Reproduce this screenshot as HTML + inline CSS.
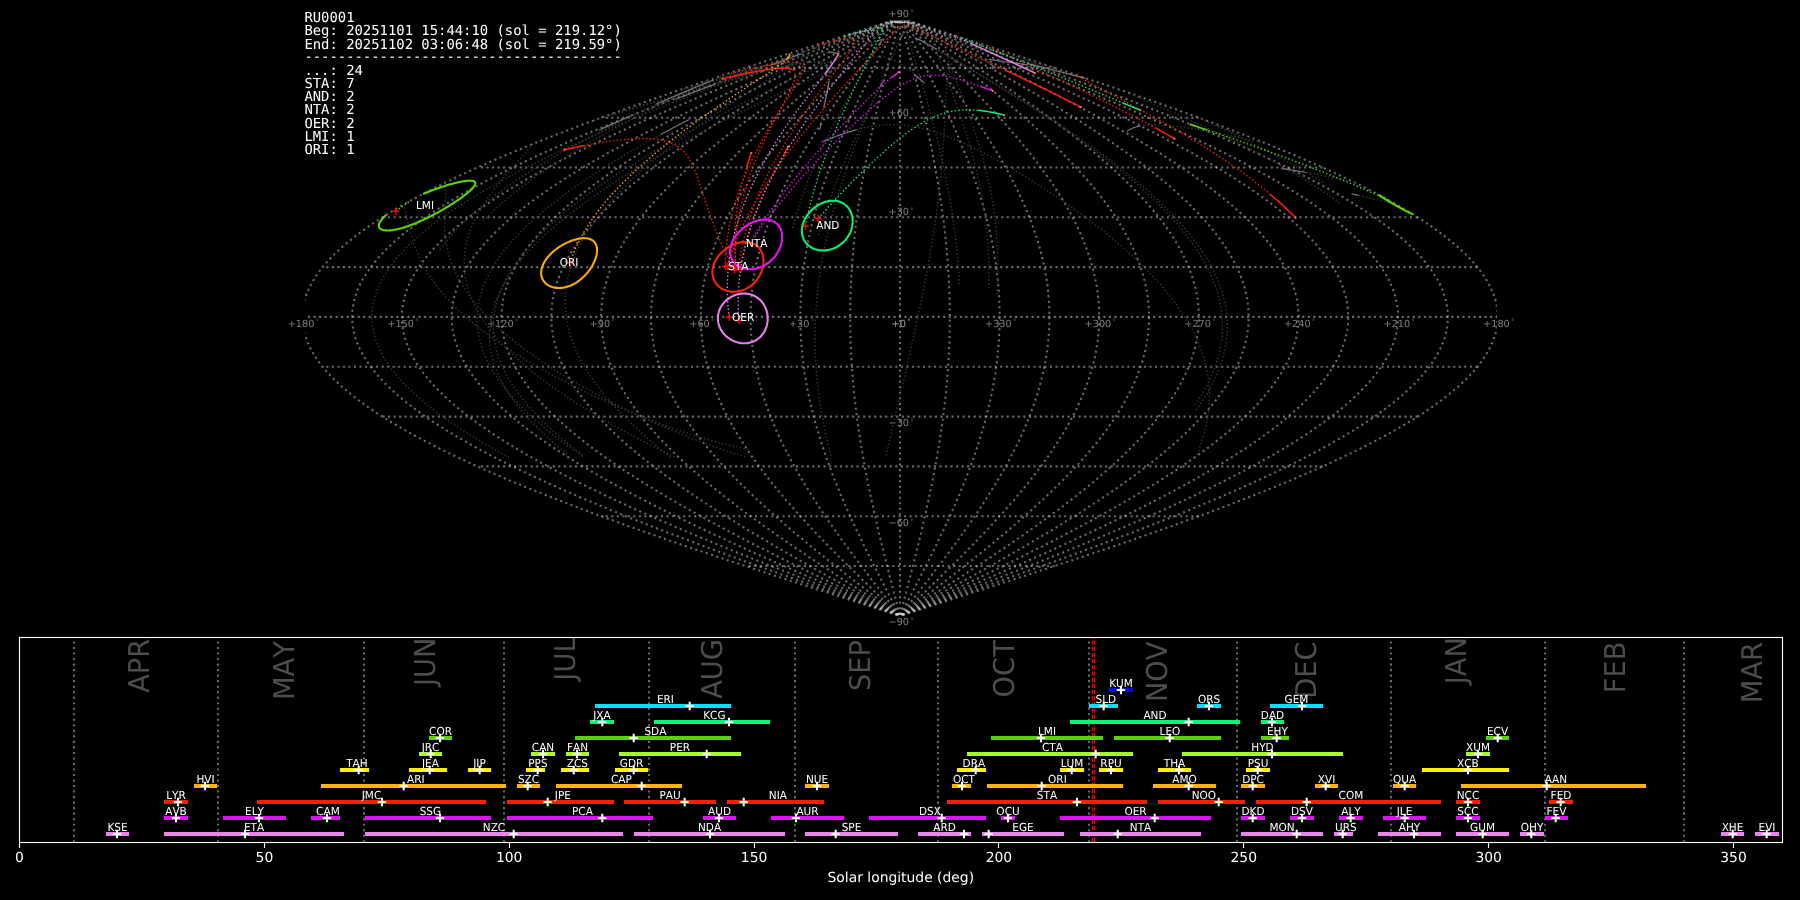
<!DOCTYPE html>
<html><head><meta charset="utf-8"><title>Shower association</title>
<style>html,body{margin:0;padding:0;background:#000;overflow:hidden}svg{display:block;will-change:transform;font-kerning:none}text{font-kerning:none;text-rendering:geometricPrecision}</style></head>
<body><svg width="1800" height="900" viewBox="0 0 1800 900">
<rect width="1800" height="900" fill="#000"/>
<defs><clipPath id="bc"><rect x="19.5" y="637.3" width="1763" height="205"/></clipPath><clipPath id="mc"><rect x="304.9" y="0" width="1192" height="630"/></clipPath></defs>
<g clip-path="url(#mc)" fill="none" stroke="#d4d4d4" stroke-opacity="0.5" stroke-width="2.083" stroke-dasharray="2.083 3.441">
<path d="M903.1,614.8 910.4,612.5 920.9,609.2 931.3,605.9 941.7,602.5 952.1,599.2 962.5,595.9 972.8,592.6 983.2,589.2 993.5,585.9 1003.8,582.6 1014.1,579.3 1024.3,576 1034.5,572.6 1044.6,569.3 1054.7,566 1064.8,562.7 1074.8,559.4 1084.7,556 1094.6,552.7 1104.4,549.4 1114.2,546.1 1123.9,542.8 1133.6,539.4 1143.1,536.1 1152.6,532.8 1162,529.5 1171.4,526.2 1180.6,522.8 1189.8,519.5 1198.9,516.2 1207.9,512.9 1216.7,509.6 1225.5,506.2 1234.2,502.9 1242.8,499.6 1251.3,496.3 1259.7,492.9 1268,489.6 1276.2,486.3 1284.2,483 1292.1,479.7 1300,476.3 1307.6,473 1315.2,469.7 1322.7,466.4 1330,463.1 1337.1,459.7 1344.2,456.4 1351.1,453.1 1357.9,449.8 1364.5,446.5 1371,443.1 1377.4,439.8 1383.6,436.5 1389.6,433.2 1395.5,429.9 1401.3,426.5 1406.9,423.2 1412.4,419.9 1417.6,416.6 1422.8,413.3 1427.8,409.9 1432.6,406.6 1437.2,403.3 1441.7,400 1446,396.6 1450.2,393.3 1454.2,390 1458,386.7 1461.7,383.4 1465.2,380 1468.5,376.7 1471.6,373.4 1474.6,370.1 1477.4,366.8 1480,363.4 1482.4,360.1 1484.7,356.8 1486.7,353.5 1488.6,350.2 1490.4,346.8 1491.9,343.5 1493.3,340.2 1494.5,336.9 1495.5,333.6 1496.3,330.2 1496.9,326.9 1497.4,323.6 1497.6,320.3 1497.7,316.9 1497.6,313.6 1497.4,310.3 1496.9,307 1496.3,303.7 1495.5,300.3 1494.5,297 1493.3,293.7 1491.9,290.4 1490.4,287.1 1488.6,283.7 1486.7,280.4 1484.7,277.1 1482.4,273.8 1480,270.5 1477.4,267.1 1474.6,263.8 1471.6,260.5 1468.5,257.2 1465.2,253.9 1461.7,250.5 1458,247.2 1454.2,243.9 1450.2,240.6 1446,237.3 1441.7,233.9 1437.2,230.6 1432.6,227.3 1427.8,224 1422.8,220.6 1417.6,217.3 1412.4,214 1406.9,210.7 1401.3,207.4 1395.5,204 1389.6,200.7 1383.6,197.4 1377.4,194.1 1371,190.8 1364.5,187.4 1357.9,184.1 1351.1,180.8 1344.2,177.5 1337.1,174.2 1330,170.8 1322.7,167.5 1315.2,164.2 1307.6,160.9 1300,157.6 1292.1,154.2 1284.2,150.9 1276.2,147.6 1268,144.3 1259.7,141 1251.3,137.6 1242.8,134.3 1234.2,131 1225.5,127.7 1216.7,124.3 1207.9,121 1198.9,117.7 1189.8,114.4 1180.6,111.1 1171.4,107.7 1162,104.4 1152.6,101.1 1143.1,97.8 1133.6,94.5 1123.9,91.1 1114.2,87.8 1104.4,84.5 1094.6,81.2 1084.7,77.9 1074.8,74.5 1064.8,71.2 1054.7,67.9 1044.6,64.6 1034.5,61.3 1024.3,57.9 1014.1,54.6 1003.8,51.3 993.5,48 983.2,44.7 972.8,41.3 962.5,38 952.1,34.7 941.7,31.4 931.3,28 920.9,24.7 910.4,21.4"/>
<path d="M902.9,614.8 909.6,612.5 919.1,609.2 928.7,605.9 938.2,602.5 947.8,599.2 957.3,595.9 966.8,592.6 976.3,589.2 985.7,585.9 995.1,582.6 1004.5,579.3 1013.9,576 1023.3,572.6 1032.6,569.3 1041.8,566 1051,562.7 1060.2,559.4 1069.3,556 1078.4,552.7 1087.4,549.4 1096.4,546.1 1105.3,542.8 1114.1,539.4 1122.9,536.1 1131.6,532.8 1140.2,529.5 1148.7,526.2 1157.2,522.8 1165.6,519.5 1174,516.2 1182.2,512.9 1190.4,509.6 1198.4,506.2 1206.4,502.9 1214.3,499.6 1222.1,496.3 1229.7,492.9 1237.3,489.6 1244.8,486.3 1252.2,483 1259.5,479.7 1266.6,476.3 1273.7,473 1280.6,469.7 1287.4,466.4 1294.1,463.1 1300.7,459.7 1307.2,456.4 1313.5,453.1 1319.7,449.8 1325.8,446.5 1331.8,443.1 1337.6,439.8 1343.3,436.5 1348.8,433.2 1354.2,429.9 1359.5,426.5 1364.7,423.2 1369.7,419.9 1374.5,416.6 1379.2,413.3 1383.8,409.9 1388.2,406.6 1392.5,403.3 1396.6,400 1400.5,396.6 1404.4,393.3 1408,390 1411.5,386.7 1414.9,383.4 1418.1,380 1421.1,376.7 1424,373.4 1426.7,370.1 1429.2,366.8 1431.6,363.4 1433.9,360.1 1435.9,356.8 1437.8,353.5 1439.6,350.2 1441.2,346.8 1442.6,343.5 1443.8,340.2 1444.9,336.9 1445.8,333.6 1446.6,330.2 1447.2,326.9 1447.6,323.6 1447.8,320.3 1447.9,316.9 1447.8,313.6 1447.6,310.3 1447.2,307 1446.6,303.7 1445.8,300.3 1444.9,297 1443.8,293.7 1442.6,290.4 1441.2,287.1 1439.6,283.7 1437.8,280.4 1435.9,277.1 1433.9,273.8 1431.6,270.5 1429.2,267.1 1426.7,263.8 1424,260.5 1421.1,257.2 1418.1,253.9 1414.9,250.5 1411.5,247.2 1408,243.9 1404.4,240.6 1400.5,237.3 1396.6,233.9 1392.5,230.6 1388.2,227.3 1383.8,224 1379.2,220.6 1374.5,217.3 1369.7,214 1364.7,210.7 1359.5,207.4 1354.2,204 1348.8,200.7 1343.3,197.4 1337.6,194.1 1331.8,190.8 1325.8,187.4 1319.7,184.1 1313.5,180.8 1307.2,177.5 1300.7,174.2 1294.1,170.8 1287.4,167.5 1280.6,164.2 1273.7,160.9 1266.6,157.6 1259.5,154.2 1252.2,150.9 1244.8,147.6 1237.3,144.3 1229.7,141 1222.1,137.6 1214.3,134.3 1206.4,131 1198.4,127.7 1190.4,124.3 1182.2,121 1174,117.7 1165.6,114.4 1157.2,111.1 1148.7,107.7 1140.2,104.4 1131.6,101.1 1122.9,97.8 1114.1,94.5 1105.3,91.1 1096.4,87.8 1087.4,84.5 1078.4,81.2 1069.3,77.9 1060.2,74.5 1051,71.2 1041.8,67.9 1032.6,64.6 1023.3,61.3 1013.9,57.9 1004.5,54.6 995.1,51.3 985.7,48 976.3,44.7 966.8,41.3 957.3,38 947.8,34.7 938.2,31.4 928.7,28 919.1,24.7 909.6,21.4"/>
<path d="M902.6,614.8 908.7,612.5 917.4,609.2 926.1,605.9 934.7,602.5 943.4,599.2 952.1,595.9 960.7,592.6 969.3,589.2 977.9,585.9 986.5,582.6 995,579.3 1003.6,576 1012,572.6 1020.5,569.3 1028.9,566 1037.3,562.7 1045.6,559.4 1053.9,556 1062.2,552.7 1070.4,549.4 1078.5,546.1 1086.6,542.8 1094.6,539.4 1102.6,536.1 1110.5,532.8 1118.4,529.5 1126.1,526.2 1133.8,522.8 1141.5,519.5 1149.1,516.2 1156.5,512.9 1164,509.6 1171.3,506.2 1178.5,502.9 1185.7,499.6 1192.8,496.3 1199.8,492.9 1206.7,489.6 1213.5,486.3 1220.2,483 1226.8,479.7 1233.3,476.3 1239.7,473 1246,469.7 1252.2,466.4 1258.3,463.1 1264.3,459.7 1270.2,456.4 1275.9,453.1 1281.6,449.8 1287.1,446.5 1292.5,443.1 1297.8,439.8 1303,436.5 1308,433.2 1312.9,429.9 1317.7,426.5 1322.4,423.2 1327,419.9 1331.4,416.6 1335.7,413.3 1339.8,409.9 1343.8,406.6 1347.7,403.3 1351.4,400 1355,396.6 1358.5,393.3 1361.8,390 1365,386.7 1368.1,383.4 1371,380 1373.7,376.7 1376.3,373.4 1378.8,370.1 1381.1,366.8 1383.3,363.4 1385.3,360.1 1387.2,356.8 1389,353.5 1390.5,350.2 1392,346.8 1393.3,343.5 1394.4,340.2 1395.4,336.9 1396.2,333.6 1396.9,330.2 1397.4,326.9 1397.8,323.6 1398,320.3 1398.1,316.9 1398,313.6 1397.8,310.3 1397.4,307 1396.9,303.7 1396.2,300.3 1395.4,297 1394.4,293.7 1393.3,290.4 1392,287.1 1390.5,283.7 1389,280.4 1387.2,277.1 1385.3,273.8 1383.3,270.5 1381.1,267.1 1378.8,263.8 1376.3,260.5 1373.7,257.2 1371,253.9 1368.1,250.5 1365,247.2 1361.8,243.9 1358.5,240.6 1355,237.3 1351.4,233.9 1347.7,230.6 1343.8,227.3 1339.8,224 1335.7,220.6 1331.4,217.3 1327,214 1322.4,210.7 1317.7,207.4 1312.9,204 1308,200.7 1303,197.4 1297.8,194.1 1292.5,190.8 1287.1,187.4 1281.6,184.1 1275.9,180.8 1270.2,177.5 1264.3,174.2 1258.3,170.8 1252.2,167.5 1246,164.2 1239.7,160.9 1233.3,157.6 1226.8,154.2 1220.2,150.9 1213.5,147.6 1206.7,144.3 1199.8,141 1192.8,137.6 1185.7,134.3 1178.5,131 1171.3,127.7 1164,124.3 1156.5,121 1149.1,117.7 1141.5,114.4 1133.8,111.1 1126.1,107.7 1118.4,104.4 1110.5,101.1 1102.6,97.8 1094.6,94.5 1086.6,91.1 1078.5,87.8 1070.4,84.5 1062.2,81.2 1053.9,77.9 1045.6,74.5 1037.3,71.2 1028.9,67.9 1020.5,64.6 1012,61.3 1003.6,57.9 995,54.6 986.5,51.3 977.9,48 969.3,44.7 960.7,41.3 952.1,38 943.4,34.7 934.7,31.4 926.1,28 917.4,24.7 908.7,21.4"/>
<path d="M902.3,614.8 907.8,612.5 915.6,609.2 923.5,605.9 931.3,602.5 939.1,599.2 946.9,595.9 954.6,592.6 962.4,589.2 970.1,585.9 977.8,582.6 985.5,579.3 993.2,576 1000.8,572.6 1008.5,569.3 1016,566 1023.6,562.7 1031.1,559.4 1038.5,556 1046,552.7 1053.3,549.4 1060.7,546.1 1067.9,542.8 1075.2,539.4 1082.3,536.1 1089.5,532.8 1096.5,529.5 1103.5,526.2 1110.5,522.8 1117.3,519.5 1124.1,516.2 1130.9,512.9 1137.6,509.6 1144.2,506.2 1150.7,502.9 1157.1,499.6 1163.5,496.3 1169.8,492.9 1176,489.6 1182.1,486.3 1188.2,483 1194.1,479.7 1200,476.3 1205.7,473 1211.4,469.7 1217,466.4 1222.5,463.1 1227.9,459.7 1233.1,456.4 1238.3,453.1 1243.4,449.8 1248.4,446.5 1253.3,443.1 1258,439.8 1262.7,436.5 1267.2,433.2 1271.7,429.9 1276,426.5 1280.2,423.2 1284.3,419.9 1288.2,416.6 1292.1,413.3 1295.8,409.9 1299.4,406.6 1302.9,403.3 1306.3,400 1309.5,396.6 1312.7,393.3 1315.7,390 1318.5,386.7 1321.3,383.4 1323.9,380 1326.4,376.7 1328.7,373.4 1330.9,370.1 1333,366.8 1335,363.4 1336.8,360.1 1338.5,356.8 1340.1,353.5 1341.5,350.2 1342.8,346.8 1343.9,343.5 1345,340.2 1345.8,336.9 1346.6,333.6 1347.2,330.2 1347.7,326.9 1348,323.6 1348.2,320.3 1348.3,316.9 1348.2,313.6 1348,310.3 1347.7,307 1347.2,303.7 1346.6,300.3 1345.8,297 1345,293.7 1343.9,290.4 1342.8,287.1 1341.5,283.7 1340.1,280.4 1338.5,277.1 1336.8,273.8 1335,270.5 1333,267.1 1330.9,263.8 1328.7,260.5 1326.4,257.2 1323.9,253.9 1321.3,250.5 1318.5,247.2 1315.7,243.9 1312.7,240.6 1309.5,237.3 1306.3,233.9 1302.9,230.6 1299.4,227.3 1295.8,224 1292.1,220.6 1288.2,217.3 1284.3,214 1280.2,210.7 1276,207.4 1271.7,204 1267.2,200.7 1262.7,197.4 1258,194.1 1253.3,190.8 1248.4,187.4 1243.4,184.1 1238.3,180.8 1233.1,177.5 1227.9,174.2 1222.5,170.8 1217,167.5 1211.4,164.2 1205.7,160.9 1200,157.6 1194.1,154.2 1188.2,150.9 1182.1,147.6 1176,144.3 1169.8,141 1163.5,137.6 1157.1,134.3 1150.7,131 1144.2,127.7 1137.6,124.3 1130.9,121 1124.1,117.7 1117.3,114.4 1110.5,111.1 1103.5,107.7 1096.5,104.4 1089.5,101.1 1082.3,97.8 1075.2,94.5 1067.9,91.1 1060.7,87.8 1053.3,84.5 1046,81.2 1038.5,77.9 1031.1,74.5 1023.6,71.2 1016,67.9 1008.5,64.6 1000.8,61.3 993.2,57.9 985.5,54.6 977.8,51.3 970.1,48 962.4,44.7 954.6,41.3 946.9,38 939.1,34.7 931.3,31.4 923.5,28 915.6,24.7 907.8,21.4"/>
<path d="M902.1,614.8 907,612.5 913.9,609.2 920.9,605.9 927.8,602.5 934.7,599.2 941.7,595.9 948.6,592.6 955.5,589.2 962.3,585.9 969.2,582.6 976,579.3 982.8,576 989.6,572.6 996.4,569.3 1003.1,566 1009.8,562.7 1016.5,559.4 1023.1,556 1029.7,552.7 1036.3,549.4 1042.8,546.1 1049.3,542.8 1055.7,539.4 1062.1,536.1 1068.4,532.8 1074.7,529.5 1080.9,526.2 1087.1,522.8 1093.2,519.5 1099.2,516.2 1105.2,512.9 1111.2,509.6 1117,506.2 1122.8,502.9 1128.6,499.6 1134.2,496.3 1139.8,492.9 1145.3,489.6 1150.8,486.3 1156.1,483 1161.4,479.7 1166.6,476.3 1171.8,473 1176.8,469.7 1181.8,466.4 1186.6,463.1 1191.4,459.7 1196.1,456.4 1200.7,453.1 1205.3,449.8 1209.7,446.5 1214,443.1 1218.2,439.8 1222.4,436.5 1226.4,433.2 1230.4,429.9 1234.2,426.5 1237.9,423.2 1241.6,419.9 1245.1,416.6 1248.5,413.3 1251.8,409.9 1255.1,406.6 1258.2,403.3 1261.1,400 1264,396.6 1266.8,393.3 1269.5,390 1272,386.7 1274.5,383.4 1276.8,380 1279,376.7 1281.1,373.4 1283,370.1 1284.9,366.8 1286.6,363.4 1288.3,360.1 1289.8,356.8 1291.2,353.5 1292.4,350.2 1293.6,346.8 1294.6,343.5 1295.5,340.2 1296.3,336.9 1297,333.6 1297.5,330.2 1297.9,326.9 1298.2,323.6 1298.4,320.3 1298.5,316.9 1298.4,313.6 1298.2,310.3 1297.9,307 1297.5,303.7 1297,300.3 1296.3,297 1295.5,293.7 1294.6,290.4 1293.6,287.1 1292.4,283.7 1291.2,280.4 1289.8,277.1 1288.3,273.8 1286.6,270.5 1284.9,267.1 1283,263.8 1281.1,260.5 1279,257.2 1276.8,253.9 1274.5,250.5 1272,247.2 1269.5,243.9 1266.8,240.6 1264,237.3 1261.1,233.9 1258.2,230.6 1255.1,227.3 1251.8,224 1248.5,220.6 1245.1,217.3 1241.6,214 1237.9,210.7 1234.2,207.4 1230.4,204 1226.4,200.7 1222.4,197.4 1218.2,194.1 1214,190.8 1209.7,187.4 1205.3,184.1 1200.7,180.8 1196.1,177.5 1191.4,174.2 1186.6,170.8 1181.8,167.5 1176.8,164.2 1171.8,160.9 1166.6,157.6 1161.4,154.2 1156.1,150.9 1150.8,147.6 1145.3,144.3 1139.8,141 1134.2,137.6 1128.6,134.3 1122.8,131 1117,127.7 1111.2,124.3 1105.2,121 1099.2,117.7 1093.2,114.4 1087.1,111.1 1080.9,107.7 1074.7,104.4 1068.4,101.1 1062.1,97.8 1055.7,94.5 1049.3,91.1 1042.8,87.8 1036.3,84.5 1029.7,81.2 1023.1,77.9 1016.5,74.5 1009.8,71.2 1003.1,67.9 996.4,64.6 989.6,61.3 982.8,57.9 976,54.6 969.2,51.3 962.3,48 955.5,44.7 948.6,41.3 941.7,38 934.7,34.7 927.8,31.4 920.9,28 913.9,24.7 907,21.4"/>
<path d="M901.8,614.8 906.1,612.5 912.2,609.2 918.2,605.9 924.3,602.5 930.4,599.2 936.4,595.9 942.5,592.6 948.5,589.2 954.5,585.9 960.5,582.6 966.5,579.3 972.5,576 978.4,572.6 984.4,569.3 990.2,566 996.1,562.7 1001.9,559.4 1007.7,556 1013.5,552.7 1019.3,549.4 1025,546.1 1030.6,542.8 1036.2,539.4 1041.8,536.1 1047.4,532.8 1052.8,529.5 1058.3,526.2 1063.7,522.8 1069,519.5 1074.3,516.2 1079.6,512.9 1084.8,509.6 1089.9,506.2 1095,502.9 1100,499.6 1104.9,496.3 1109.8,492.9 1114.7,489.6 1119.4,486.3 1124.1,483 1128.8,479.7 1133.3,476.3 1137.8,473 1142.2,469.7 1146.5,466.4 1150.8,463.1 1155,459.7 1159.1,456.4 1163.1,453.1 1167.1,449.8 1171,446.5 1174.8,443.1 1178.5,439.8 1182.1,436.5 1185.6,433.2 1189.1,429.9 1192.4,426.5 1195.7,423.2 1198.9,419.9 1202,416.6 1205,413.3 1207.9,409.9 1210.7,406.6 1213.4,403.3 1216,400 1218.5,396.6 1221,393.3 1223.3,390 1225.5,386.7 1227.6,383.4 1229.7,380 1231.6,376.7 1233.4,373.4 1235.2,370.1 1236.8,366.8 1238.3,363.4 1239.7,360.1 1241.1,356.8 1242.3,353.5 1243.4,350.2 1244.4,346.8 1245.3,343.5 1246.1,340.2 1246.8,336.9 1247.3,333.6 1247.8,330.2 1248.2,326.9 1248.5,323.6 1248.6,320.3 1248.7,316.9 1248.6,313.6 1248.5,310.3 1248.2,307 1247.8,303.7 1247.3,300.3 1246.8,297 1246.1,293.7 1245.3,290.4 1244.4,287.1 1243.4,283.7 1242.3,280.4 1241.1,277.1 1239.7,273.8 1238.3,270.5 1236.8,267.1 1235.2,263.8 1233.4,260.5 1231.6,257.2 1229.7,253.9 1227.6,250.5 1225.5,247.2 1223.3,243.9 1221,240.6 1218.5,237.3 1216,233.9 1213.4,230.6 1210.7,227.3 1207.9,224 1205,220.6 1202,217.3 1198.9,214 1195.7,210.7 1192.4,207.4 1189.1,204 1185.6,200.7 1182.1,197.4 1178.5,194.1 1174.8,190.8 1171,187.4 1167.1,184.1 1163.1,180.8 1159.1,177.5 1155,174.2 1150.8,170.8 1146.5,167.5 1142.2,164.2 1137.8,160.9 1133.3,157.6 1128.8,154.2 1124.1,150.9 1119.4,147.6 1114.7,144.3 1109.8,141 1104.9,137.6 1100,134.3 1095,131 1089.9,127.7 1084.8,124.3 1079.6,121 1074.3,117.7 1069,114.4 1063.7,111.1 1058.3,107.7 1052.8,104.4 1047.4,101.1 1041.8,97.8 1036.2,94.5 1030.6,91.1 1025,87.8 1019.3,84.5 1013.5,81.2 1007.7,77.9 1001.9,74.5 996.1,71.2 990.2,67.9 984.4,64.6 978.4,61.3 972.5,57.9 966.5,54.6 960.5,51.3 954.5,48 948.5,44.7 942.5,41.3 936.4,38 930.4,34.7 924.3,31.4 918.2,28 912.2,24.7 906.1,21.4"/>
<path d="M901.6,614.8 905.2,612.5 910.4,609.2 915.6,605.9 920.8,602.5 926,599.2 931.2,595.9 936.4,592.6 941.6,589.2 946.8,585.9 951.9,582.6 957,579.3 962.1,576 967.2,572.6 972.3,569.3 977.4,566 982.4,562.7 987.4,559.4 992.4,556 997.3,552.7 1002.2,549.4 1007.1,546.1 1012,542.8 1016.8,539.4 1021.6,536.1 1026.3,532.8 1031,529.5 1035.7,526.2 1040.3,522.8 1044.9,519.5 1049.4,516.2 1053.9,512.9 1058.4,509.6 1062.8,506.2 1067.1,502.9 1071.4,499.6 1075.7,496.3 1079.9,492.9 1084,489.6 1088.1,486.3 1092.1,483 1096.1,479.7 1100,476.3 1103.8,473 1107.6,469.7 1111.3,466.4 1115,463.1 1118.6,459.7 1122.1,456.4 1125.6,453.1 1128.9,449.8 1132.3,446.5 1135.5,443.1 1138.7,439.8 1141.8,436.5 1144.8,433.2 1147.8,429.9 1150.6,426.5 1153.5,423.2 1156.2,419.9 1158.8,416.6 1161.4,413.3 1163.9,409.9 1166.3,406.6 1168.6,403.3 1170.9,400 1173,396.6 1175.1,393.3 1177.1,390 1179,386.7 1180.8,383.4 1182.6,380 1184.2,376.7 1185.8,373.4 1187.3,370.1 1188.7,366.8 1190,363.4 1191.2,360.1 1192.3,356.8 1193.4,353.5 1194.3,350.2 1195.2,346.8 1196,343.5 1196.6,340.2 1197.2,336.9 1197.7,333.6 1198.1,330.2 1198.5,326.9 1198.7,323.6 1198.8,320.3 1198.9,316.9 1198.8,313.6 1198.7,310.3 1198.5,307 1198.1,303.7 1197.7,300.3 1197.2,297 1196.6,293.7 1196,290.4 1195.2,287.1 1194.3,283.7 1193.4,280.4 1192.3,277.1 1191.2,273.8 1190,270.5 1188.7,267.1 1187.3,263.8 1185.8,260.5 1184.2,257.2 1182.6,253.9 1180.8,250.5 1179,247.2 1177.1,243.9 1175.1,240.6 1173,237.3 1170.9,233.9 1168.6,230.6 1166.3,227.3 1163.9,224 1161.4,220.6 1158.8,217.3 1156.2,214 1153.5,210.7 1150.6,207.4 1147.8,204 1144.8,200.7 1141.8,197.4 1138.7,194.1 1135.5,190.8 1132.3,187.4 1128.9,184.1 1125.6,180.8 1122.1,177.5 1118.6,174.2 1115,170.8 1111.3,167.5 1107.6,164.2 1103.8,160.9 1100,157.6 1096.1,154.2 1092.1,150.9 1088.1,147.6 1084,144.3 1079.9,141 1075.7,137.6 1071.4,134.3 1067.1,131 1062.8,127.7 1058.4,124.3 1053.9,121 1049.4,117.7 1044.9,114.4 1040.3,111.1 1035.7,107.7 1031,104.4 1026.3,101.1 1021.6,97.8 1016.8,94.5 1012,91.1 1007.1,87.8 1002.2,84.5 997.3,81.2 992.4,77.9 987.4,74.5 982.4,71.2 977.4,67.9 972.3,64.6 967.2,61.3 962.1,57.9 957,54.6 951.9,51.3 946.8,48 941.6,44.7 936.4,41.3 931.2,38 926,34.7 920.8,31.4 915.6,28 910.4,24.7 905.2,21.4"/>
<path d="M901.3,614.8 904.3,612.5 908.7,609.2 913,605.9 917.4,602.5 921.7,599.2 926,595.9 930.4,592.6 934.7,589.2 939,585.9 943.2,582.6 947.5,579.3 951.8,576 956,572.6 960.3,569.3 964.5,566 968.6,562.7 972.8,559.4 977,556 981.1,552.7 985.2,549.4 989.3,546.1 993.3,542.8 997.3,539.4 1001.3,536.1 1005.3,532.8 1009.2,529.5 1013.1,526.2 1016.9,522.8 1020.7,519.5 1024.5,516.2 1028.3,512.9 1032,509.6 1035.6,506.2 1039.3,502.9 1042.9,499.6 1046.4,496.3 1049.9,492.9 1053.3,489.6 1056.7,486.3 1060.1,483 1063.4,479.7 1066.6,476.3 1069.9,473 1073,469.7 1076.1,466.4 1079.2,463.1 1082.1,459.7 1085.1,456.4 1088,453.1 1090.8,449.8 1093.6,446.5 1096.3,443.1 1098.9,439.8 1101.5,436.5 1104,433.2 1106.5,429.9 1108.9,426.5 1111.2,423.2 1113.5,419.9 1115.7,416.6 1117.8,413.3 1119.9,409.9 1121.9,406.6 1123.8,403.3 1125.7,400 1127.5,396.6 1129.3,393.3 1130.9,390 1132.5,386.7 1134,383.4 1135.5,380 1136.9,376.7 1138.2,373.4 1139.4,370.1 1140.6,366.8 1141.7,363.4 1142.7,360.1 1143.6,356.8 1144.5,353.5 1145.3,350.2 1146,346.8 1146.6,343.5 1147.2,340.2 1147.7,336.9 1148.1,333.6 1148.4,330.2 1148.7,326.9 1148.9,323.6 1149,320.3 1149.1,316.9 1149,313.6 1148.9,310.3 1148.7,307 1148.4,303.7 1148.1,300.3 1147.7,297 1147.2,293.7 1146.6,290.4 1146,287.1 1145.3,283.7 1144.5,280.4 1143.6,277.1 1142.7,273.8 1141.7,270.5 1140.6,267.1 1139.4,263.8 1138.2,260.5 1136.9,257.2 1135.5,253.9 1134,250.5 1132.5,247.2 1130.9,243.9 1129.3,240.6 1127.5,237.3 1125.7,233.9 1123.8,230.6 1121.9,227.3 1119.9,224 1117.8,220.6 1115.7,217.3 1113.5,214 1111.2,210.7 1108.9,207.4 1106.5,204 1104,200.7 1101.5,197.4 1098.9,194.1 1096.3,190.8 1093.6,187.4 1090.8,184.1 1088,180.8 1085.1,177.5 1082.1,174.2 1079.2,170.8 1076.1,167.5 1073,164.2 1069.9,160.9 1066.6,157.6 1063.4,154.2 1060.1,150.9 1056.7,147.6 1053.3,144.3 1049.9,141 1046.4,137.6 1042.9,134.3 1039.3,131 1035.6,127.7 1032,124.3 1028.3,121 1024.5,117.7 1020.7,114.4 1016.9,111.1 1013.1,107.7 1009.2,104.4 1005.3,101.1 1001.3,97.8 997.3,94.5 993.3,91.1 989.3,87.8 985.2,84.5 981.1,81.2 977,77.9 972.8,74.5 968.6,71.2 964.5,67.9 960.3,64.6 956,61.3 951.8,57.9 947.5,54.6 943.2,51.3 939,48 934.7,44.7 930.4,41.3 926,38 921.7,34.7 917.4,31.4 913,28 908.7,24.7 904.3,21.4"/>
<path d="M901,614.8 903.5,612.5 907,609.2 910.4,605.9 913.9,602.5 917.4,599.2 920.8,595.9 924.3,592.6 927.7,589.2 931.2,585.9 934.6,582.6 938,579.3 941.4,576 944.8,572.6 948.2,569.3 951.6,566 954.9,562.7 958.3,559.4 961.6,556 964.9,552.7 968.1,549.4 971.4,546.1 974.6,542.8 977.9,539.4 981,536.1 984.2,532.8 987.3,529.5 990.5,526.2 993.5,522.8 996.6,519.5 999.6,516.2 1002.6,512.9 1005.6,509.6 1008.5,506.2 1011.4,502.9 1014.3,499.6 1017.1,496.3 1019.9,492.9 1022.7,489.6 1025.4,486.3 1028.1,483 1030.7,479.7 1033.3,476.3 1035.9,473 1038.4,469.7 1040.9,466.4 1043.3,463.1 1045.7,459.7 1048.1,456.4 1050.4,453.1 1052.6,449.8 1054.8,446.5 1057,443.1 1059.1,439.8 1061.2,436.5 1063.2,433.2 1065.2,429.9 1067.1,426.5 1069,423.2 1070.8,419.9 1072.5,416.6 1074.3,413.3 1075.9,409.9 1077.5,406.6 1079.1,403.3 1080.6,400 1082,396.6 1083.4,393.3 1084.7,390 1086,386.7 1087.2,383.4 1088.4,380 1089.5,376.7 1090.5,373.4 1091.5,370.1 1092.5,366.8 1093.3,363.4 1094.1,360.1 1094.9,356.8 1095.6,353.5 1096.2,350.2 1096.8,346.8 1097.3,343.5 1097.8,340.2 1098.2,336.9 1098.5,333.6 1098.8,330.2 1099,326.9 1099.1,323.6 1099.2,320.3 1099.2,316.9 1099.2,313.6 1099.1,310.3 1099,307 1098.8,303.7 1098.5,300.3 1098.2,297 1097.8,293.7 1097.3,290.4 1096.8,287.1 1096.2,283.7 1095.6,280.4 1094.9,277.1 1094.1,273.8 1093.3,270.5 1092.5,267.1 1091.5,263.8 1090.5,260.5 1089.5,257.2 1088.4,253.9 1087.2,250.5 1086,247.2 1084.7,243.9 1083.4,240.6 1082,237.3 1080.6,233.9 1079.1,230.6 1077.5,227.3 1075.9,224 1074.3,220.6 1072.5,217.3 1070.8,214 1069,210.7 1067.1,207.4 1065.2,204 1063.2,200.7 1061.2,197.4 1059.1,194.1 1057,190.8 1054.8,187.4 1052.6,184.1 1050.4,180.8 1048.1,177.5 1045.7,174.2 1043.3,170.8 1040.9,167.5 1038.4,164.2 1035.9,160.9 1033.3,157.6 1030.7,154.2 1028.1,150.9 1025.4,147.6 1022.7,144.3 1019.9,141 1017.1,137.6 1014.3,134.3 1011.4,131 1008.5,127.7 1005.6,124.3 1002.6,121 999.6,117.7 996.6,114.4 993.5,111.1 990.5,107.7 987.3,104.4 984.2,101.1 981,97.8 977.9,94.5 974.6,91.1 971.4,87.8 968.1,84.5 964.9,81.2 961.6,77.9 958.3,74.5 954.9,71.2 951.6,67.9 948.2,64.6 944.8,61.3 941.4,57.9 938,54.6 934.6,51.3 931.2,48 927.7,44.7 924.3,41.3 920.8,38 917.4,34.7 913.9,31.4 910.4,28 907,24.7 903.5,21.4"/>
<path d="M900.8,614.8 902.6,612.5 905.2,609.2 907.8,605.9 910.4,602.5 913,599.2 915.6,595.9 918.2,592.6 920.8,589.2 923.4,585.9 925.9,582.6 928.5,579.3 931.1,576 933.6,572.6 936.2,569.3 938.7,566 941.2,562.7 943.7,559.4 946.2,556 948.7,552.7 951.1,549.4 953.6,546.1 956,542.8 958.4,539.4 960.8,536.1 963.2,532.8 965.5,529.5 967.8,526.2 970.2,522.8 972.4,519.5 974.7,516.2 977,512.9 979.2,509.6 981.4,506.2 983.6,502.9 985.7,499.6 987.8,496.3 989.9,492.9 992,489.6 994,486.3 996.1,483 998,479.7 1000,476.3 1001.9,473 1003.8,469.7 1005.7,466.4 1007.5,463.1 1009.3,459.7 1011,456.4 1012.8,453.1 1014.5,449.8 1016.1,446.5 1017.8,443.1 1019.3,439.8 1020.9,436.5 1022.4,433.2 1023.9,429.9 1025.3,426.5 1026.7,423.2 1028.1,419.9 1029.4,416.6 1030.7,413.3 1031.9,409.9 1033.1,406.6 1034.3,403.3 1035.4,400 1036.5,396.6 1037.6,393.3 1038.6,390 1039.5,386.7 1040.4,383.4 1041.3,380 1042.1,376.7 1042.9,373.4 1043.6,370.1 1044.3,366.8 1045,363.4 1045.6,360.1 1046.2,356.8 1046.7,353.5 1047.2,350.2 1047.6,346.8 1048,343.5 1048.3,340.2 1048.6,336.9 1048.9,333.6 1049.1,330.2 1049.2,326.9 1049.3,323.6 1049.4,320.3 1049.4,316.9 1049.4,313.6 1049.3,310.3 1049.2,307 1049.1,303.7 1048.9,300.3 1048.6,297 1048.3,293.7 1048,290.4 1047.6,287.1 1047.2,283.7 1046.7,280.4 1046.2,277.1 1045.6,273.8 1045,270.5 1044.3,267.1 1043.6,263.8 1042.9,260.5 1042.1,257.2 1041.3,253.9 1040.4,250.5 1039.5,247.2 1038.6,243.9 1037.6,240.6 1036.5,237.3 1035.4,233.9 1034.3,230.6 1033.1,227.3 1031.9,224 1030.7,220.6 1029.4,217.3 1028.1,214 1026.7,210.7 1025.3,207.4 1023.9,204 1022.4,200.7 1020.9,197.4 1019.3,194.1 1017.8,190.8 1016.1,187.4 1014.5,184.1 1012.8,180.8 1011,177.5 1009.3,174.2 1007.5,170.8 1005.7,167.5 1003.8,164.2 1001.9,160.9 1000,157.6 998,154.2 996.1,150.9 994,147.6 992,144.3 989.9,141 987.8,137.6 985.7,134.3 983.6,131 981.4,127.7 979.2,124.3 977,121 974.7,117.7 972.4,114.4 970.2,111.1 967.8,107.7 965.5,104.4 963.2,101.1 960.8,97.8 958.4,94.5 956,91.1 953.6,87.8 951.1,84.5 948.7,81.2 946.2,77.9 943.7,74.5 941.2,71.2 938.7,67.9 936.2,64.6 933.6,61.3 931.1,57.9 928.5,54.6 925.9,51.3 923.4,48 920.8,44.7 918.2,41.3 915.6,38 913,34.7 910.4,31.4 907.8,28 905.2,24.7 902.6,21.4"/>
<path d="M900.5,614.8 901.7,612.5 903.5,609.2 905.2,605.9 906.9,602.5 908.7,599.2 910.4,595.9 912.1,592.6 913.9,589.2 915.6,585.9 917.3,582.6 919,579.3 920.7,576 922.4,572.6 924.1,569.3 925.8,566 927.5,562.7 929.1,559.4 930.8,556 932.4,552.7 934.1,549.4 935.7,546.1 937.3,542.8 938.9,539.4 940.5,536.1 942.1,532.8 943.7,529.5 945.2,526.2 946.8,522.8 948.3,519.5 949.8,516.2 951.3,512.9 952.8,509.6 954.3,506.2 955.7,502.9 957.1,499.6 958.6,496.3 960,492.9 961.3,489.6 962.7,486.3 964,483 965.4,479.7 966.7,476.3 967.9,473 969.2,469.7 970.4,466.4 971.7,463.1 972.9,459.7 974,456.4 975.2,453.1 976.3,449.8 977.4,446.5 978.5,443.1 979.6,439.8 980.6,436.5 981.6,433.2 982.6,429.9 983.5,426.5 984.5,423.2 985.4,419.9 986.3,416.6 987.1,413.3 988,409.9 988.8,406.6 989.5,403.3 990.3,400 991,396.6 991.7,393.3 992.4,390 993,386.7 993.6,383.4 994.2,380 994.7,376.7 995.3,373.4 995.8,370.1 996.2,366.8 996.7,363.4 997.1,360.1 997.4,356.8 997.8,353.5 998.1,350.2 998.4,346.8 998.7,343.5 998.9,340.2 999.1,336.9 999.2,333.6 999.4,330.2 999.5,326.9 999.6,323.6 999.6,320.3 999.6,316.9 999.6,313.6 999.6,310.3 999.5,307 999.4,303.7 999.2,300.3 999.1,297 998.9,293.7 998.7,290.4 998.4,287.1 998.1,283.7 997.8,280.4 997.4,277.1 997.1,273.8 996.7,270.5 996.2,267.1 995.8,263.8 995.3,260.5 994.7,257.2 994.2,253.9 993.6,250.5 993,247.2 992.4,243.9 991.7,240.6 991,237.3 990.3,233.9 989.5,230.6 988.8,227.3 988,224 987.1,220.6 986.3,217.3 985.4,214 984.5,210.7 983.5,207.4 982.6,204 981.6,200.7 980.6,197.4 979.6,194.1 978.5,190.8 977.4,187.4 976.3,184.1 975.2,180.8 974,177.5 972.9,174.2 971.7,170.8 970.4,167.5 969.2,164.2 967.9,160.9 966.7,157.6 965.4,154.2 964,150.9 962.7,147.6 961.3,144.3 960,141 958.6,137.6 957.1,134.3 955.7,131 954.3,127.7 952.8,124.3 951.3,121 949.8,117.7 948.3,114.4 946.8,111.1 945.2,107.7 943.7,104.4 942.1,101.1 940.5,97.8 938.9,94.5 937.3,91.1 935.7,87.8 934.1,84.5 932.4,81.2 930.8,77.9 929.1,74.5 927.5,71.2 925.8,67.9 924.1,64.6 922.4,61.3 920.7,57.9 919,54.6 917.3,51.3 915.6,48 913.9,44.7 912.1,41.3 910.4,38 908.7,34.7 906.9,31.4 905.2,28 903.5,24.7 901.7,21.4"/>
<path d="M900.3,614.8 900.9,612.5 901.7,609.2 902.6,605.9 903.5,602.5 904.3,599.2 905.2,595.9 906.1,592.6 906.9,589.2 907.8,585.9 908.6,582.6 909.5,579.3 910.4,576 911.2,572.6 912.1,569.3 912.9,566 913.7,562.7 914.6,559.4 915.4,556 916.2,552.7 917,549.4 917.9,546.1 918.7,542.8 919.5,539.4 920.3,536.1 921.1,532.8 921.8,529.5 922.6,526.2 923.4,522.8 924.1,519.5 924.9,516.2 925.7,512.9 926.4,509.6 927.1,506.2 927.9,502.9 928.6,499.6 929.3,496.3 930,492.9 930.7,489.6 931.3,486.3 932,483 932.7,479.7 933.3,476.3 934,473 934.6,469.7 935.2,466.4 935.8,463.1 936.4,459.7 937,456.4 937.6,453.1 938.2,449.8 938.7,446.5 939.3,443.1 939.8,439.8 940.3,436.5 940.8,433.2 941.3,429.9 941.8,426.5 942.2,423.2 942.7,419.9 943.1,416.6 943.6,413.3 944,409.9 944.4,406.6 944.8,403.3 945.1,400 945.5,396.6 945.9,393.3 946.2,390 946.5,386.7 946.8,383.4 947.1,380 947.4,376.7 947.6,373.4 947.9,370.1 948.1,366.8 948.3,363.4 948.5,360.1 948.7,356.8 948.9,353.5 949.1,350.2 949.2,346.8 949.3,343.5 949.4,340.2 949.5,336.9 949.6,333.6 949.7,330.2 949.7,326.9 949.8,323.6 949.8,320.3 949.8,316.9 949.8,313.6 949.8,310.3 949.7,307 949.7,303.7 949.6,300.3 949.5,297 949.4,293.7 949.3,290.4 949.2,287.1 949.1,283.7 948.9,280.4 948.7,277.1 948.5,273.8 948.3,270.5 948.1,267.1 947.9,263.8 947.6,260.5 947.4,257.2 947.1,253.9 946.8,250.5 946.5,247.2 946.2,243.9 945.9,240.6 945.5,237.3 945.1,233.9 944.8,230.6 944.4,227.3 944,224 943.6,220.6 943.1,217.3 942.7,214 942.2,210.7 941.8,207.4 941.3,204 940.8,200.7 940.3,197.4 939.8,194.1 939.3,190.8 938.7,187.4 938.2,184.1 937.6,180.8 937,177.5 936.4,174.2 935.8,170.8 935.2,167.5 934.6,164.2 934,160.9 933.3,157.6 932.7,154.2 932,150.9 931.3,147.6 930.7,144.3 930,141 929.3,137.6 928.6,134.3 927.9,131 927.1,127.7 926.4,124.3 925.7,121 924.9,117.7 924.1,114.4 923.4,111.1 922.6,107.7 921.8,104.4 921.1,101.1 920.3,97.8 919.5,94.5 918.7,91.1 917.9,87.8 917,84.5 916.2,81.2 915.4,77.9 914.6,74.5 913.7,71.2 912.9,67.9 912.1,64.6 911.2,61.3 910.4,57.9 909.5,54.6 908.6,51.3 907.8,48 906.9,44.7 906.1,41.3 905.2,38 904.3,34.7 903.5,31.4 902.6,28 901.7,24.7 900.9,21.4"/>
<path d="M900,614.8 900,612.5 900,609.2 900,605.9 900,602.5 900,599.2 900,595.9 900,592.6 900,589.2 900,585.9 900,582.6 900,579.3 900,576 900,572.6 900,569.3 900,566 900,562.7 900,559.4 900,556 900,552.7 900,549.4 900,546.1 900,542.8 900,539.4 900,536.1 900,532.8 900,529.5 900,526.2 900,522.8 900,519.5 900,516.2 900,512.9 900,509.6 900,506.2 900,502.9 900,499.6 900,496.3 900,492.9 900,489.6 900,486.3 900,483 900,479.7 900,476.3 900,473 900,469.7 900,466.4 900,463.1 900,459.7 900,456.4 900,453.1 900,449.8 900,446.5 900,443.1 900,439.8 900,436.5 900,433.2 900,429.9 900,426.5 900,423.2 900,419.9 900,416.6 900,413.3 900,409.9 900,406.6 900,403.3 900,400 900,396.6 900,393.3 900,390 900,386.7 900,383.4 900,380 900,376.7 900,373.4 900,370.1 900,366.8 900,363.4 900,360.1 900,356.8 900,353.5 900,350.2 900,346.8 900,343.5 900,340.2 900,336.9 900,333.6 900,330.2 900,326.9 900,323.6 900,320.3 900,316.9 900,313.6 900,310.3 900,307 900,303.7 900,300.3 900,297 900,293.7 900,290.4 900,287.1 900,283.7 900,280.4 900,277.1 900,273.8 900,270.5 900,267.1 900,263.8 900,260.5 900,257.2 900,253.9 900,250.5 900,247.2 900,243.9 900,240.6 900,237.3 900,233.9 900,230.6 900,227.3 900,224 900,220.6 900,217.3 900,214 900,210.7 900,207.4 900,204 900,200.7 900,197.4 900,194.1 900,190.8 900,187.4 900,184.1 900,180.8 900,177.5 900,174.2 900,170.8 900,167.5 900,164.2 900,160.9 900,157.6 900,154.2 900,150.9 900,147.6 900,144.3 900,141 900,137.6 900,134.3 900,131 900,127.7 900,124.3 900,121 900,117.7 900,114.4 900,111.1 900,107.7 900,104.4 900,101.1 900,97.8 900,94.5 900,91.1 900,87.8 900,84.5 900,81.2 900,77.9 900,74.5 900,71.2 900,67.9 900,64.6 900,61.3 900,57.9 900,54.6 900,51.3 900,48 900,44.7 900,41.3 900,38 900,34.7 900,31.4 900,28 900,24.7 900,21.4"/>
<path d="M899.7,614.8 899.1,612.5 898.3,609.2 897.4,605.9 896.5,602.5 895.7,599.2 894.8,595.9 893.9,592.6 893.1,589.2 892.2,585.9 891.4,582.6 890.5,579.3 889.6,576 888.8,572.6 887.9,569.3 887.1,566 886.3,562.7 885.4,559.4 884.6,556 883.8,552.7 883,549.4 882.1,546.1 881.3,542.8 880.5,539.4 879.7,536.1 878.9,532.8 878.2,529.5 877.4,526.2 876.6,522.8 875.9,519.5 875.1,516.2 874.3,512.9 873.6,509.6 872.9,506.2 872.1,502.9 871.4,499.6 870.7,496.3 870,492.9 869.3,489.6 868.7,486.3 868,483 867.3,479.7 866.7,476.3 866,473 865.4,469.7 864.8,466.4 864.2,463.1 863.6,459.7 863,456.4 862.4,453.1 861.8,449.8 861.3,446.5 860.7,443.1 860.2,439.8 859.7,436.5 859.2,433.2 858.7,429.9 858.2,426.5 857.8,423.2 857.3,419.9 856.9,416.6 856.4,413.3 856,409.9 855.6,406.6 855.2,403.3 854.9,400 854.5,396.6 854.1,393.3 853.8,390 853.5,386.7 853.2,383.4 852.9,380 852.6,376.7 852.4,373.4 852.1,370.1 851.9,366.8 851.7,363.4 851.5,360.1 851.3,356.8 851.1,353.5 850.9,350.2 850.8,346.8 850.7,343.5 850.6,340.2 850.5,336.9 850.4,333.6 850.3,330.2 850.3,326.9 850.2,323.6 850.2,320.3 850.2,316.9 850.2,313.6 850.2,310.3 850.3,307 850.3,303.7 850.4,300.3 850.5,297 850.6,293.7 850.7,290.4 850.8,287.1 850.9,283.7 851.1,280.4 851.3,277.1 851.5,273.8 851.7,270.5 851.9,267.1 852.1,263.8 852.4,260.5 852.6,257.2 852.9,253.9 853.2,250.5 853.5,247.2 853.8,243.9 854.1,240.6 854.5,237.3 854.9,233.9 855.2,230.6 855.6,227.3 856,224 856.4,220.6 856.9,217.3 857.3,214 857.8,210.7 858.2,207.4 858.7,204 859.2,200.7 859.7,197.4 860.2,194.1 860.7,190.8 861.3,187.4 861.8,184.1 862.4,180.8 863,177.5 863.6,174.2 864.2,170.8 864.8,167.5 865.4,164.2 866,160.9 866.7,157.6 867.3,154.2 868,150.9 868.7,147.6 869.3,144.3 870,141 870.7,137.6 871.4,134.3 872.1,131 872.9,127.7 873.6,124.3 874.3,121 875.1,117.7 875.9,114.4 876.6,111.1 877.4,107.7 878.2,104.4 878.9,101.1 879.7,97.8 880.5,94.5 881.3,91.1 882.1,87.8 883,84.5 883.8,81.2 884.6,77.9 885.4,74.5 886.3,71.2 887.1,67.9 887.9,64.6 888.8,61.3 889.6,57.9 890.5,54.6 891.4,51.3 892.2,48 893.1,44.7 893.9,41.3 894.8,38 895.7,34.7 896.5,31.4 897.4,28 898.3,24.7 899.1,21.4"/>
<path d="M899.5,614.8 898.3,612.5 896.5,609.2 894.8,605.9 893.1,602.5 891.3,599.2 889.6,595.9 887.9,592.6 886.1,589.2 884.4,585.9 882.7,582.6 881,579.3 879.3,576 877.6,572.6 875.9,569.3 874.2,566 872.5,562.7 870.9,559.4 869.2,556 867.6,552.7 865.9,549.4 864.3,546.1 862.7,542.8 861.1,539.4 859.5,536.1 857.9,532.8 856.3,529.5 854.8,526.2 853.2,522.8 851.7,519.5 850.2,516.2 848.7,512.9 847.2,509.6 845.7,506.2 844.3,502.9 842.9,499.6 841.4,496.3 840,492.9 838.7,489.6 837.3,486.3 836,483 834.6,479.7 833.3,476.3 832.1,473 830.8,469.7 829.6,466.4 828.3,463.1 827.1,459.7 826,456.4 824.8,453.1 823.7,449.8 822.6,446.5 821.5,443.1 820.4,439.8 819.4,436.5 818.4,433.2 817.4,429.9 816.5,426.5 815.5,423.2 814.6,419.9 813.7,416.6 812.9,413.3 812,409.9 811.2,406.6 810.5,403.3 809.7,400 809,396.6 808.3,393.3 807.6,390 807,386.7 806.4,383.4 805.8,380 805.3,376.7 804.7,373.4 804.2,370.1 803.8,366.8 803.3,363.4 802.9,360.1 802.6,356.8 802.2,353.5 801.9,350.2 801.6,346.8 801.3,343.5 801.1,340.2 800.9,336.9 800.8,333.6 800.6,330.2 800.5,326.9 800.4,323.6 800.4,320.3 800.4,316.9 800.4,313.6 800.4,310.3 800.5,307 800.6,303.7 800.8,300.3 800.9,297 801.1,293.7 801.3,290.4 801.6,287.1 801.9,283.7 802.2,280.4 802.6,277.1 802.9,273.8 803.3,270.5 803.8,267.1 804.2,263.8 804.7,260.5 805.3,257.2 805.8,253.9 806.4,250.5 807,247.2 807.6,243.9 808.3,240.6 809,237.3 809.7,233.9 810.5,230.6 811.2,227.3 812,224 812.9,220.6 813.7,217.3 814.6,214 815.5,210.7 816.5,207.4 817.4,204 818.4,200.7 819.4,197.4 820.4,194.1 821.5,190.8 822.6,187.4 823.7,184.1 824.8,180.8 826,177.5 827.1,174.2 828.3,170.8 829.6,167.5 830.8,164.2 832.1,160.9 833.3,157.6 834.6,154.2 836,150.9 837.3,147.6 838.7,144.3 840,141 841.4,137.6 842.9,134.3 844.3,131 845.7,127.7 847.2,124.3 848.7,121 850.2,117.7 851.7,114.4 853.2,111.1 854.8,107.7 856.3,104.4 857.9,101.1 859.5,97.8 861.1,94.5 862.7,91.1 864.3,87.8 865.9,84.5 867.6,81.2 869.2,77.9 870.9,74.5 872.5,71.2 874.2,67.9 875.9,64.6 877.6,61.3 879.3,57.9 881,54.6 882.7,51.3 884.4,48 886.1,44.7 887.9,41.3 889.6,38 891.3,34.7 893.1,31.4 894.8,28 896.5,24.7 898.3,21.4"/>
<path d="M899.2,614.8 897.4,612.5 894.8,609.2 892.2,605.9 889.6,602.5 887,599.2 884.4,595.9 881.8,592.6 879.2,589.2 876.6,585.9 874.1,582.6 871.5,579.3 868.9,576 866.4,572.6 863.8,569.3 861.3,566 858.8,562.7 856.3,559.4 853.8,556 851.3,552.7 848.9,549.4 846.4,546.1 844,542.8 841.6,539.4 839.2,536.1 836.8,532.8 834.5,529.5 832.2,526.2 829.8,522.8 827.6,519.5 825.3,516.2 823,512.9 820.8,509.6 818.6,506.2 816.4,502.9 814.3,499.6 812.2,496.3 810.1,492.9 808,489.6 806,486.3 803.9,483 802,479.7 800,476.3 798.1,473 796.2,469.7 794.3,466.4 792.5,463.1 790.7,459.7 789,456.4 787.2,453.1 785.5,449.8 783.9,446.5 782.2,443.1 780.7,439.8 779.1,436.5 777.6,433.2 776.1,429.9 774.7,426.5 773.3,423.2 771.9,419.9 770.6,416.6 769.3,413.3 768.1,409.9 766.9,406.6 765.7,403.3 764.6,400 763.5,396.6 762.4,393.3 761.4,390 760.5,386.7 759.6,383.4 758.7,380 757.9,376.7 757.1,373.4 756.4,370.1 755.7,366.8 755,363.4 754.4,360.1 753.8,356.8 753.3,353.5 752.8,350.2 752.4,346.8 752,343.5 751.7,340.2 751.4,336.9 751.1,333.6 750.9,330.2 750.8,326.9 750.7,323.6 750.6,320.3 750.6,316.9 750.6,313.6 750.7,310.3 750.8,307 750.9,303.7 751.1,300.3 751.4,297 751.7,293.7 752,290.4 752.4,287.1 752.8,283.7 753.3,280.4 753.8,277.1 754.4,273.8 755,270.5 755.7,267.1 756.4,263.8 757.1,260.5 757.9,257.2 758.7,253.9 759.6,250.5 760.5,247.2 761.4,243.9 762.4,240.6 763.5,237.3 764.6,233.9 765.7,230.6 766.9,227.3 768.1,224 769.3,220.6 770.6,217.3 771.9,214 773.3,210.7 774.7,207.4 776.1,204 777.6,200.7 779.1,197.4 780.7,194.1 782.2,190.8 783.9,187.4 785.5,184.1 787.2,180.8 789,177.5 790.7,174.2 792.5,170.8 794.3,167.5 796.2,164.2 798.1,160.9 800,157.6 802,154.2 803.9,150.9 806,147.6 808,144.3 810.1,141 812.2,137.6 814.3,134.3 816.4,131 818.6,127.7 820.8,124.3 823,121 825.3,117.7 827.6,114.4 829.8,111.1 832.2,107.7 834.5,104.4 836.8,101.1 839.2,97.8 841.6,94.5 844,91.1 846.4,87.8 848.9,84.5 851.3,81.2 853.8,77.9 856.3,74.5 858.8,71.2 861.3,67.9 863.8,64.6 866.4,61.3 868.9,57.9 871.5,54.6 874.1,51.3 876.6,48 879.2,44.7 881.8,41.3 884.4,38 887,34.7 889.6,31.4 892.2,28 894.8,24.7 897.4,21.4"/>
<path d="M899,614.8 896.5,612.5 893,609.2 889.6,605.9 886.1,602.5 882.6,599.2 879.2,595.9 875.7,592.6 872.3,589.2 868.8,585.9 865.4,582.6 862,579.3 858.6,576 855.2,572.6 851.8,569.3 848.4,566 845.1,562.7 841.7,559.4 838.4,556 835.1,552.7 831.9,549.4 828.6,546.1 825.4,542.8 822.1,539.4 819,536.1 815.8,532.8 812.7,529.5 809.5,526.2 806.5,522.8 803.4,519.5 800.4,516.2 797.4,512.9 794.4,509.6 791.5,506.2 788.6,502.9 785.7,499.6 782.9,496.3 780.1,492.9 777.3,489.6 774.6,486.3 771.9,483 769.3,479.7 766.7,476.3 764.1,473 761.6,469.7 759.1,466.4 756.7,463.1 754.3,459.7 751.9,456.4 749.6,453.1 747.4,449.8 745.2,446.5 743,443.1 740.9,439.8 738.8,436.5 736.8,433.2 734.8,429.9 732.9,426.5 731,423.2 729.2,419.9 727.5,416.6 725.7,413.3 724.1,409.9 722.5,406.6 720.9,403.3 719.4,400 718,396.6 716.6,393.3 715.3,390 714,386.7 712.8,383.4 711.6,380 710.5,376.7 709.5,373.4 708.5,370.1 707.5,366.8 706.7,363.4 705.9,360.1 705.1,356.8 704.4,353.5 703.8,350.2 703.2,346.8 702.7,343.5 702.2,340.2 701.8,336.9 701.5,333.6 701.2,330.2 701,326.9 700.9,323.6 700.8,320.3 700.8,316.9 700.8,313.6 700.9,310.3 701,307 701.2,303.7 701.5,300.3 701.8,297 702.2,293.7 702.7,290.4 703.2,287.1 703.8,283.7 704.4,280.4 705.1,277.1 705.9,273.8 706.7,270.5 707.5,267.1 708.5,263.8 709.5,260.5 710.5,257.2 711.6,253.9 712.8,250.5 714,247.2 715.3,243.9 716.6,240.6 718,237.3 719.4,233.9 720.9,230.6 722.5,227.3 724.1,224 725.7,220.6 727.5,217.3 729.2,214 731,210.7 732.9,207.4 734.8,204 736.8,200.7 738.8,197.4 740.9,194.1 743,190.8 745.2,187.4 747.4,184.1 749.6,180.8 751.9,177.5 754.3,174.2 756.7,170.8 759.1,167.5 761.6,164.2 764.1,160.9 766.7,157.6 769.3,154.2 771.9,150.9 774.6,147.6 777.3,144.3 780.1,141 782.9,137.6 785.7,134.3 788.6,131 791.5,127.7 794.4,124.3 797.4,121 800.4,117.7 803.4,114.4 806.5,111.1 809.5,107.7 812.7,104.4 815.8,101.1 819,97.8 822.1,94.5 825.4,91.1 828.6,87.8 831.9,84.5 835.1,81.2 838.4,77.9 841.7,74.5 845.1,71.2 848.4,67.9 851.8,64.6 855.2,61.3 858.6,57.9 862,54.6 865.4,51.3 868.8,48 872.3,44.7 875.7,41.3 879.2,38 882.6,34.7 886.1,31.4 889.6,28 893,24.7 896.5,21.4"/>
<path d="M898.7,614.8 895.7,612.5 891.3,609.2 887,605.9 882.6,602.5 878.3,599.2 874,595.9 869.6,592.6 865.3,589.2 861,585.9 856.8,582.6 852.5,579.3 848.2,576 844,572.6 839.7,569.3 835.5,566 831.4,562.7 827.2,559.4 823,556 818.9,552.7 814.8,549.4 810.7,546.1 806.7,542.8 802.7,539.4 798.7,536.1 794.7,532.8 790.8,529.5 786.9,526.2 783.1,522.8 779.3,519.5 775.5,516.2 771.7,512.9 768,509.6 764.4,506.2 760.7,502.9 757.1,499.6 753.6,496.3 750.1,492.9 746.7,489.6 743.3,486.3 739.9,483 736.6,479.7 733.4,476.3 730.1,473 727,469.7 723.9,466.4 720.8,463.1 717.9,459.7 714.9,456.4 712,453.1 709.2,449.8 706.4,446.5 703.7,443.1 701.1,439.8 698.5,436.5 696,433.2 693.5,429.9 691.1,426.5 688.8,423.2 686.5,419.9 684.3,416.6 682.2,413.3 680.1,409.9 678.1,406.6 676.2,403.3 674.3,400 672.5,396.6 670.7,393.3 669.1,390 667.5,386.7 666,383.4 664.5,380 663.1,376.7 661.8,373.4 660.6,370.1 659.4,366.8 658.3,363.4 657.3,360.1 656.4,356.8 655.5,353.5 654.7,350.2 654,346.8 653.4,343.5 652.8,340.2 652.3,336.9 651.9,333.6 651.6,330.2 651.3,326.9 651.1,323.6 651,320.3 650.9,316.9 651,313.6 651.1,310.3 651.3,307 651.6,303.7 651.9,300.3 652.3,297 652.8,293.7 653.4,290.4 654,287.1 654.7,283.7 655.5,280.4 656.4,277.1 657.3,273.8 658.3,270.5 659.4,267.1 660.6,263.8 661.8,260.5 663.1,257.2 664.5,253.9 666,250.5 667.5,247.2 669.1,243.9 670.7,240.6 672.5,237.3 674.3,233.9 676.2,230.6 678.1,227.3 680.1,224 682.2,220.6 684.3,217.3 686.5,214 688.8,210.7 691.1,207.4 693.5,204 696,200.7 698.5,197.4 701.1,194.1 703.7,190.8 706.4,187.4 709.2,184.1 712,180.8 714.9,177.5 717.9,174.2 720.8,170.8 723.9,167.5 727,164.2 730.1,160.9 733.4,157.6 736.6,154.2 739.9,150.9 743.3,147.6 746.7,144.3 750.1,141 753.6,137.6 757.1,134.3 760.7,131 764.4,127.7 768,124.3 771.7,121 775.5,117.7 779.3,114.4 783.1,111.1 786.9,107.7 790.8,104.4 794.7,101.1 798.7,97.8 802.7,94.5 806.7,91.1 810.7,87.8 814.8,84.5 818.9,81.2 823,77.9 827.2,74.5 831.4,71.2 835.5,67.9 839.7,64.6 844,61.3 848.2,57.9 852.5,54.6 856.8,51.3 861,48 865.3,44.7 869.6,41.3 874,38 878.3,34.7 882.6,31.4 887,28 891.3,24.7 895.7,21.4"/>
<path d="M898.4,614.8 894.8,612.5 889.6,609.2 884.4,605.9 879.2,602.5 874,599.2 868.8,595.9 863.6,592.6 858.4,589.2 853.2,585.9 848.1,582.6 843,579.3 837.9,576 832.8,572.6 827.7,569.3 822.6,566 817.6,562.7 812.6,559.4 807.6,556 802.7,552.7 797.8,549.4 792.9,546.1 788,542.8 783.2,539.4 778.4,536.1 773.7,532.8 769,529.5 764.3,526.2 759.7,522.8 755.1,519.5 750.6,516.2 746.1,512.9 741.6,509.6 737.2,506.2 732.9,502.9 728.6,499.6 724.3,496.3 720.1,492.9 716,489.6 711.9,486.3 707.9,483 703.9,479.7 700,476.3 696.2,473 692.4,469.7 688.7,466.4 685,463.1 681.4,459.7 677.9,456.4 674.4,453.1 671.1,449.8 667.7,446.5 664.5,443.1 661.3,439.8 658.2,436.5 655.2,433.2 652.2,429.9 649.4,426.5 646.5,423.2 643.8,419.9 641.2,416.6 638.6,413.3 636.1,409.9 633.7,406.6 631.4,403.3 629.1,400 627,396.6 624.9,393.3 622.9,390 621,386.7 619.2,383.4 617.4,380 615.8,376.7 614.2,373.4 612.7,370.1 611.3,366.8 610,363.4 608.8,360.1 607.7,356.8 606.6,353.5 605.7,350.2 604.8,346.8 604,343.5 603.4,340.2 602.8,336.9 602.3,333.6 601.9,330.2 601.5,326.9 601.3,323.6 601.2,320.3 601.1,316.9 601.2,313.6 601.3,310.3 601.5,307 601.9,303.7 602.3,300.3 602.8,297 603.4,293.7 604,290.4 604.8,287.1 605.7,283.7 606.6,280.4 607.7,277.1 608.8,273.8 610,270.5 611.3,267.1 612.7,263.8 614.2,260.5 615.8,257.2 617.4,253.9 619.2,250.5 621,247.2 622.9,243.9 624.9,240.6 627,237.3 629.1,233.9 631.4,230.6 633.7,227.3 636.1,224 638.6,220.6 641.2,217.3 643.8,214 646.5,210.7 649.4,207.4 652.2,204 655.2,200.7 658.2,197.4 661.3,194.1 664.5,190.8 667.7,187.4 671.1,184.1 674.4,180.8 677.9,177.5 681.4,174.2 685,170.8 688.7,167.5 692.4,164.2 696.2,160.9 700,157.6 703.9,154.2 707.9,150.9 711.9,147.6 716,144.3 720.1,141 724.3,137.6 728.6,134.3 732.9,131 737.2,127.7 741.6,124.3 746.1,121 750.6,117.7 755.1,114.4 759.7,111.1 764.3,107.7 769,104.4 773.7,101.1 778.4,97.8 783.2,94.5 788,91.1 792.9,87.8 797.8,84.5 802.7,81.2 807.6,77.9 812.6,74.5 817.6,71.2 822.6,67.9 827.7,64.6 832.8,61.3 837.9,57.9 843,54.6 848.1,51.3 853.2,48 858.4,44.7 863.6,41.3 868.8,38 874,34.7 879.2,31.4 884.4,28 889.6,24.7 894.8,21.4"/>
<path d="M898.2,614.8 893.9,612.5 887.8,609.2 881.8,605.9 875.7,602.5 869.6,599.2 863.6,595.9 857.5,592.6 851.5,589.2 845.5,585.9 839.5,582.6 833.5,579.3 827.5,576 821.6,572.6 815.6,569.3 809.8,566 803.9,562.7 798.1,559.4 792.3,556 786.5,552.7 780.7,549.4 775,546.1 769.4,542.8 763.8,539.4 758.2,536.1 752.6,532.8 747.2,529.5 741.7,526.2 736.3,522.8 731,519.5 725.7,516.2 720.4,512.9 715.2,509.6 710.1,506.2 705,502.9 700,499.6 695.1,496.3 690.2,492.9 685.3,489.6 680.6,486.3 675.9,483 671.2,479.7 666.7,476.3 662.2,473 657.8,469.7 653.5,466.4 649.2,463.1 645,459.7 640.9,456.4 636.9,453.1 632.9,449.8 629,446.5 625.2,443.1 621.5,439.8 617.9,436.5 614.4,433.2 610.9,429.9 607.6,426.5 604.3,423.2 601.1,419.9 598,416.6 595,413.3 592.1,409.9 589.3,406.6 586.6,403.3 584,400 581.5,396.6 579,393.3 576.7,390 574.5,386.7 572.4,383.4 570.3,380 568.4,376.7 566.6,373.4 564.8,370.1 563.2,366.8 561.7,363.4 560.3,360.1 558.9,356.8 557.7,353.5 556.6,350.2 555.6,346.8 554.7,343.5 553.9,340.2 553.2,336.9 552.7,333.6 552.2,330.2 551.8,326.9 551.5,323.6 551.4,320.3 551.3,316.9 551.4,313.6 551.5,310.3 551.8,307 552.2,303.7 552.7,300.3 553.2,297 553.9,293.7 554.7,290.4 555.6,287.1 556.6,283.7 557.7,280.4 558.9,277.1 560.3,273.8 561.7,270.5 563.2,267.1 564.8,263.8 566.6,260.5 568.4,257.2 570.3,253.9 572.4,250.5 574.5,247.2 576.7,243.9 579,240.6 581.5,237.3 584,233.9 586.6,230.6 589.3,227.3 592.1,224 595,220.6 598,217.3 601.1,214 604.3,210.7 607.6,207.4 610.9,204 614.4,200.7 617.9,197.4 621.5,194.1 625.2,190.8 629,187.4 632.9,184.1 636.9,180.8 640.9,177.5 645,174.2 649.2,170.8 653.5,167.5 657.8,164.2 662.2,160.9 666.7,157.6 671.2,154.2 675.9,150.9 680.6,147.6 685.3,144.3 690.2,141 695.1,137.6 700,134.3 705,131 710.1,127.7 715.2,124.3 720.4,121 725.7,117.7 731,114.4 736.3,111.1 741.7,107.7 747.2,104.4 752.6,101.1 758.2,97.8 763.8,94.5 769.4,91.1 775,87.8 780.7,84.5 786.5,81.2 792.3,77.9 798.1,74.5 803.9,71.2 809.8,67.9 815.6,64.6 821.6,61.3 827.5,57.9 833.5,54.6 839.5,51.3 845.5,48 851.5,44.7 857.5,41.3 863.6,38 869.6,34.7 875.7,31.4 881.8,28 887.8,24.7 893.9,21.4"/>
<path d="M897.9,614.8 893,612.5 886.1,609.2 879.1,605.9 872.2,602.5 865.3,599.2 858.3,595.9 851.4,592.6 844.5,589.2 837.7,585.9 830.8,582.6 824,579.3 817.2,576 810.4,572.6 803.6,569.3 796.9,566 790.2,562.7 783.5,559.4 776.9,556 770.3,552.7 763.7,549.4 757.2,546.1 750.7,542.8 744.3,539.4 737.9,536.1 731.6,532.8 725.3,529.5 719.1,526.2 712.9,522.8 706.8,519.5 700.8,516.2 694.8,512.9 688.8,509.6 683,506.2 677.2,502.9 671.4,499.6 665.8,496.3 660.2,492.9 654.7,489.6 649.2,486.3 643.9,483 638.6,479.7 633.4,476.3 628.2,473 623.2,469.7 618.2,466.4 613.4,463.1 608.6,459.7 603.9,456.4 599.3,453.1 594.7,449.8 590.3,446.5 586,443.1 581.8,439.8 577.6,436.5 573.6,433.2 569.6,429.9 565.8,426.5 562.1,423.2 558.4,419.9 554.9,416.6 551.5,413.3 548.2,409.9 544.9,406.6 541.8,403.3 538.9,400 536,396.6 533.2,393.3 530.5,390 528,386.7 525.5,383.4 523.2,380 521,376.7 518.9,373.4 517,370.1 515.1,366.8 513.4,363.4 511.7,360.1 510.2,356.8 508.8,353.5 507.6,350.2 506.4,346.8 505.4,343.5 504.5,340.2 503.7,336.9 503,333.6 502.5,330.2 502.1,326.9 501.8,323.6 501.6,320.3 501.5,316.9 501.6,313.6 501.8,310.3 502.1,307 502.5,303.7 503,300.3 503.7,297 504.5,293.7 505.4,290.4 506.4,287.1 507.6,283.7 508.8,280.4 510.2,277.1 511.7,273.8 513.4,270.5 515.1,267.1 517,263.8 518.9,260.5 521,257.2 523.2,253.9 525.5,250.5 528,247.2 530.5,243.9 533.2,240.6 536,237.3 538.9,233.9 541.8,230.6 544.9,227.3 548.2,224 551.5,220.6 554.9,217.3 558.4,214 562.1,210.7 565.8,207.4 569.6,204 573.6,200.7 577.6,197.4 581.8,194.1 586,190.8 590.3,187.4 594.7,184.1 599.3,180.8 603.9,177.5 608.6,174.2 613.4,170.8 618.2,167.5 623.2,164.2 628.2,160.9 633.4,157.6 638.6,154.2 643.9,150.9 649.2,147.6 654.7,144.3 660.2,141 665.8,137.6 671.4,134.3 677.2,131 683,127.7 688.8,124.3 694.8,121 700.8,117.7 706.8,114.4 712.9,111.1 719.1,107.7 725.3,104.4 731.6,101.1 737.9,97.8 744.3,94.5 750.7,91.1 757.2,87.8 763.7,84.5 770.3,81.2 776.9,77.9 783.5,74.5 790.2,71.2 796.9,67.9 803.6,64.6 810.4,61.3 817.2,57.9 824,54.6 830.8,51.3 837.7,48 844.5,44.7 851.4,41.3 858.3,38 865.3,34.7 872.2,31.4 879.1,28 886.1,24.7 893,21.4"/>
<path d="M897.7,614.8 892.2,612.5 884.4,609.2 876.5,605.9 868.7,602.5 860.9,599.2 853.1,595.9 845.4,592.6 837.6,589.2 829.9,585.9 822.2,582.6 814.5,579.3 806.8,576 799.2,572.6 791.5,569.3 784,566 776.4,562.7 768.9,559.4 761.5,556 754,552.7 746.7,549.4 739.3,546.1 732.1,542.8 724.8,539.4 717.7,536.1 710.5,532.8 703.5,529.5 696.5,526.2 689.5,522.8 682.7,519.5 675.9,516.2 669.1,512.9 662.4,509.6 655.8,506.2 649.3,502.9 642.9,499.6 636.5,496.3 630.2,492.9 624,489.6 617.9,486.3 611.8,483 605.9,479.7 600,476.3 594.3,473 588.6,469.7 583,466.4 577.5,463.1 572.1,459.7 566.9,456.4 561.7,453.1 556.6,449.8 551.6,446.5 546.7,443.1 542,439.8 537.3,436.5 532.8,433.2 528.3,429.9 524,426.5 519.8,423.2 515.7,419.9 511.8,416.6 507.9,413.3 504.2,409.9 500.6,406.6 497.1,403.3 493.7,400 490.5,396.6 487.3,393.3 484.3,390 481.5,386.7 478.7,383.4 476.1,380 473.6,376.7 471.3,373.4 469.1,370.1 467,366.8 465,363.4 463.2,360.1 461.5,356.8 459.9,353.5 458.5,350.2 457.2,346.8 456.1,343.5 455,340.2 454.2,336.9 453.4,333.6 452.8,330.2 452.3,326.9 452,323.6 451.8,320.3 451.7,316.9 451.8,313.6 452,310.3 452.3,307 452.8,303.7 453.4,300.3 454.2,297 455,293.7 456.1,290.4 457.2,287.1 458.5,283.7 459.9,280.4 461.5,277.1 463.2,273.8 465,270.5 467,267.1 469.1,263.8 471.3,260.5 473.6,257.2 476.1,253.9 478.7,250.5 481.5,247.2 484.3,243.9 487.3,240.6 490.5,237.3 493.7,233.9 497.1,230.6 500.6,227.3 504.2,224 507.9,220.6 511.8,217.3 515.7,214 519.8,210.7 524,207.4 528.3,204 532.8,200.7 537.3,197.4 542,194.1 546.7,190.8 551.6,187.4 556.6,184.1 561.7,180.8 566.9,177.5 572.1,174.2 577.5,170.8 583,167.5 588.6,164.2 594.3,160.9 600,157.6 605.9,154.2 611.8,150.9 617.9,147.6 624,144.3 630.2,141 636.5,137.6 642.9,134.3 649.3,131 655.8,127.7 662.4,124.3 669.1,121 675.9,117.7 682.7,114.4 689.5,111.1 696.5,107.7 703.5,104.4 710.5,101.1 717.7,97.8 724.8,94.5 732.1,91.1 739.3,87.8 746.7,84.5 754,81.2 761.5,77.9 768.9,74.5 776.4,71.2 784,67.9 791.5,64.6 799.2,61.3 806.8,57.9 814.5,54.6 822.2,51.3 829.9,48 837.6,44.7 845.4,41.3 853.1,38 860.9,34.7 868.7,31.4 876.5,28 884.4,24.7 892.2,21.4"/>
<path d="M897.4,614.8 891.3,612.5 882.6,609.2 873.9,605.9 865.3,602.5 856.6,599.2 847.9,595.9 839.3,592.6 830.7,589.2 822.1,585.9 813.5,582.6 805,579.3 796.4,576 788,572.6 779.5,569.3 771.1,566 762.7,562.7 754.4,559.4 746.1,556 737.8,552.7 729.6,549.4 721.5,546.1 713.4,542.8 705.4,539.4 697.4,536.1 689.5,532.8 681.6,529.5 673.9,526.2 666.2,522.8 658.5,519.5 650.9,516.2 643.5,512.9 636,509.6 628.7,506.2 621.5,502.9 614.3,499.6 607.2,496.3 600.2,492.9 593.3,489.6 586.5,486.3 579.8,483 573.2,479.7 566.7,476.3 560.3,473 554,469.7 547.8,466.4 541.7,463.1 535.7,459.7 529.8,456.4 524.1,453.1 518.4,449.8 512.9,446.5 507.5,443.1 502.2,439.8 497,436.5 492,433.2 487.1,429.9 482.3,426.5 477.6,423.2 473,419.9 468.6,416.6 464.3,413.3 460.2,409.9 456.2,406.6 452.3,403.3 448.6,400 445,396.6 441.5,393.3 438.2,390 435,386.7 431.9,383.4 429,380 426.3,376.7 423.7,373.4 421.2,370.1 418.9,366.8 416.7,363.4 414.7,360.1 412.8,356.8 411,353.5 409.5,350.2 408,346.8 406.7,343.5 405.6,340.2 404.6,336.9 403.8,333.6 403.1,330.2 402.6,326.9 402.2,323.6 402,320.3 401.9,316.9 402,313.6 402.2,310.3 402.6,307 403.1,303.7 403.8,300.3 404.6,297 405.6,293.7 406.7,290.4 408,287.1 409.5,283.7 411,280.4 412.8,277.1 414.7,273.8 416.7,270.5 418.9,267.1 421.2,263.8 423.7,260.5 426.3,257.2 429,253.9 431.9,250.5 435,247.2 438.2,243.9 441.5,240.6 445,237.3 448.6,233.9 452.3,230.6 456.2,227.3 460.2,224 464.3,220.6 468.6,217.3 473,214 477.6,210.7 482.3,207.4 487.1,204 492,200.7 497,197.4 502.2,194.1 507.5,190.8 512.9,187.4 518.4,184.1 524.1,180.8 529.8,177.5 535.7,174.2 541.7,170.8 547.8,167.5 554,164.2 560.3,160.9 566.7,157.6 573.2,154.2 579.8,150.9 586.5,147.6 593.3,144.3 600.2,141 607.2,137.6 614.3,134.3 621.5,131 628.7,127.7 636,124.3 643.5,121 650.9,117.7 658.5,114.4 666.2,111.1 673.9,107.7 681.6,104.4 689.5,101.1 697.4,97.8 705.4,94.5 713.4,91.1 721.5,87.8 729.6,84.5 737.8,81.2 746.1,77.9 754.4,74.5 762.7,71.2 771.1,67.9 779.5,64.6 788,61.3 796.4,57.9 805,54.6 813.5,51.3 822.1,48 830.7,44.7 839.3,41.3 847.9,38 856.6,34.7 865.3,31.4 873.9,28 882.6,24.7 891.3,21.4"/>
<path d="M897.1,614.8 890.4,612.5 880.9,609.2 871.3,605.9 861.8,602.5 852.2,599.2 842.7,595.9 833.2,592.6 823.7,589.2 814.3,585.9 804.9,582.6 795.5,579.3 786.1,576 776.7,572.6 767.4,569.3 758.2,566 749,562.7 739.8,559.4 730.7,556 721.6,552.7 712.6,549.4 703.6,546.1 694.7,542.8 685.9,539.4 677.1,536.1 668.4,532.8 659.8,529.5 651.3,526.2 642.8,522.8 634.4,519.5 626,516.2 617.8,512.9 609.6,509.6 601.6,506.2 593.6,502.9 585.7,499.6 577.9,496.3 570.3,492.9 562.7,489.6 555.2,486.3 547.8,483 540.5,479.7 533.4,476.3 526.3,473 519.4,469.7 512.6,466.4 505.9,463.1 499.3,459.7 492.8,456.4 486.5,453.1 480.3,449.8 474.2,446.5 468.2,443.1 462.4,439.8 456.7,436.5 451.2,433.2 445.8,429.9 440.5,426.5 435.3,423.2 430.3,419.9 425.5,416.6 420.8,413.3 416.2,409.9 411.8,406.6 407.5,403.3 403.4,400 399.5,396.6 395.6,393.3 392,390 388.5,386.7 385.1,383.4 381.9,380 378.9,376.7 376,373.4 373.3,370.1 370.8,366.8 368.4,363.4 366.1,360.1 364.1,356.8 362.2,353.5 360.4,350.2 358.8,346.8 357.4,343.5 356.2,340.2 355.1,336.9 354.2,333.6 353.4,330.2 352.8,326.9 352.4,323.6 352.2,320.3 352.1,316.9 352.2,313.6 352.4,310.3 352.8,307 353.4,303.7 354.2,300.3 355.1,297 356.2,293.7 357.4,290.4 358.8,287.1 360.4,283.7 362.2,280.4 364.1,277.1 366.1,273.8 368.4,270.5 370.8,267.1 373.3,263.8 376,260.5 378.9,257.2 381.9,253.9 385.1,250.5 388.5,247.2 392,243.9 395.6,240.6 399.5,237.3 403.4,233.9 407.5,230.6 411.8,227.3 416.2,224 420.8,220.6 425.5,217.3 430.3,214 435.3,210.7 440.5,207.4 445.8,204 451.2,200.7 456.7,197.4 462.4,194.1 468.2,190.8 474.2,187.4 480.3,184.1 486.5,180.8 492.8,177.5 499.3,174.2 505.9,170.8 512.6,167.5 519.4,164.2 526.3,160.9 533.4,157.6 540.5,154.2 547.8,150.9 555.2,147.6 562.7,144.3 570.3,141 577.9,137.6 585.7,134.3 593.6,131 601.6,127.7 609.6,124.3 617.8,121 626,117.7 634.4,114.4 642.8,111.1 651.3,107.7 659.8,104.4 668.4,101.1 677.1,97.8 685.9,94.5 694.7,91.1 703.6,87.8 712.6,84.5 721.6,81.2 730.7,77.9 739.8,74.5 749,71.2 758.2,67.9 767.4,64.6 776.7,61.3 786.1,57.9 795.5,54.6 804.9,51.3 814.3,48 823.7,44.7 833.2,41.3 842.7,38 852.2,34.7 861.8,31.4 871.3,28 880.9,24.7 890.4,21.4"/>
<path d="M896.9,614.8 889.6,612.5 879.1,609.2 868.7,605.9 858.3,602.5 847.9,599.2 837.5,595.9 827.2,592.6 816.8,589.2 806.5,585.9 796.2,582.6 785.9,579.3 775.7,576 765.5,572.6 755.4,569.3 745.3,566 735.2,562.7 725.2,559.4 715.3,556 705.4,552.7 695.6,549.4 685.8,546.1 676.1,542.8 666.4,539.4 656.9,536.1 647.4,532.8 638,529.5 628.6,526.2 619.4,522.8 610.2,519.5 601.1,516.2 592.1,512.9 583.3,509.6 574.5,506.2 565.8,502.9 557.2,499.6 548.7,496.3 540.3,492.9 532,489.6 523.8,486.3 515.8,483 507.9,479.7 500,476.3 492.4,473 484.8,469.7 477.3,466.4 470,463.1 462.9,459.7 455.8,456.4 448.9,453.1 442.1,449.8 435.5,446.5 429,443.1 422.6,439.8 416.4,436.5 410.4,433.2 404.5,429.9 398.7,426.5 393.1,423.2 387.6,419.9 382.4,416.6 377.2,413.3 372.2,409.9 367.4,406.6 362.8,403.3 358.3,400 354,396.6 349.8,393.3 345.8,390 342,386.7 338.3,383.4 334.8,380 331.5,376.7 328.4,373.4 325.4,370.1 322.6,366.8 320,363.4 317.6,360.1 315.3,356.8 313.3,353.5 311.4,350.2 309.6,346.8 308.1,343.5 306.7,340.2 305.5,336.9 304.5,333.6 303.7,330.2 303.1,326.9 302.6,323.6 302.4,320.3 302.3,316.9 302.4,313.6 302.6,310.3 303.1,307 303.7,303.7 304.5,300.3 305.5,297 306.7,293.7 308.1,290.4 309.6,287.1 311.4,283.7 313.3,280.4 315.3,277.1 317.6,273.8 320,270.5 322.6,267.1 325.4,263.8 328.4,260.5 331.5,257.2 334.8,253.9 338.3,250.5 342,247.2 345.8,243.9 349.8,240.6 354,237.3 358.3,233.9 362.8,230.6 367.4,227.3 372.2,224 377.2,220.6 382.4,217.3 387.6,214 393.1,210.7 398.7,207.4 404.5,204 410.4,200.7 416.4,197.4 422.6,194.1 429,190.8 435.5,187.4 442.1,184.1 448.9,180.8 455.8,177.5 462.9,174.2 470,170.8 477.3,167.5 484.8,164.2 492.4,160.9 500,157.6 507.9,154.2 515.8,150.9 523.8,147.6 532,144.3 540.3,141 548.7,137.6 557.2,134.3 565.8,131 574.5,127.7 583.3,124.3 592.1,121 601.1,117.7 610.2,114.4 619.4,111.1 628.6,107.7 638,104.4 647.4,101.1 656.9,97.8 666.4,94.5 676.1,91.1 685.8,87.8 695.6,84.5 705.4,81.2 715.3,77.9 725.2,74.5 735.2,71.2 745.3,67.9 755.4,64.6 765.5,61.3 775.7,57.9 785.9,54.6 796.2,51.3 806.5,48 816.8,44.7 827.2,41.3 837.5,38 847.9,34.7 858.3,31.4 868.7,28 879.1,24.7 889.6,21.4"/>
<path d="M1054.7,566 L745.3,566"/>
<path d="M1198.9,516.2 L601.1,516.2"/>
<path d="M1322.7,466.4 L477.3,466.4"/>
<path d="M1417.6,416.6 L382.4,416.6"/>
<path d="M1477.4,366.8 L322.6,366.8"/>
<path d="M1497.7,316.9 L302.3,316.9"/>
<path d="M1477.4,267.1 L322.6,267.1"/>
<path d="M1417.6,217.3 L382.4,217.3"/>
<path d="M1322.7,167.5 L477.3,167.5"/>
<path d="M1198.9,117.7 L601.1,117.7"/>
<path d="M1054.7,67.9 L745.3,67.9"/>
</g>
<path d="M889.8,21.7H910.2" stroke="#d4d4d4" stroke-opacity=".7" stroke-width="2.4" fill="none"/>
<text x="901" y="326.8" text-anchor="middle" font-size="9.72" fill="#808080" font-family='"DejaVu Sans","Liberation Sans",sans-serif'>+0<tspan dx="1.5" dy="-3.5" font-size="6">°</tspan></text>
<text x="801.4" y="326.8" text-anchor="middle" font-size="9.72" fill="#808080" font-family='"DejaVu Sans","Liberation Sans",sans-serif'>+30<tspan dx="1.5" dy="-3.5" font-size="6">°</tspan></text>
<text x="701.8" y="326.8" text-anchor="middle" font-size="9.72" fill="#808080" font-family='"DejaVu Sans","Liberation Sans",sans-serif'>+60<tspan dx="1.5" dy="-3.5" font-size="6">°</tspan></text>
<text x="602.1" y="326.8" text-anchor="middle" font-size="9.72" fill="#808080" font-family='"DejaVu Sans","Liberation Sans",sans-serif'>+90<tspan dx="1.5" dy="-3.5" font-size="6">°</tspan></text>
<text x="502.5" y="326.8" text-anchor="middle" font-size="9.72" fill="#808080" font-family='"DejaVu Sans","Liberation Sans",sans-serif'>+120<tspan dx="1.5" dy="-3.5" font-size="6">°</tspan></text>
<text x="402.9" y="326.8" text-anchor="middle" font-size="9.72" fill="#808080" font-family='"DejaVu Sans","Liberation Sans",sans-serif'>+150<tspan dx="1.5" dy="-3.5" font-size="6">°</tspan></text>
<text x="303.3" y="326.8" text-anchor="middle" font-size="9.72" fill="#808080" font-family='"DejaVu Sans","Liberation Sans",sans-serif'>+180<tspan dx="1.5" dy="-3.5" font-size="6">°</tspan></text>
<text x="1399.1" y="326.8" text-anchor="middle" font-size="9.72" fill="#808080" font-family='"DejaVu Sans","Liberation Sans",sans-serif'>+210<tspan dx="1.5" dy="-3.5" font-size="6">°</tspan></text>
<text x="1299.5" y="326.8" text-anchor="middle" font-size="9.72" fill="#808080" font-family='"DejaVu Sans","Liberation Sans",sans-serif'>+240<tspan dx="1.5" dy="-3.5" font-size="6">°</tspan></text>
<text x="1199.9" y="326.8" text-anchor="middle" font-size="9.72" fill="#808080" font-family='"DejaVu Sans","Liberation Sans",sans-serif'>+270<tspan dx="1.5" dy="-3.5" font-size="6">°</tspan></text>
<text x="1100.2" y="326.8" text-anchor="middle" font-size="9.72" fill="#808080" font-family='"DejaVu Sans","Liberation Sans",sans-serif'>+300<tspan dx="1.5" dy="-3.5" font-size="6">°</tspan></text>
<text x="1000.6" y="326.8" text-anchor="middle" font-size="9.72" fill="#808080" font-family='"DejaVu Sans","Liberation Sans",sans-serif'>+330<tspan dx="1.5" dy="-3.5" font-size="6">°</tspan></text>
<text x="1498.7" y="326.8" text-anchor="middle" font-size="9.72" fill="#808080" font-family='"DejaVu Sans","Liberation Sans",sans-serif'>+180<tspan dx="1.5" dy="-3.5" font-size="6">°</tspan></text>
<text x="901" y="17.2" text-anchor="middle" font-size="9.72" fill="#808080" font-family='"DejaVu Sans","Liberation Sans",sans-serif'>+90<tspan dx="1.5" dy="-3.5" font-size="6">°</tspan></text>
<text x="901" y="115.5" text-anchor="middle" font-size="9.72" fill="#808080" font-family='"DejaVu Sans","Liberation Sans",sans-serif'>+60<tspan dx="1.5" dy="-3.5" font-size="6">°</tspan></text>
<text x="901" y="215.1" text-anchor="middle" font-size="9.72" fill="#808080" font-family='"DejaVu Sans","Liberation Sans",sans-serif'>+30<tspan dx="1.5" dy="-3.5" font-size="6">°</tspan></text>
<text x="901" y="426.4" text-anchor="middle" font-size="9.72" fill="#808080" font-family='"DejaVu Sans","Liberation Sans",sans-serif'>−30<tspan dx="1.5" dy="-3.5" font-size="6">°</tspan></text>
<text x="901" y="526" text-anchor="middle" font-size="9.72" fill="#808080" font-family='"DejaVu Sans","Liberation Sans",sans-serif'>−60<tspan dx="1.5" dy="-3.5" font-size="6">°</tspan></text>
<text x="901" y="625" text-anchor="middle" font-size="9.72" fill="#808080" font-family='"DejaVu Sans","Liberation Sans",sans-serif'>−90<tspan dx="1.5" dy="-3.5" font-size="6">°</tspan></text>
<text x="901" y="326.8" text-anchor="middle" font-size="9.72" fill="#808080" font-family='"DejaVu Sans","Liberation Sans",sans-serif'>+0<tspan dx="1.5" dy="-3.5" font-size="6">°</tspan></text>
<path d="M996.7,294.1 996.9,290.8 997.1,287.5 997.3,284.2 997.5,280.9 997.6,277.6 997.7,274.4 997.8,271.1 997.8,267.8 997.8,264.5 997.8,261.2 997.7,257.9 997.7,254.6 997.6,251.4 997.4,248.1 997.3,244.8 997.1,241.5 996.8,238.2 996.6,234.9 996.3,231.7 996,228.4 995.7,225.1 995.3,221.8 994.9,218.5 994.5,215.3 994,212 993.6,208.7 993.1,205.4 992.5,202.1 992,198.9 991.4,195.6 990.8,192.3 990.1,189.1 989.5,185.8 988.8,182.5 988.1,179.3 987.3,176 986.6,172.7 985.8,169.5 985,166.2 984.1,163 983.3,159.7 982.4,156.5 981.5,153.2 980.5,150 979.6,146.7 978.6,143.5 977.6,140.2 976.6,137 975.6,133.8 974.5,130.6 973.5,127.4 972.4,124.1 971.3,120.9 970.1,117.7 969,114.6 967.9,111.4 966.7,108.2 965.5,105 964.3,101.9 963.2,98.7 962,95.6 960.7,92.5 959.5,89.4 958.3,86.4 957.1,83.3 956,80.3 954.8,77.3 953.6,74.4 952.5,71.5 951.4,68.6 950.3,65.8 949.3,63.1 948.4,60.4 947.6,57.9 947,55.4 946.5,53.2 946.2,51 946.2,49.1 946.6,47.5 947.4,46.1 948.8,45.1 950.9,44.5 953.7,44.3 957.5,44.5 962,45 967.5,46 973.8,47.3 980.8,49 988.5,50.8 996.8,52.9 1005.5,55.2 1014.6,57.6 1024.1,60.2 1033.8,62.8 1043.7,65.5 1053.8,68.3 1064.1,71.2M727.8,74.1 720.6,77 713.3,80M959.3,284.1 959.2,280.8 959,277.4 958.8,274.1 958.6,270.8 958.4,267.5 958.1,264.2 957.9,260.8 957.6,257.5 957.3,254.2 957,250.9 956.6,247.5 956.3,244.2 955.9,240.9 955.5,237.6 955.1,234.3 954.7,230.9 954.3,227.6 953.8,224.3 953.4,221 952.9,217.7 952.4,214.3 951.9,211 951.3,207.7 950.8,204.4 950.2,201.1 949.7,197.7 949.1,194.4 948.5,191.1 947.8,187.8 947.2,184.5 946.5,181.1 945.9,177.8 945.2,174.5 944.5,171.2 943.8,167.9 943.1,164.5 942.3,161.2 941.6,157.9 940.8,154.6 940.1,151.3 939.3,147.9 938.5,144.6 937.7,141.3 936.9,138 936,134.7 935.2,131.3 934.3,128 933.5,124.7 932.6,121.4 931.7,118.1 930.8,114.7 929.9,111.4 929,108.1 928.1,104.8 927.2,101.5 926.2,98.1 925.3,94.8 924.4,91.5 923.4,88.2 922.4,84.9 921.5,81.5 920.5,78.2 919.5,74.9 918.5,71.6 917.5,68.3 916.5,64.9 915.5,61.6 914.5,58.3 913.5,55 912.5,51.7 911.4,48.4 910.4,45.1 909.4,41.7 908.3,38.4 907.3,35.1 906.3,31.8 905.3,28.6 904.3,25.3 903.3,22.2 903.4,20.1 910.3,21.7M879.3,24.7 870.2,27.9 861,31.2 851.8,34.5 842.5,37.8 833.2,41.1 823.9,44.4 814.7,47.7 805.4,51 796.2,54.3 787,57.7 777.9,61 768.8,64.3 759.7,67.6 750.7,70.9 741.7,74.2 732.7,77.6 723.8,80.9 715,84.2M988.7,288.1 988.8,284.8 988.9,281.5 988.9,278.2 988.9,274.9 988.9,271.6 988.9,268.3 988.9,265 988.8,261.7 988.7,258.4 988.6,255.1 988.4,251.8 988.2,248.5 988,245.2 987.8,241.9 987.5,238.6 987.2,235.3 986.9,232 986.6,228.7 986.2,225.4 985.8,222.1 985.4,218.8 984.9,215.5 984.5,212.2 984,208.9 983.4,205.6 982.9,202.3 982.3,199 981.7,195.7 981.1,192.4 980.5,189.2 979.8,185.9 979.1,182.6 978.4,179.3 977.7,176 976.9,172.7 976.1,169.4 975.3,166.1 974.5,162.9 973.7,159.6 972.8,156.3 971.9,153 971,149.8 970.1,146.5 969.1,143.2 968.1,139.9 967.1,136.7 966.1,133.4 965.1,130.2 964.1,126.9 963,123.6 961.9,120.4 960.9,117.1 959.7,113.9 958.6,110.7 957.5,107.4 956.3,104.2 955.2,101 954,97.8 952.8,94.6 951.7,91.4 950.5,88.2 949.3,85.1 948.1,81.9 946.9,78.8 945.7,75.7 944.5,72.6 943.3,69.5 942.1,66.5 941,63.5 939.9,60.6 938.8,57.7 937.8,54.9 936.9,52.2 936.1,49.6 935.4,47.1 935,44.8 934.9,42.8 935.2,41.1 936.1,39.7 937.7,38.8 940.3,38.4 943.8,38.5 948.6,39.2 954.4,40.3 961.2,41.9 968.8,43.8 977.2,45.9 986.1,48.3 995.5,50.8 1005.3,53.5 1015.3,56.2 1025.5,59.1 1035.9,62M754.9,65 747.3,68 739.5,71 731.8,74.1 724,77.2 716.2,80.3 708.3,83.5 700.5,86.6 692.7,89.8 684.9,93 677.2,96.2 669.5,99.4 661.8,102.6 654.2,105.8 646.6,109 639.1,112.3 631.7,115.5M582.9,456.5 578.1,453.2 573.4,449.8 568.7,446.5 564.2,443.2 559.8,439.9 555.5,436.6 551.2,433.3 547.1,429.9 543.1,426.6 539.2,423.3 535.4,420 531.7,416.7 528.2,413.3 524.7,410 521.4,406.7 518.2,403.4 515,400.1 512.1,396.7 509.2,393.4 506.4,390.1 503.8,386.8 501.3,383.5 498.9,380.1 496.6,376.8 494.5,373.5 492.4,370.2 490.5,366.9 488.8,363.5 487.1,360.2 485.6,356.9 484.2,353.6 482.9,350.3 481.8,346.9 480.8,343.6 479.9,340.3 479.1,337 478.5,333.7 478,330.3 477.6,327 477.3,323.7 477.2,320.4 477.2,317.1 477.4,313.7 477.6,310.4 478,307.1 478.5,303.8 479.2,300.5 480,297.1 480.9,293.8 481.9,290.5 483.1,287.2 484.4,283.9 485.8,280.5 487.3,277.2 489,273.9 490.8,270.6 492.7,267.3 494.7,263.9 496.9,260.6 499.2,257.3 501.6,254 504.1,250.7 506.8,247.3 509.6,244 512.4,240.7 515.5,237.4 518.6,234.1 521.8,230.8 525.2,227.4 528.6,224.1 532.2,220.8 535.9,217.5 539.7,214.2 543.6,210.8 547.7,207.5 551.8,204.2 556,200.9 560.4,197.6 564.8,194.2 569.4,190.9 574,187.6 578.8,184.3 583.6,181 588.5,177.6 593.6,174.3 598.7,171 603.9,167.7 609.2,164.4 614.6,161 620.1,157.7 625.7,154.4 631.3,151.1 637.1,147.8 642.9,144.5 648.8,141.1 654.8,137.8 660.8,134.5M509.1,457.2 503,453.9 497,450.6 491.1,447.3 485.3,444 479.7,440.6 474.1,437.3 468.8,434 463.5,430.7 458.4,427.4 453.4,424 448.5,420.7 443.8,417.4 439.3,414.1 434.8,410.8 430.5,407.4 426.4,404.1 422.4,400.8 418.5,397.5 414.8,394.1 411.3,390.8 407.8,387.5 404.6,384.2 401.5,380.9 398.5,377.5 395.7,374.2 393,370.9 390.5,367.6 388.2,364.3 386,360.9 384,357.6 382.1,354.3 380.4,351 378.8,347.7 377.4,344.3 376.1,341 375.1,337.7 374.1,334.4 373.4,331.1 372.8,327.7 372.3,324.4 372.1,321.1 371.9,317.8 372,314.5 372.2,311.1 372.5,307.8 373.1,304.5 373.7,301.2 374.6,297.8 375.6,294.5 376.7,291.2 378.1,287.9 379.6,284.6 381.2,281.2 383,277.9 384.9,274.6 387.1,271.3 389.3,268 391.7,264.6 394.3,261.3 397.1,258 399.9,254.7 403,251.4 406.2,248 409.5,244.7 413,241.4 416.6,238.1 420.4,234.8 424.4,231.4 428.4,228.1 432.7,224.8 437,221.5 441.5,218.2 446.2,214.8 450.9,211.5 455.9,208.2 460.9,204.9 466.1,201.5 471.4,198.2 476.9,194.9 482.4,191.6 488.2,188.3 494,184.9 499.9,181.6 506,178.3 512.2,175 518.5,171.7 525,168.3 531.5,165 538.2,161.7 544.9,158.4 551.8,155.1 558.8,151.7 565.9,148.4 573.1,145.1 580.3,141.8 587.7,138.5 595.2,135.1 602.8,131.8 610.4,128.5 618.2,125.2 626,121.9 634,118.5 642,115.2 650,111.9 658.2,108.6 666.4,105.2 674.7,101.9 683.1,98.6 691.5,95.3 700,92 708.6,88.6 717.2,85.3 725.9,82 734.6,78.7 743.4,75.4 752.2,72 761.1,68.7 770,65.4M1322.9,182.4 1317.8,179.3 1312.6,176.1 1307.3,172.9 1301.9,169.8 1296.4,166.6 1290.8,163.5 1285.1,160.3 1279.3,157.2 1273.4,154.1 1267.4,151 1261.4,147.9 1255.3,144.8 1249.1,141.7 1242.8,138.6 1236.5,135.5 1230.1,132.5 1223.7,129.4 1217.2,126.4 1210.7,123.4 1204.2,120.4 1197.6,117.4M611.1,114.5 620.7,111.5 630.3,108.6 639.9,105.7 649.4,102.9 658.9,100.1 668.4,97.3 677.8,94.5 687.2,91.8 696.4,89.2 705.6,86.6 714.6,84.1 723.4,81.6 732.1,79.2 740.5,76.9 748.8,74.7 756.7,72.6 764.4,70.7 771.7,68.8 778.6,67.2 785.2,65.7 791.3,64.3 797,63.2 802.2,62.3 806.9,61.7 811,61.2 814.7,61.1 817.9,61.1 820.6,61.5 822.9,62 824.7,62.8 826.2,63.9 827.4,65.1 828.3,66.5 828.9,68.1 829.3,69.9 829.5,71.8 829.6,73.8 829.5,76 829.4,78.3 829.1,80.6M1240.5,135.8 1234.1,132.8 1227.7,129.8 1221.3,126.8 1214.8,123.8M593.9,120.8 603.3,117.8 612.8,114.9 622.3,112 631.8,109.1 641.3,106.2 650.7,103.4 660.1,100.6 669.5,97.9 678.7,95.1 687.9,92.5 697.1,89.9 706,87.3 714.9,84.8 723.6,82.4 732.1,80 740.4,77.8 748.4,75.6 756.2,73.6 763.7,71.7 770.9,69.9 777.7,68.3 784.1,66.8 790.1,65.5 795.7,64.5 800.8,63.6 805.4,63 809.5,62.6 813.1,62.4 816.3,62.5 819,62.8 821.3,63.4 823.2,64.2 824.7,65.2 826,66.4 826.9,67.8 827.6,69.4 828.1,71.1 828.4,73 828.6,75 828.6,77.1 828.5,79.3 828.4,81.6 828.1,84 827.8,86.5 827.4,89 827,91.6 826.5,94.3 826,97 825.5,99.7 825,102.5 824.4,105.3 823.9,108.2 823.3,111 822.8,114 822.2,116.9 821.7,119.8 821.1,122.8M1197.2,454.7 1198,452.4 1198.9,450 1199.7,447.6 1200.6,445.2 1201.4,442.7 1202.1,440.2 1202.9,437.8 1203.6,435.3 1204.3,432.7 1204.9,430.2 1205.6,427.6 1206.1,425.1 1206.7,422.5 1207.2,419.9 1207.6,417.3 1208,414.7 1208.4,412 1208.7,409.4 1208.9,406.7 1209.1,404 1209.3,401.4 1209.4,398.7 1209.4,396 1209.4,393.3 1209.3,390.5 1209.2,387.8 1209,385.1 1208.7,382.4 1208.4,379.6 1208,376.9 1207.6,374.1 1207.1,371.3 1206.6,368.6 1205.9,365.8 1205.2,363 1204.5,360.2 1203.7,357.5 1202.8,354.7 1201.9,351.9 1200.9,349.1 1199.8,346.3 1198.7,343.5 1197.5,340.7 1196.2,337.9 1194.9,335.1 1193.5,332.3 1192,329.4 1190.5,326.6 1189,323.8 1187.3,321 1185.6,318.2 1183.8,315.4 1182,312.6 1180.1,309.8 1178.2,306.9 1176.1,304.1 1174.1,301.3 1171.9,298.5 1169.7,295.7 1167.5,292.9 1165.2,290.1 1162.8,287.3 1160.4,284.5 1157.9,281.7 1155.4,278.9 1152.8,276.1 1150.2,273.3 1147.5,270.6 1144.7,267.8 1141.9,265 1139.1,262.2 1136.2,259.5 1133.3,256.7 1130.3,254 1127.2,251.2 1124.2,248.5 1121.1,245.8 1117.9,243 1114.7,240.3 1111.5,237.6 1108.2,234.9 1104.9,232.2 1101.5,229.6 1098.1,226.9 1094.7,224.2 1091.2,221.6 1087.8,218.9 1084.3,216.3 1080.7,213.7 1077.2,211.1 1073.6,208.5 1070,206 1066.3,203.4 1062.7,200.9 1059,198.3 1055.3,195.8 1051.6,193.4 1047.9,190.9 1044.1,188.5 1040.4,186 1036.7,183.6 1032.9,181.3 1029.1,178.9 1025.4,176.6 1021.6,174.3 1017.8,172 1014.1,169.8 1010.3,167.6 1006.5,165.4 1002.8,163.3 999,161.2 995.3,159.1 991.6,157.1 987.8,155.1 984.1,153.1 980.4,151.2 976.8,149.4 973.1,147.6 969.5,145.8 965.9,144.1 962.2,142.5 958.7,140.9 955.1,139.4 951.6,137.9 948.1,136.5 944.6,135.2 941.1,133.9 937.6,132.7 934.2,131.6 930.8,130.6 927.4,129.6 924,128.7 920.6,127.9 917.3,127.2 913.9,126.6 910.6,126 907.3,125.6 904,125.2 900.6,124.9 897.3,124.8 894,124.7 890.7,124.7 887.4,124.8 884,125 880.7,125.3 877.3,125.6 873.9,126.1 870.5,126.6 867.1,127.3 863.7,128 860.2,128.8 856.7,129.7M1339.7,203.2 1335.3,200 1330.7,196.7 1326,193.5 1321.2,190.3 1316.3,187 1311.2,183.8 1306.1,180.6 1300.8,177.4 1295.4,174.1 1290,170.9 1284.4,167.7 1278.7,164.5 1272.9,161.3 1267,158.1 1261.1,154.9 1255,151.7 1248.8,148.5 1242.6,145.3 1236.3,142.1 1229.9,139 1223.4,135.8 1216.8,132.7 1210.2,129.5 1203.6,126.4 1196.8,123.3 1190,120.1 1183.2,117 1176.3,113.9 1169.4,110.9 1162.5,107.8 1155.6,104.8 1148.6,101.7 1141.6,98.7 1134.7,95.8 1127.7,92.8M680.2,89.9 690.3,87 700.2,84.2 710.1,81.4 719.9,78.6 729.6,75.9 739.1,73.3 748.4,70.8 757.5,68.3 766.3,65.9 774.8,63.7 783,61.6 790.8,59.7 798.1,57.9 805,56.3 811.2,55 816.9,53.9 821.9,53.1 826.3,52.6 830,52.4M1195.1,405.1 1197.3,401.8 1199.4,398.4 1201.4,395.1 1203.4,391.8 1205.2,388.5 1207,385.2 1208.7,381.9 1210.2,378.6 1211.7,375.3 1213.1,372 1214.4,368.7 1215.6,365.4 1216.7,362.1 1217.7,358.7 1218.6,355.4 1219.4,352.1 1220.1,348.8 1220.7,345.5 1221.3,342.2 1221.7,338.9 1222,335.6 1222.2,332.3 1222.4,329 1222.4,325.7 1222.3,322.3 1222.2,319 1221.9,315.7 1221.6,312.4 1221.1,309.1 1220.6,305.8 1219.9,302.5 1219.2,299.2 1218.3,295.9 1217.4,292.6 1216.4,289.2 1215.2,285.9 1214,282.6 1212.7,279.3 1211.3,276 1209.8,272.7 1208.2,269.4 1206.5,266.1 1204.7,262.8 1202.8,259.5 1200.8,256.2 1198.8,252.8 1196.6,249.5 1194.4,246.2 1192.1,242.9 1189.6,239.6 1187.1,236.3 1184.5,233 1181.9,229.7 1179.1,226.4 1176.3,223.1 1173.3,219.8 1170.3,216.5 1167.2,213.2 1164,209.9 1160.8,206.6 1157.5,203.2 1154.1,199.9 1150.6,196.6 1147,193.3 1143.4,190 1139.7,186.7 1135.9,183.4 1132,180.1 1128.1,176.8 1124.1,173.5 1120.1,170.2 1116,166.9 1111.8,163.6 1107.5,160.3 1103.2,157 1098.9,153.7 1094.4,150.4 1089.9,147.2 1085.4,143.9 1080.8,140.6 1076.2,137.3 1071.5,134 1066.7,130.7 1061.9,127.4 1057.1,124.1 1052.2,120.9 1047.3,117.6 1042.4,114.3 1037.4,111 1032.3,107.8 1027.2,104.5 1022.1,101.2 1017,98 1011.9,94.7 1006.7,91.5 1001.5,88.3 996.2,85 991,81.8 985.8,78.6 980.5,75.4 975.2,72.2 970,69 964.7,65.9 959.5,62.8 954.3,59.7 949.1,56.6 943.9,53.6 938.9,50.6 933.9,47.8 929,45M1196.3,409.8 1198.7,406.5 1201,403.2 1203.2,399.9 1205.3,396.6 1207.3,393.3 1209.2,389.9 1211,386.6 1212.8,383.3 1214.4,380 1215.9,376.7 1217.4,373.4 1218.7,370.1 1220,366.8 1221.1,363.5 1222.2,360.2 1223.1,356.9 1224,353.6 1224.8,350.3 1225.4,346.9 1226,343.6 1226.5,340.3 1226.8,337 1227.1,333.7 1227.3,330.4 1227.3,327.1 1227.3,323.8 1227.2,320.5 1227,317.2 1226.6,313.9 1226.2,310.5 1225.7,307.2 1225.1,303.9 1224.4,300.6 1223.5,297.3 1222.6,294 1221.6,290.7 1220.5,287.4 1219.3,284.1 1218,280.8 1216.6,277.5 1215.1,274.2 1213.5,270.8 1211.8,267.5 1210.1,264.2 1208.2,260.9 1206.2,257.6 1204.2,254.3 1202,251 1199.8,247.7 1197.4,244.4 1195,241.1 1192.5,237.8 1189.9,234.5 1187.2,231.2 1184.5,227.9 1181.6,224.5 1178.7,221.2 1175.6,217.9 1172.5,214.6 1169.3,211.3 1166.1,208 1162.7,204.7 1159.3,201.4 1155.8,198.1 1152.2,194.8 1148.5,191.5 1144.8,188.2 1141,184.9 1137.1,181.6 1133.2,178.3 1129.1,175 1125.1,171.7 1120.9,168.4 1116.7,165.1 1112.4,161.8 1108.1,158.5 1103.7,155.2 1099.2,151.9 1094.7,148.6 1090.1,145.4 1085.4,142.1 1080.8,138.8 1076,135.5 1071.2,132.2 1066.4,128.9 1061.5,125.6 1056.6,122.4 1051.6,119.1 1046.6,115.8 1041.5,112.6 1036.4,109.3 1031.3,106 1026.1,102.8 1020.9,99.5 1015.7,96.3 1010.5,93 1005.2,89.8 999.9,86.6 994.6,83.3 989.3,80.1 984,76.9 978.6,73.7 973.3,70.6 968,67.4 962.7,64.3 957.4,61.2 952.1,58.2 946.9,55.1 941.8,52.2 936.7,49.3M567.3,454.2 563.4,451 559.4,447.8 555.6,444.6 551.9,441.4 548.3,438.2 544.8,435 541.3,431.8 538,428.5 534.8,425.3 531.6,422.1 528.6,418.9 525.7,415.6 522.9,412.4 520.2,409.2 517.6,405.9 515.1,402.7 512.7,399.5 510.5,396.2 508.3,393 506.3,389.7 504.3,386.5 502.5,383.2 500.8,380 499.2,376.8 497.8,373.5 496.4,370.3 495.2,367 494.1,363.8 493.1,360.5 492.2,357.3 491.4,354 490.8,350.8 490.3,347.5 489.9,344.3 489.6,341 489.4,337.7 489.4,334.5 489.5,331.2 489.7,328 490,324.7 490.4,321.5 491,318.2 491.6,315 492.4,311.7 493.4,308.5 494.4,305.2 495.5,302 496.8,298.7 498.2,295.5 499.7,292.2 501.3,288.9 503.1,285.7 504.9,282.4 506.9,279.2 509,275.9 511.2,272.7 513.5,269.4 515.9,266.2 518.4,262.9 521.1,259.7 523.9,256.5 526.7,253.2 529.7,250 532.8,246.7 536,243.5 539.2,240.2 542.6,237 546.1,233.7 549.7,230.5 553.4,227.3 557.2,224 561.1,220.8 565.1,217.6 569.2,214.3 573.4,211.1 577.7,207.9 582,204.7 586.5,201.4 591,198.2 595.6,195 600.3,191.8 605.1,188.6 610,185.4 614.9,182.2 620,179 625.1,175.8 630.2,172.6 635.5,169.4 640.8,166.2 646.2,163 651.6,159.8 657.1,156.7 662.7,153.5 668.3,150.3 674,147.2 679.7,144 685.4,140.9 691.3,137.8 697.1,134.7 703,131.6 708.9,128.5 714.9,125.4 720.9,122.3 726.9,119.2 733,116.2 739,113.2 745.1,110.2 751.2,107.2 757.2,104.2 763.3,101.3 769.4,98.4 775.4,95.5 781.4,92.6 787.4,89.8 793.4,87 799.3,84.3 805.1,81.7 810.9,79.1 816.6,76.5 822.2,74.1 827.6,71.7 833,69.5 838.2,67.3 843.3,65.3 848.1,63.5 852.8,61.8 857.3,60.3 861.6,59 865.7,58 869.6,57.2 873.2,56.6 876.7,56.4 880,56.4 883.2,56.7 886.2,57.3 889.2,58.2 892.1,59.3 894.9,60.6 897.7,62.1 900.5,63.9 903.3,65.7 906.1,67.8 909,69.9 911.8,72.2 914.7,74.6M818.4,235.1 819.3,231.8 820.3,228.5 821.3,225.2 822.3,221.9 823.4,218.6 824.5,215.3 825.6,211.9 826.7,208.6 827.8,205.3 829,202 830.2,198.7 831.4,195.4 832.6,192.1 833.8,188.8 835.1,185.5 836.4,182.2 837.7,178.9 839,175.6 840.3,172.3 841.7,169 843.1,165.7 844.5,162.4 845.9,159.1 847.3,155.8 848.7,152.5 850.2,149.2 851.7,145.9 853.1,142.6 854.6,139.3 856.1,136 857.7,132.8 859.2,129.5 860.7,126.2 862.3,122.9 863.9,119.6 865.4,116.3 867,113.1 868.6,109.8 870.2,106.5 871.8,103.3 873.5,100 875.1,96.7 876.7,93.5 878.4,90.2 880,87M886.1,455.7 886.9,452.5 887.6,449.3 888.3,446.1 889,442.9 889.8,439.7 890.5,436.5 891.3,433.3 892,430.1 892.7,426.9 893.5,423.7 894.2,420.4 895,417.2 895.7,414 896.5,410.8 897.3,407.5 898,404.3 898.8,401.1 899.5,397.9 900.3,394.6 901,391.4 901.8,388.1 902.6,384.9 903.3,381.7 904.1,378.4 904.8,375.2 905.6,372 906.3,368.7 907.1,365.5 907.8,362.2 908.6,359 909.3,355.7 910,352.5 910.8,349.2 911.5,346 912.2,342.8 913,339.5 913.7,336.3 914.4,333 915.1,329.8 915.8,326.5 916.5,323.3 917.2,320 917.9,316.8 918.6,313.5 919.3,310.3 920,307 920.6,303.8 921.3,300.5 922,297.3 922.6,294 923.3,290.8 923.9,287.6 924.6,284.3 925.2,281.1 925.8,277.8 926.4,274.6 927,271.3 927.6,268.1 928.2,264.8 928.8,261.6 929.4,258.4 929.9,255.1 930.5,251.9 931,248.6 931.6,245.4 932.1,242.2 932.6,238.9 933.1,235.7 933.6,232.5 934.1,229.2 934.6,226 935.1,222.8 935.5,219.6 936,216.3 936.4,213.1 936.8,209.9 937.3,206.7 937.7,203.5 938.1,200.3 938.5,197.1 938.8,193.8 939.2,190.6 939.6,187.4 939.9,184.2 940.3,181 940.6,177.9 940.9,174.7 941.2,171.5 941.5,168.3 941.8,165.1 942.1,162 942.3,158.8 942.6,155.7 942.8,152.5 943,149.4 943.3,146.2 943.5,143.1 943.7,140 943.9,136.9 944.1,133.8 944.2,130.7 944.4,127.6 944.6,124.6 944.7,121.5 944.9,118.5 945.1,115.5 945.2,112.5 945.3,109.5 945.5,106.6 945.6,103.6 945.8,100.7 945.9,97.9 946.1,95 946.3,92.2 946.5,89.5 946.7,86.8 946.9,84.1 947.2,81.5 947.5,79 947.8,76.6 948.2,74.2 948.7,71.9 949.3,69.8 950,67.8 950.8,65.9 951.8,64.2 953,62.6 954.4,61.3 956.1,60.1 958.1,59.2 960.4,58.6 963.1,58.2 966.3,58.1 969.8,58.2 973.8,58.6 978.3,59.3 983.3,60.2 988.7,61.4M483.4,221.1 486.5,217.9 489.7,214.7 492.9,211.5 496.4,208.3 499.9,205.1 503.5,201.9 507.2,198.7 511.1,195.5 515,192.3 519.1,189.2 523.2,186 527.4,182.8 531.8,179.7 536.2,176.5 540.7,173.3 545.4,170.2 550.1,167 554.8,163.9 559.7,160.8 564.7,157.6 569.7,154.5 574.8,151.4 579.9,148.3 585.2,145.2 590.5,142.1 595.8,139 601.2,136 606.7,132.9 612.2,129.9 617.7,126.9 623.3,123.9 628.9,120.9 634.5,117.9 640.2,115 645.8,112 651.4,109.1 657.1,106.2 662.7,103.4 668.3,100.6 673.8,97.8 679.3,95.1 684.7,92.4 690,89.8 695.1,87.2 700.2,84.6 705.1,82.2 709.7,79.8M1081.6,77.5 1072.7,75.3 1064.1,73.3 1055.8,71.3 1047.9,69.5 1040.3,67.8 1033.3,66.3 1026.7,65M440.1,249.7 442.4,246.5 444.8,243.2 447.3,240 450,236.7 452.8,233.5 455.7,230.2 458.8,227 462,223.7 465.3,220.5 468.7,217.3 472.3,214 475.9,210.8 479.7,207.6 483.6,204.3 487.7,201.1 491.8,197.9 496.1,194.7 500.4,191.5 504.9,188.2 509.5,185 514.2,181.8 519,178.6 523.9,175.4 528.9,172.2 534,169 539.2,165.8 544.5,162.6 549.8,159.4 555.3,156.3 560.8,153.1 566.5,149.9 572.2,146.8 578,143.6 583.8,140.5 589.7,137.3 595.7,134.2 601.8,131.1 607.9,128 614,124.9 620.2,121.8 626.4,118.7 632.7,115.7 639,112.6 645.3,109.6 651.7,106.6 658,103.6 664.3,100.7 670.7,97.7 677,94.8 683.2,92 689.4,89.1 695.5,86.3 701.6,83.6 707.5,80.9M670.7,457.2 666.6,453.9 662.5,450.7 658.5,447.4 654.5,444.1 650.6,440.9 646.8,437.6 643.1,434.3 639.4,431 635.8,427.8 632.3,424.5 628.9,421.2 625.6,417.9 622.3,414.7 619.1,411.4 616,408.1 613,404.8 610.1,401.5 607.2,398.3 604.5,395 601.8,391.7 599.2,388.4 596.7,385.1 594.3,381.8 592,378.5 589.8,375.3 587.7,372 585.6,368.7 583.7,365.4 581.8,362.1 580.1,358.8 578.4,355.5 576.9,352.3 575.4,349 574,345.7 572.8,342.4 571.6,339.1 570.5,335.8 569.5,332.5 568.7,329.2 567.9,325.9 567.2,322.7 566.6,319.4 566.1,316.1 565.8,312.8 565.5,309.5 565.3,306.2 565.2,302.9 565.2,299.6 565.4,296.3 565.6,293.1 565.9,289.8 566.3,286.5 566.8,283.2 567.4,279.9 568.2,276.6 569,273.3 569.9,270 570.9,266.8 572,263.5 573.2,260.2 574.5,256.9 575.9,253.6 577.4,250.3 579,247 580.7,243.8 582.5,240.5 584.4,237.2 586.4,233.9 588.4,230.6 590.6,227.3 592.8,224.1 595.2,220.8 597.6,217.5 600.1,214.2 602.7,210.9 605.4,207.7 608.2,204.4 611.1,201.1 614,197.9 617.1,194.6 620.2,191.3 623.4,188 626.6,184.8 630,181.5 633.4,178.2 636.9,175 640.5,171.7 644.2,168.5 647.9,165.2 651.7,161.9 655.6,158.7 659.5,155.4 663.5,152.2 667.6,149 671.7,145.7 675.9,142.5 680.2,139.2 684.5,136 688.8,132.8 693.2,129.6 697.7,126.4 702.2,123.2 706.8,120 711.4,116.8 716,113.6 720.7,110.4 725.4,107.2 730.1,104.1 734.9,100.9 739.7,97.8 744.5,94.7 749.3,91.6 754.1,88.5 758.9,85.4 763.7,82.4 768.4,79.4 773.2,76.4 777.9,73.5 782.5,70.6 787,67.8 791.4,65 795.7,62.3 799.8,59.7 803.6,57.2 807.2,54.8 810.4,52.5 813.1,50.5 815.2,48.7 816.6,47.1 817.2,45.9 816.7,45M980.2,44.5 976.6,44.4 974.2,44.7 972.9,45.4 972.6,46.5 973.1,47.9 974.3,49.6 976.1,51.6 978.3,53.7 980.9,56 983.7,58.5 986.8,61 990,63.7M792.6,228 793.5,224.7 794.4,221.4 795.3,218.1 796.3,214.8 797.3,211.4 798.3,208.1 799.4,204.8 800.5,201.5 801.6,198.2 802.8,194.8 804,191.5 805.2,188.2 806.5,184.9 807.7,181.6 809,178.2 810.4,174.9 811.7,171.6 813.1,168.3 814.5,165 816,161.6 817.4,158.3 818.9,155 820.4,151.7 822,148.4 823.5,145.1 825.1,141.7 826.7,138.4 828.4,135.1 830,131.8 831.7,128.5 833.4,125.1 835.1,121.8 836.8,118.5 838.6,115.2 840.3,111.9 842.1,108.6 843.9,105.2 845.8,101.9 847.6,98.6 849.5,95.3 851.3,92 853.2,88.7 855.1,85.4 857,82 858.9,78.7 860.9,75.4 862.8,72.1 864.8,68.8 866.8,65.5 868.7,62.2 870.7,58.9 872.7,55.6 874.7,52.3 876.7,49 878.7,45.7M830.9,455.8 830.1,452.5 829.2,449.2 828.4,445.9 827.7,442.6 826.9,439.2 826.2,435.9 825.4,432.6 824.7,429.3 824.1,426 823.4,422.7 822.8,419.3 822.2,416 821.6,412.7 821.1,409.4 820.5,406.1 820,402.8 819.5,399.5 819.1,396.1 818.6,392.8 818.2,389.5 817.9,386.2 817.5,382.9 817.2,379.6 816.8,376.2 816.6,372.9 816.3,369.6 816.1,366.3 815.9,363 815.7,359.7 815.5,356.3 815.4,353 815.3,349.7 815.2,346.4 815.2,343.1 815.1,339.8 815.1,336.4 815.2,333.1 815.2,329.8 815.3,326.5 815.4,323.2 815.5,319.9 815.7,316.5 815.8,313.2 816,309.9 816.3,306.6 816.5,303.3 816.8,300 817.1,296.6 817.4,293.3 817.8,290 818.2,286.7 818.6,283.4 819,280.1 819.5,276.7 820,273.4 820.5,270.1 821,266.8 821.5,263.5 822.1,260.2 822.7,256.8 823.3,253.5 824,250.2 824.6,246.9 825.3,243.6 826.1,240.3 826.8,236.9 827.6,233.6 828.3,230.3 829.1,227 830,223.7 830.8,220.4 831.7,217.1 832.6,213.7 833.5,210.4 834.4,207.1 835.3,203.8 836.3,200.5 837.3,197.2 838.3,193.8 839.3,190.5 840.4,187.2 841.4,183.9 842.5,180.6 843.6,177.3 844.7,174 845.9,170.7 847,167.3 848.2,164 849.3,160.7 850.5,157.4 851.7,154.1 853,150.8 854.2,147.5 855.5,144.2 856.7,140.8 858,137.5 859.3,134.2 860.6,130.9 861.9,127.6 863.2,124.3 864.6,121 865.9,117.7 867.3,114.4 868.6,111.1 870,107.8 871.4,104.5 872.8,101.2 874.2,97.9 875.6,94.6 877,91.3 878.4,88 879.8,84.7 881.3,81.4 882.7,78.2 884.1,74.9 885.6,71.6 887,68.3 888.5,65.1 889.9,61.8 891.4,58.6 892.8,55.4 894.2,52.2 895.7,49 897.1,45.8 898.6,42.7 900,39.7M674.5,456.8 669.6,454.5 664.8,452.1 660,449.7 655.1,447.3 650.3,444.9 645.5,442.5 640.7,440 636,437.5 631.3,435 626.6,432.5 621.9,429.9 617.3,427.4 612.7,424.8 608.2,422.2 603.6,419.6 599.2,417 594.8,414.4 590.4,411.8 586.1,409.1 581.8,406.5 577.6,403.8 573.4,401.1 569.3,398.4 565.2,395.7 561.2,393 557.3,390.3 553.5,387.6 549.7,384.8 545.9,382.1 542.3,379.4 538.7,376.6 535.2,373.9 531.7,371.1 528.4,368.3 525.1,365.6 521.9,362.8 518.7,360 515.7,357.2 512.7,354.4 509.8,351.6 507,348.8 504.3,346 501.6,343.2 499.1,340.4 496.6,337.6 494.2,334.8 491.9,332 489.7,329.2 487.6,326.4 485.6,323.6 483.6,320.8 481.8,318 480,315.2 478.4,312.4 476.8,309.5 475.3,306.7 473.9,303.9 472.6,301.1 471.4,298.3 470.3,295.5 469.3,292.7 468.4,289.9 467.6,287.1 466.8,284.3 466.2,281.5 465.6,278.7 465.2,275.9 464.8,273.1 464.5,270.4 464.3,267.6 464.2,264.8 464.2,262.1 464.3,259.3 464.5,256.5 464.7,253.8 465.1,251.1 465.5,248.3 466,245.6 466.6,242.9 467.3,240.2 468,237.5 468.8,234.8 469.7,232.1 470.7,229.4 471.8,226.7 472.9,224.1 474.1,221.4 475.4,218.8 476.7,216.2 478.1,213.6 479.5,211 481,208.4 482.6,205.8 484.2,203.3 485.9,200.7 487.6,198.2 489.4,195.7 491.2,193.2 493,190.8 494.9,188.3 496.8,185.9 498.7,183.5 500.6,181.2 502.6,178.8 504.5,176.5 506.5,174.2 508.5,171.9 510.5,169.7 512.4,167.5 514.4,165.3 516.3,163.2 518.2,161.1 520.1,159 521.9,157 523.7,155 525.4,153.1 527,151.2 528.6,149.3 530.1,147.5 531.5,145.8 532.8,144.1M1261,142.5 1254.2,140.9 1247.5,139.4 1240.9,137.9 1234.5,136.5 1228.2,135.2 1222.1,133.9 1216.1,132.8 1210.3,131.6 1204.7,130.6 1199.2,129.7 1194,128.8 1188.9,128 1184,127.3 1179.3,126.7 1174.8,126.1 1170.5,125.7 1166.4,125.3 1162.5,125.1 1158.9,124.9 1155.4,124.8 1152.1,124.8 1149,124.9 1146.1,125.1 1143.3,125.4 1140.8,125.8M745.4,456.8 741.4,455.6 737.4,454.4 733.4,453.2 729.4,451.9 725.3,450.5 721.2,449.2 717.1,447.8 713,446.3 708.8,444.8 704.6,443.3 700.4,441.7 696.2,440.1 692,438.5 687.8,436.8 683.6,435.1 679.3,433.4 675.1,431.6 670.8,429.9 666.6,428.1 662.3,426.2 658.1,424.4 653.8,422.5 649.6,420.6 645.3,418.6 641.1,416.7 636.9,414.7 632.7,412.7 628.5,410.7 624.3,408.6 620.2,406.6 616,404.5 611.9,402.4 607.8,400.3 603.8,398.1 599.7,396 595.7,393.8 591.7,391.7 587.8,389.5 583.8,387.3 580,385.1 576.1,382.8 572.3,380.6 568.5,378.4 564.8,376.1 561.1,373.8 557.5,371.6 553.8,369.3 550.3,367 546.8,364.7 543.3,362.4 539.9,360.1 536.5,357.7 533.2,355.4 530,353.1 526.8,350.7 523.6,348.4 520.5,346 517.5,343.7 514.5,341.3 511.6,338.9 508.7,336.6 505.9,334.2 503.2,331.8 500.5,329.5 497.9,327.1 495.3,324.7 492.8,322.3 490.4,319.9 488.1,317.6 485.8,315.2 483.5,312.8 481.4,310.4 479.3,308 477.2,305.7 475.2,303.3 473.3,300.9 471.5,298.5 469.7,296.2 468,293.8 466.4,291.4 464.8,289.1 463.3,286.7 461.8,284.4 460.5,282 459.1,279.7 457.9,277.4 456.7,275 455.6,272.7 454.5,270.4 453.5,268.1 452.5,265.8 451.7,263.5 450.8,261.2 450.1,259 449.4,256.7 448.7,254.4 448.1,252.2 447.5,250 447,247.8 446.6,245.5 446.2,243.4 445.8,241.2 445.5,239 445.3,236.9 445.1,234.7 444.9,232.6 444.7,230.5 444.6,228.4 444.5,226.3 444.5,224.3 444.5,222.3 444.5,220.2 444.5,218.3 444.6,216.3 444.6,214.3 444.7,212.4 444.8,210.5 444.9,208.6 445,206.8 445.1,205 445.2,203.2 445.3,201.4 445.4,199.7 445.5,197.9 445.6,196.3 445.6,194.6 445.6,193 445.6,191.4 445.6,189.9 445.5,188.4 445.3,186.9 445.2,185.5 444.9,184.1M1354.7,182.7 1348.9,181.4 1343.3,180.1 1337.7,178.9 1332.2,177.7 1326.7,176.6 1321.4,175.5 1316.1,174.4 1310.9,173.4 1305.8,172.5M748.4,449.4 744.7,448.7 740.9,447.9 737.1,447.1 733.3,446.2 729.5,445.3 725.6,444.4 721.7,443.4 717.8,442.3 713.8,441.2 709.9,440.1 705.9,439 701.9,437.8 697.8,436.6 693.8,435.3 689.7,434 685.6,432.7 681.5,431.3 677.4,429.9 673.3,428.4 669.1,427 665,425.5 660.8,424 656.7,422.4 652.5,420.8 648.3,419.2 644.1,417.6 640,415.9 635.8,414.2 631.6,412.5 627.4,410.8 623.3,409 619.1,407.3 615,405.5 610.8,403.6 606.7,401.8 602.6,399.9 598.5,398.1 594.4,396.2 590.3,394.3 586.3,392.3 582.3,390.4 578.3,388.4 574.3,386.5 570.4,384.5 566.4,382.5 562.5,380.4 558.7,378.4 554.8,376.4 551.1,374.3 547.3,372.3 543.6,370.2 539.9,368.1 536.2,366 532.6,363.9 529,361.8 525.5,359.7 522,357.6 518.6,355.4 515.2,353.3 511.8,351.1 508.5,349 505.3,346.8 502.1,344.7 498.9,342.5 495.8,340.3 492.8,338.1 489.8,335.9 486.8,333.8 483.9,331.6 481.1,329.4 478.3,327.2 475.6,325 472.9,322.8 470.3,320.6 467.7,318.4 465.2,316.2 462.8,314 460.4,311.8 458.1,309.6 455.8,307.4 453.6,305.2 451.5,303 449.4,300.8 447.4,298.7 445.4,296.5 443.5,294.3 441.6,292.1 439.8,289.9 438.1,287.8 436.4,285.6 434.8,283.5 433.2,281.3 431.7,279.2 430.3,277 428.9,274.9 427.5,272.8 426.3,270.7 425,268.6 423.8,266.5 422.7,264.4 421.6,262.3 420.6,260.2 419.6,258.2 418.7,256.1 417.8,254.1 416.9,252.1 416.1,250.1 415.4,248.1 414.6,246.1 413.9,244.1 413.3,242.2 412.7,240.3 412.1,238.3 411.5,236.4 411,234.6 410.5,232.7 410,230.8 409.6,229 409.1,227.2 408.7,225.4 408.3,223.7 407.9,221.9 407.5,220.2 407.1,218.5 406.7,216.9 406.3,215.2 405.9,213.6 405.5,212 405.1,210.4 404.7,208.9 404.3,207.4 403.8,205.9M1395.9,204.5 1390.4,203.1 1385,201.7 1379.6,200.3 1374.2,199 1368.8,197.7 1363.6,196.5 1358.3,195.3M582.4,454.9 578.1,451.6 573.8,448.3 569.7,445 565.6,441.8 561.7,438.5 557.8,435.2 554.1,431.9 550.5,428.6 546.9,425.3 543.5,422 540.2,418.7 536.9,415.4 533.8,412.1 530.8,408.8 527.9,405.5 525.2,402.2 522.5,398.9 519.9,395.6 517.5,392.3 515.2,389 513,385.7 510.9,382.4 508.9,379.2 507,375.9 505.3,372.6 503.7,369.3 502.1,366 500.8,362.7 499.5,359.4 498.3,356.1 497.3,352.8 496.4,349.5 495.6,346.2 495,342.9 494.4,339.5 494,336.2 493.7,332.9 493.6,329.6 493.5,326.3 493.6,323 493.8,319.7 494.1,316.4 494.5,313.1 495.1,309.8 495.8,306.5 496.6,303.2 497.5,299.9 498.6,296.6 499.7,293.3 501,290 502.4,286.7 504,283.4 505.6,280.1 507.4,276.8 509.3,273.5 511.3,270.2 513.4,266.9 515.6,263.6 518,260.3 520.4,257 523,253.7 525.7,250.4 528.5,247.1 531.4,243.8 534.4,240.5 537.6,237.2 540.8,233.9 544.2,230.7 547.6,227.4 551.2,224.1 554.9,220.8 558.6,217.5 562.5,214.2 566.5,210.9 570.6,207.6 574.7,204.3 579,201 583.4,197.7 587.8,194.4 592.4,191.1 597,187.8 601.7,184.6 606.6,181.3 611.5,178 616.4,174.7 621.5,171.4 626.7,168.1 631.9,164.9 637.2,161.6 642.6,158.3 648.1,155 653.6,151.7 659.2,148.5 664.8,145.2 670.6,141.9 676.4,138.7 682.2,135.4 688.2,132.1 694.1,128.9 700.2,125.6 706.2,122.4 712.4,119.1 718.6,115.9 724.8,112.7 731,109.4 737.4,106.2 743.7,103 750.1,99.8 756.5,96.6 762.9,93.4 769.3,90.2 775.8,87 782.2,83.9 788.7,80.7 795.2,77.6 801.6,74.5 808.1,71.5 814.5,68.4 820.8,65.4 827.2,62.5 833.4,59.5 839.6,56.7 845.6,54 851.5,51.3 857.2,48.8 862.8,46.4 868,44.3 872.9,42.4 877.5,40.8" fill="none" stroke="#383838" stroke-width="1.389" stroke-dasharray="1.389 2.292"/>
<path d="M713.3,80 709.5,81.5 705.8,83.1 702,84.7 698.2,86.2 694.4,87.8 690.7,89.4 686.9,91 683.1,92.6 679.3,94.1 675.5,95.7 671.7,97.3 668,99 664.2,100.6 660.4,102.2 656.7,103.8M715,84.2 710.6,85.9 706.2,87.5 701.8,89.2 697.4,90.9 693.1,92.5 688.7,94.2 684.4,95.9 680.1,97.5 675.8,99.2M631.7,115.5 627.7,117.3 623.6,119 619.6,120.8 615.7,122.6 611.7,124.4 607.8,126.1 603.9,127.9 600,129.7M660.8,134.5 663.9,132.8 666.9,131.2 670,129.5 673.2,127.8 676.3,126.2 679.4,124.5 682.6,122.8 685.8,121.2 689,119.5M770,65.4 774.5,63.7 779,62.1 783.5,60.4 788.1,58.7 792.6,57 797.1,55.4 801.7,53.7M829.1,80.6 828.9,81.8 828.7,83.1 828.5,84.4 828.3,85.7 828.1,87 827.8,88.4 827.6,89.7 827.3,91.1 827,92.5 826.7,93.9 826.4,95.3 826.1,96.7 825.8,98.1 825.5,99.6 825.2,101 824.9,102.5 824.6,103.9 824.2,105.4 823.9,106.9M821.1,122.8 820.8,124.3 820.5,125.8 820.3,127.4 820,128.9M856.7,129.7 854.9,130.2 853,130.7 851.2,131.3 849.3,131.8 847.4,132.4 845.6,133 843.7,133.6 841.8,134.3 839.9,134.9 838,135.6 836.1,136.3 834.2,137 832.2,137.8 830.3,138.5 828.4,139.3 826.4,140.1 824.5,140.9 822.5,141.7M830,52.4 831.7,52.4 833.3,52.5 834.6,52.8 835.8,53.1 836.9,53.4 837.8,53.9M929,45 926.6,43.7 924.2,42.4 921.9,41.1 919.7,39.9 917.4,38.8 915.3,37.7M936.7,49.3 934.1,47.8 931.5,46.4 929,45M914.7,74.6 916.2,75.9 917.8,77.2 919.3,78.6 920.9,80 922.4,81.3 924,82.7M880,87 880.9,85.2 881.8,83.5 882.7,81.7M988.7,59.4 991.2,59.7 994,60.1 996.9,60.5 1000,61.1 1003.3,61.7M1026.7,65 1023.5,64.4 1020.4,63.8 1017.5,63.4 1014.8,62.9 1012.2,62.5 1009.7,62.2 1007.4,62 1005.3,61.8 1003.3,61.7M1085.3,78.3 1080.1,76.9 1075,75.6 1070,74.3 1065,73 1060.1,71.7 1055.2,70.5 1050.4,69.2 1045.8,68.1 1041.2,66.9 1036.7,65.8 1032.3,64.7 1028,63.7M990,63.7 991.7,65.1 993.5,66.5 995.3,68M878.7,45.7 879.8,43.9 880.9,42.1 882,40.3M900,39.7 900.9,37.8 901.8,36 902.7,34.3M1140.8,125.8 1139.6,126 1138.4,126.3 1137.3,126.5 1136.2,126.8 1135.1,127.2 1134.1,127.5 1133.2,127.9 1132.2,128.2 1131.4,128.7 1130.5,129.1 1129.7,129.5 1128.9,130 1128.2,130.5 1127.5,131M1305.8,172.5 1303.3,172 1300.8,171.6 1298.3,171.2 1295.9,170.8 1293.4,170.4 1291,170 1288.7,169.6 1286.3,169.2 1284,168.9 1281.7,168.6M1358.3,195.3 1355.4,194.6 1352.5,194M877.5,40.8 880.1,40 882.5,39.4" fill="none" stroke="#787878" stroke-width="1.2"/>
<circle cx="656.7" cy="103.8" r="1" fill="#6a2a90"/>
<circle cx="675.8" cy="99.2" r="1" fill="#6a2a90"/>
<circle cx="600" cy="129.7" r="1" fill="#6a2a90"/>
<circle cx="689" cy="119.5" r="1" fill="#6a2a90"/>
<circle cx="801.7" cy="53.7" r="1" fill="#6a2a90"/>
<circle cx="823.9" cy="106.9" r="1" fill="#6a2a90"/>
<circle cx="820" cy="128.9" r="1" fill="#6a2a90"/>
<circle cx="822.5" cy="141.7" r="1" fill="#6a2a90"/>
<circle cx="837.8" cy="53.9" r="1" fill="#6a2a90"/>
<circle cx="915.3" cy="37.7" r="1" fill="#6a2a90"/>
<circle cx="929" cy="45" r="1" fill="#6a2a90"/>
<circle cx="924" cy="82.8" r="1" fill="#6a2a90"/>
<circle cx="882.7" cy="81.7" r="1" fill="#6a2a90"/>
<circle cx="1003.3" cy="61.7" r="1" fill="#6a2a90"/>
<circle cx="1003.3" cy="61.7" r="1" fill="#6a2a90"/>
<circle cx="1028" cy="63.7" r="1" fill="#6a2a90"/>
<circle cx="995.3" cy="68" r="1" fill="#6a2a90"/>
<circle cx="882" cy="40.3" r="1" fill="#6a2a90"/>
<circle cx="902.7" cy="34.3" r="1" fill="#6a2a90"/>
<circle cx="1127.5" cy="131" r="1" fill="#6a2a90"/>
<circle cx="1281.7" cy="168.6" r="1" fill="#6a2a90"/>
<circle cx="1352.5" cy="194" r="1" fill="#6a2a90"/>
<circle cx="882.5" cy="39.5" r="1" fill="#6a2a90"/>
<path d="M735.3,265.1 735.3,263.4 735.2,261.8 735.2,260.2 735.2,258.6 735.2,257 735.2,255.4 735.2,253.8 735.2,252.2 735.3,250.6 735.3,249 735.4,247.4 735.5,245.7 735.6,244.1 735.7,242.5 735.8,240.9 735.9,239.3 736,237.7 736.2,236.1 736.3,234.5 736.5,232.9 736.7,231.3 736.9,229.7 737.1,228.1 737.3,226.5 737.5,224.9 737.8,223.3 738,221.7 738.3,220.1 738.5,218.5 738.8,216.9 739.1,215.3 739.4,213.7 739.7,212.1 740,210.5 740.4,209 740.7,207.4 741.1,205.8 741.4,204.2 741.8,202.6 742.2,201 742.6,199.4 743,197.8 743.4,196.3 743.9,194.7 744.3,193.1 744.8,191.5 745.2,189.9 745.7,188.3 746.2,186.8 746.6,185.2 747.1,183.6 747.7,182 748.2,180.5 748.7,178.9 749.2,177.3 749.8,175.8 750.3,174.2 750.9,172.6 751.5,171.1 752,169.5 752.6,168 753.2,166.4 753.8,164.8 754.4,163.3 755.1,161.7 755.7,160.2 756.3,158.7 757,157.1 757.6,155.6 758.3,154 759,152.5 759.6,151 760.3,149.4 761,147.9 761.7,146.4 762.4,144.9 763.1,143.3 763.8,141.8 764.5,140.3 765.2,138.8 765.9,137.3 766.7,135.8 767.4,134.3 768.1,132.8 768.9,131.3 769.6,129.9 770.4,128.4 771.1,126.9 771.9,125.4 772.6,124 773.4,122.5 774.1,121.1 774.9,119.6 775.7,118.2 776.4,116.8 777.2,115.3 777.9,113.9 778.7,112.5 779.4,111.1 780.2,109.7 780.9,108.3 781.6,107 782.4,105.6 783.1,104.2 783.8,102.9 784.5,101.5 785.2,100.2 785.9,98.9 786.6,97.6 787.3,96.3 787.9,95.1 788.5,93.8 789.2,92.6 789.8,91.3 790.3,90.1 790.9,88.9 791.4,87.8 791.9,86.6 792.4,85.5 792.9,84.4 793.3,83.3 793.7,82.2 794,81.2 794.3,80.2 794.6,79.2 794.8,78.3 795,77.4 795.1,76.5 795.2,75.6 795.2,74.8 795.1,74 795,73.3 794.8,72.6 794.5,71.9 794.1,71.3 793.7,70.7 793.1,70.2 792.5,69.7M734.7,270.1 734,268.8 733.2,267.4 732.5,266.1 731.8,264.8 731.1,263.5 730.4,262.2 729.8,260.9 729.1,259.6 728.4,258.3 727.8,256.9 727.1,255.6 726.5,254.3 725.9,253 725.2,251.7 724.6,250.4 724,249.1 723.4,247.8 722.8,246.6 722.2,245.3 721.6,244 721.1,242.7 720.5,241.4 719.9,240.1 719.4,238.9 718.8,237.6 718.3,236.3 717.8,235.1 717.2,233.8 716.7,232.5 716.2,231.3 715.7,230 715.2,228.8 714.7,227.5 714.2,226.3 713.7,225 713.3,223.8 712.8,222.5 712.3,221.3 711.9,220.1 711.4,218.9 711,217.6 710.5,216.4 710.1,215.2 709.7,214 709.3,212.8 708.8,211.6 708.4,210.4 708,209.2 707.6,208 707.2,206.8 706.8,205.6 706.4,204.5 706,203.3 705.7,202.1 705.3,201 704.9,199.8 704.5,198.7 704.2,197.5 703.8,196.4 703.4,195.3 703.1,194.1 702.7,193 702.4,191.9 702,190.8 701.6,189.7 701.3,188.6 700.9,187.5 700.6,186.5 700.2,185.4 699.9,184.3 699.5,183.3 699.2,182.2 698.8,181.2 698.5,180.1 698.1,179.1 697.8,178.1 697.4,177.1 697,176.1 696.7,175.1 696.3,174.1 695.9,173.1 695.6,172.1 695.2,171.2 694.8,170.2 694.4,169.3 694,168.4 693.6,167.5 693.2,166.5 692.8,165.6 692.4,164.8 691.9,163.9 691.5,163 691,162.2 690.6,161.3 690.1,160.5 689.7,159.7 689.2,158.9 688.7,158.1 688.2,157.3 687.6,156.5 687.1,155.8 686.6,155 686,154.3 685.4,153.6 684.8,152.9 684.2,152.2 683.6,151.5 683,150.8 682.3,150.2 681.6,149.6 680.9,149 680.2,148.4 679.5,147.8 678.7,147.2 677.9,146.7 677.2,146.1 676.3,145.6 675.5,145.1 674.6,144.6 673.7,144.2 672.8,143.7 671.9,143.3 670.9,142.9 669.9,142.5 668.9,142.1 667.8,141.7 666.7,141.4 665.6,141.1 664.5,140.7 663.3,140.5 662.1,140.2 660.9,139.9 659.6,139.7 658.3,139.5 657,139.3 655.6,139.1 654.2,139 652.8,138.9 651.3,138.8 649.8,138.7 648.3,138.6 646.7,138.5 645.1,138.5 643.5,138.5 641.8,138.5 640.1,138.5 638.3,138.6 636.5,138.6 634.7,138.7 632.8,138.8 630.9,139 629,139.1 627,139.3 625,139.5 622.9,139.7 620.8,139.9 618.7,140.1 616.5,140.4 614.3,140.7 612.1,141 609.8,141.3 607.5,141.6 605.1,142 602.7,142.4 600.3,142.8 597.8,143.2 595.3,143.6 592.8,144.1 590.2,144.5 587.6,145 585,145.5M735.9,267.5 735.8,266 735.6,264.4 735.5,262.8 735.3,261.2 735.2,259.7 735.1,258.1 735,256.5 734.9,255 734.8,253.4 734.7,251.8 734.7,250.2 734.6,248.7 734.6,247.1 734.5,245.5 734.5,244 734.5,242.4 734.5,240.8 734.5,239.3 734.6,237.7 734.6,236.1 734.6,234.6 734.7,233 734.8,231.4 734.8,229.9 734.9,228.3 735,226.8 735.1,225.2 735.3,223.6 735.4,222.1 735.5,220.5 735.7,219 735.9,217.4 736,215.9 736.2,214.3 736.4,212.8 736.6,211.2 736.8,209.7 737.1,208.1 737.3,206.6 737.6,205 737.8,203.5 738.1,201.9 738.4,200.4 738.6,198.9 738.9,197.3 739.2,195.8 739.6,194.3 739.9,192.7 740.2,191.2 740.5,189.7 740.9,188.1 741.3,186.6 741.6,185.1 742,183.6 742.4,182.1 742.8,180.5 743.2,179 743.6,177.5 744,176 744.4,174.5 744.9,173 745.3,171.5 745.8,170 746.2,168.5 746.7,167M741.1,269.3 741.3,267.6 741.6,266 741.8,264.3 742.1,262.7 742.4,261 742.7,259.4 743,257.7 743.3,256 743.6,254.4 744,252.7 744.3,251.1 744.7,249.4 745.1,247.7 745.5,246.1 745.9,244.4 746.3,242.8 746.7,241.1 747.1,239.5 747.6,237.8 748,236.1 748.5,234.5 749,232.8 749.5,231.2 750,229.5 750.5,227.9 751,226.2 751.6,224.5 752.1,222.9 752.7,221.2 753.3,219.6 753.8,217.9 754.4,216.2 755,214.6 755.7,212.9 756.3,211.3 756.9,209.6 757.6,208 758.2,206.3 758.9,204.7 759.6,203 760.3,201.3 761,199.7 761.7,198 762.4,196.4 763.1,194.7 763.9,193.1 764.6,191.4 765.4,189.7 766.2,188.1 767,186.4 767.8,184.8 768.6,183.1 769.4,181.5 770.2,179.8 771,178.2 771.9,176.5 772.7,174.8 773.6,173.2 774.5,171.5 775.4,169.9 776.2,168.2 777.1,166.6 778.1,164.9 779,163.3 779.9,161.6 780.8,160 781.8,158.3 782.7,156.7 783.7,155M727.4,266.3 727.8,264.7 728.3,263 728.9,261.4 729.4,259.7 729.9,258 730.5,256.4 731,254.7 731.6,253 732.2,251.4 732.8,249.7 733.4,248 734.1,246.4 734.7,244.7 735.3,243.1 736,241.4 736.7,239.7 737.4,238.1 738.1,236.4 738.8,234.7 739.5,233.1 740.3,231.4 741,229.8 741.8,228.1 742.6,226.4 743.4,224.8 744.2,223.1 745,221.4 745.8,219.8 746.6,218.1 747.5,216.5 748.3,214.8 749.2,213.1 750.1,211.5 751,209.8 751.9,208.1 752.8,206.5 753.7,204.8 754.7,203.2 755.6,201.5 756.6,199.8 757.6,198.2 758.6,196.5 759.5,194.8 760.6,193.2 761.6,191.5 762.6,189.9 763.6,188.2 764.7,186.5 765.7,184.9 766.8,183.2 767.9,181.5 769,179.9 770.1,178.2 771.2,176.6 772.3,174.9 773.4,173.2 774.6,171.6 775.7,169.9 776.9,168.2 778,166.6 779.2,164.9 780.4,163.3 781.6,161.6 782.8,159.9 784,158.3 785.2,156.6 786.4,155 787.7,153.3 788.9,151.6 790.2,150 791.4,148.3 792.7,146.7 794,145 795.3,143.3 796.6,141.7 797.9,140 799.2,138.3 800.5,136.7 801.8,135 803.1,133.4 804.5,131.7 805.8,130 807.2,128.4 808.5,126.7 809.9,125.1 811.3,123.4 812.7,121.7 814.1,120.1 815.4,118.4 816.8,116.8 818.3,115.1 819.7,113.5 821.1,111.8 822.5,110.1 823.9,108.5 825.4,106.8 826.8,105.2 828.3,103.5 829.7,101.8 831.2,100.2 832.6,98.5 834.1,96.9 835.6,95.2 837,93.6 838.5,91.9 840,90.3 841.5,88.6 843,86.9 844.5,85.3 846,83.6 847.5,82 849,80.3 850.5,78.7 852,77 853.6,75.4 855.1,73.7 856.6,72.1 858.1,70.4 859.7,68.8 861.2,67.1 862.7,65.5 864.2,63.9 865.8,62.2 867.3,60.6 868.9,58.9 870.4,57.3 871.9,55.7 873.5,54.1 875,52.4 876.5,50.8 878.1,49.2 879.6,47.6 881.1,46 882.7,44.4 884.2,42.8 885.7,41.2 887.2,39.6 888.7,38.1 890.2,36.6 891.7,35.1 893.1,33.6 894.6,32.2 896,30.8 897.4,29.5 898.8,28.3 900.1,27.3 901.5,26.4 902.9,25.9 904.5,25.6 906.2,25.8 908.2,26.3 910.6,27 913.1,28 915.9,29.2 918.9,30.4 922,31.8 925.2,33.2 928.4,34.7 931.8,36.2 935.1,37.7 938.5,39.2 942,40.8 945.4,42.4 948.9,44 952.4,45.5 955.9,47.2 959.4,48.8 962.9,50.4 966.4,52 969.9,53.6 973.4,55.2 976.9,56.9 980.5,58.5 984,60.1 987.5,61.8 991,63.4 994.5,65.1 998,66.7 1001.5,68.4 1005,70M738.9,266.8 739.1,265.1 739.3,263.5 739.6,261.8 739.8,260.2 740,258.5 740.3,256.9 740.6,255.2 740.8,253.6 741.1,251.9 741.4,250.2 741.8,248.6 742.1,246.9 742.4,245.3 742.8,243.6 743.2,242 743.5,240.3 743.9,238.7 744.3,237 744.7,235.3 745.2,233.7 745.6,232 746,230.4 746.5,228.7 747,227.1 747.5,225.4 748,223.8 748.5,222.1 749,220.5 749.5,218.8 750,217.2 750.6,215.5 751.2,213.9 751.7,212.2 752.3,210.5 752.9,208.9 753.5,207.2 754.1,205.6 754.8,203.9 755.4,202.3 756.1,200.6 756.7,199 757.4,197.3 758.1,195.7 758.8,194 759.5,192.4 760.2,190.7 760.9,189.1 761.6,187.4 762.4,185.8 763.1,184.1 763.9,182.5 764.7,180.8 765.5,179.2 766.3,177.5 767.1,175.9 767.9,174.2 768.7,172.6 769.5,170.9 770.4,169.3 771.2,167.6 772.1,166 773,164.4 773.8,162.7 774.7,161.1 775.6,159.4 776.5,157.8 777.5,156.1 778.4,154.5 779.3,152.8 780.3,151.2 781.2,149.6 782.2,147.9 783.2,146.3 784.1,144.6 785.1,143 786.1,141.4 787.1,139.7 788.1,138.1 789.1,136.4 790.2,134.8 791.2,133.2 792.2,131.5 793.3,129.9 794.3,128.3 795.4,126.6 796.5,125 797.5,123.4 798.6,121.7 799.7,120.1 800.8,118.5 801.9,116.9 803,115.2 804.1,113.6 805.2,112 806.4,110.4 807.5,108.7 808.6,107.1 809.8,105.5 810.9,103.9 812.1,102.3 813.2,100.7 814.4,99.1 815.5,97.4 816.7,95.8 817.9,94.2 819,92.6 820.2,91 821.4,89.5 822.6,87.9 823.7,86.3 824.9,84.7 826.1,83.1 827.3,81.5 828.5,80 829.7,78.4 830.8,76.8 832,75.3 833.2,73.7 834.4,72.2 835.5,70.7 836.7,69.1 837.9,67.6 839,66.1 840.1,64.6 841.3,63.1 842.4,61.7 843.5,60.2 844.6,58.8 845.6,57.3 846.7,55.9 847.7,54.6 848.7,53.2 849.6,51.9 850.5,50.6 851.4,49.3 852.1,48.1 852.9,46.9 853.5,45.8 854.1,44.7 854.5,43.7 854.8,42.7 855,41.9 855,41.1 854.9,40.4 854.5,39.8 853.9,39.4 853,39 851.8,38.8 850.3,38.7 848.5,38.8 846.4,39 843.9,39.3 841.1,39.7 838,40.3 834.6,41 831,41.7 827,42.6 822.8,43.5 818.5,44.5M986,45.6 988.3,46.7 990.7,47.9 993.2,49.1 995.8,50.4 998.6,51.7 1001.4,53 1004.3,54.3 1007.2,55.7 1010.3,57.1 1013.3,58.5 1016.4,60 1019.6,61.4 1022.8,62.9 1026,64.4 1029.2,65.9 1032.5,67.4 1035.7,68.9 1039,70.4 1042.3,72 1045.6,73.5 1049,75 1052.3,76.6 1055.6,78.2 1058.9,79.7 1062.3,81.3 1065.6,82.9 1068.9,84.4 1072.3,86 1075.6,87.6 1078.9,89.2 1082.2,90.8 1085.5,92.4 1088.9,94 1092.2,95.6 1095.4,97.2 1098.7,98.8 1102,100.4 1105.3,102 1108.5,103.6 1111.8,105.2 1115,106.9 1118.2,108.5 1121.4,110.1 1124.6,111.7 1127.8,113.3 1131,115 1134.1,116.6 1137.3,118.2 1140.4,119.8 1143.5,121.5 1146.6,123.1 1149.7,124.7 1152.8,126.4 1155.8,128M725.3,266.5 725.3,264.9 725.4,263.3 725.4,261.7 725.4,260.1 725.5,258.5 725.6,256.9 725.7,255.2 725.8,253.6 725.9,252 726,250.4 726.1,248.8 726.3,247.2 726.4,245.6 726.6,244 726.8,242.4 727,240.7 727.2,239.1 727.4,237.5 727.7,235.9 727.9,234.3 728.2,232.7 728.4,231.1 728.7,229.5 729,227.9 729.3,226.3 729.6,224.7 730,223.1 730.3,221.5 730.7,219.8 731,218.2 731.4,216.6 731.8,215 732.2,213.4 732.6,211.8 733,210.2 733.5,208.6 733.9,207 734.4,205.4 734.8,203.8 735.3,202.2 735.8,200.6 736.3,199 736.8,197.5 737.4,195.9 737.9,194.3 738.4,192.7 739,191.1 739.6,189.5 740.1,187.9 740.7,186.3 741.3,184.7 741.9,183.1 742.6,181.6 743.2,180 743.8,178.4 744.5,176.8 745.1,175.2 745.8,173.6 746.5,172.1 747.2,170.5 747.9,168.9 748.6,167.3 749.3,165.8 750,164.2 750.7,162.6 751.5,161.1 752.2,159.5 753,157.9 753.8,156.4 754.5,154.8 755.3,153.3 756.1,151.7 756.9,150.2 757.7,148.6 758.5,147.1 759.3,145.5 760.2,144 761,142.4 761.8,140.9 762.7,139.4 763.5,137.8 764.4,136.3 765.3,134.8 766.1,133.3 767,131.7 767.9,130.2 768.8,128.7 769.7,127.2 770.6,125.7 771.5,124.2 772.4,122.7 773.3,121.2 774.2,119.7 775.1,118.2 776,116.8 776.9,115.3 777.8,113.8 778.7,112.4 779.6,110.9 780.5,109.5 781.4,108 782.3,106.6 783.2,105.2 784.1,103.8 785,102.4 785.9,101 786.8,99.6 787.7,98.2 788.5,96.8 789.4,95.5 790.2,94.1 791.1,92.8 791.9,91.5 792.7,90.2 793.5,88.9 794.3,87.6 795.1,86.3 795.8,85.1 796.5,83.9 797.2,82.7 797.9,81.5 798.5,80.3 799.1,79.1 799.7,78 800.3,76.9 800.8,75.9 801.2,74.8 801.6,73.8 802,72.8 802.3,71.9 802.6,70.9 802.7,70.1 802.9,69.2 802.9,68.4 802.9,67.6 802.8,66.9 802.6,66.3 802.3,65.6 801.9,65 801.4,64.5 800.8,64.1 800.1,63.6 799.2,63.3 798.3,63 797.2,62.7 795.9,62.5 794.6,62.4 793,62.4 791.4,62.4 789.6,62.4 787.6,62.5 785.5,62.7 783.2,63 780.8,63.3 778.3,63.6 775.6,64 772.7,64.5 769.7,65 766.6,65.6 763.3,66.2 759.9,66.9 756.4,67.6 752.8,68.4 749,69.2 745.1,70 741.2,70.9 737.1,71.8 732.9,72.8 728.6,73.8M1075.1,74.8 1077,75.8 1078.8,76.9 1080.8,78 1082.8,79.1 1084.9,80.2 1087.1,81.4 1089.3,82.6 1091.6,83.8 1093.9,85 1096.2,86.3 1098.6,87.5 1101,88.8 1103.4,90.1 1105.9,91.4 1108.4,92.7 1110.9,94.1 1113.4,95.4 1116,96.8 1118.6,98.1 1121.2,99.5 1123.8,100.9 1126.4,102.3 1129,103.7 1131.7,105.1 1134.3,106.6 1137,108 1139.6,109.4 1142.3,110.9 1144.9,112.3 1147.6,113.8 1150.3,115.2 1152.9,116.7 1155.6,118.2 1158.2,119.7 1160.9,121.1 1163.5,122.6 1166.2,124.1 1168.8,125.6 1171.4,127.1 1174,128.6 1176.6,130.2 1179.2,131.7 1181.8,133.2 1184.4,134.7 1187,136.2 1189.5,137.8 1192.1,139.3 1194.6,140.8 1197.1,142.4 1199.6,143.9 1202.1,145.5 1204.6,147 1207,148.5 1209.5,150.1 1211.9,151.7 1214.3,153.2 1216.7,154.8 1219.1,156.3 1221.4,157.9 1223.8,159.4 1226.1,161 1228.4,162.6 1230.7,164.1 1232.9,165.7 1235.2,167.3 1237.4,168.9 1239.6,170.4 1241.8,172 1243.9,173.6 1246.1,175.2 1248.2,176.7 1250.3,178.3 1252.4,179.9 1254.4,181.5 1256.5,183.1 1258.5,184.7 1260.4,186.2 1262.4,187.8 1264.3,189.4 1266.2,191 1268.1,192.6 1270,194.2" fill="none" stroke="#ff2200" stroke-width="1.389" stroke-dasharray="1.389 2.292"/>
<path d="M792.5,69.7 791.6,69.3 790.7,69 789.6,68.7 788.4,68.5 787.1,68.3 785.6,68.2 784.1,68.1 782.4,68.1 780.6,68.2 778.6,68.3 776.6,68.4 774.4,68.7 772,68.9 769.6,69.3 767,69.6 764.2,70.1 761.4,70.6 758.4,71.1 755.3,71.7 752.1,72.3 748.8,72.9 745.3,73.7 741.8,74.4 738.1,75.2 734.3,76 730.5,76.9 726.5,77.8 722.5,78.7M585,145.5 582.2,146 579.3,146.6 576.4,147.2 573.5,147.8 570.5,148.4 567.5,149 564.5,149.7M746.7,167 747.2,165.4 747.7,163.9 748.2,162.3 748.7,160.7 749.2,159.2 749.7,157.6 750.2,156.1 750.8,154.5 751.3,153M783.7,155 784.5,153.3 785.4,151.7 786.3,150 787.1,148.4 788,146.7M1005,70 1008.5,71.7 1012.1,73.4 1015.6,75 1019.1,76.7 1022.6,78.4 1026.1,80.1 1029.6,81.7 1033.1,83.4 1036.6,85.1 1040.1,86.8 1043.5,88.5 1047,90.2 1050.4,91.8 1053.8,93.5 1057.2,95.2 1060.6,96.9 1064,98.6 1067.4,100.3 1070.8,101.9 1074.1,103.6 1077.5,105.3 1080.8,107M1155.8,128 1159,129.8 1162.1,131.6 1165.2,133.4 1168.3,135.2 1171.4,137 1174.5,138.8M1270,194.2 1272,195.9 1274,197.5 1275.9,199.2 1277.9,200.9 1279.8,202.6 1281.6,204.3 1283.5,205.9 1285.3,207.6 1287,209.3 1288.8,211 1290.5,212.7 1292.2,214.3 1293.9,216 1295.5,217.7" fill="none" stroke="#ff2200" stroke-width="1.5"/>
<path d="M818.1,218.5 819.4,217.1 820.6,215.7 821.9,214.3 823.1,212.9 824.3,211.5 825.6,210.2 826.8,208.8 828.1,207.4 829.4,206 830.6,204.6 831.9,203.2 833.2,201.9 834.4,200.5 835.7,199.1 837,197.8 838.3,196.4 839.5,195.1 840.8,193.7 842.1,192.4 843.4,191 844.7,189.7 846,188.3 847.3,187 848.5,185.7 849.8,184.3 851.1,183 852.4,181.7 853.7,180.4 855,179.1 856.3,177.8 857.6,176.5 858.9,175.2 860.2,173.9 861.6,172.6 862.9,171.4 864.2,170.1 865.5,168.8 866.8,167.6 868.1,166.3 869.4,165.1 870.7,163.8 872,162.6 873.3,161.4 874.6,160.2 875.9,159 877.2,157.8 878.6,156.6 879.9,155.4 881.2,154.2 882.5,153 883.8,151.9 885.1,150.7 886.4,149.6 887.7,148.4 889,147.3 890.3,146.2 891.6,145.1 892.9,144 894.2,142.9 895.5,141.8 896.8,140.8 898.1,139.7 899.4,138.7 900.7,137.7 902.1,136.6 903.4,135.6 904.7,134.7 906,133.7 907.3,132.7 908.6,131.8 909.9,130.8 911.2,129.9 912.5,129 913.8,128.1 915.1,127.3 916.4,126.4 917.8,125.6 919.1,124.7 920.4,123.9 921.7,123.2 923,122.4 924.4,121.6 925.7,120.9 927,120.2 928.4,119.5 929.7,118.8 931.1,118.2 932.4,117.6 933.8,117 935.2,116.4 936.5,115.8 937.9,115.3 939.3,114.8 940.7,114.3 942.1,113.8 943.5,113.4 945,112.9 946.4,112.6 947.9,112.2 949.3,111.8 950.8,111.5 952.3,111.2 953.8,111 955.3,110.7 956.8,110.5 958.4,110.3 959.9,110.2 961.5,110.1 963.1,110 964.7,109.9 966.4,109.8 968,109.8 969.7,109.8 971.4,109.9 973.1,109.9 974.8,110 976.5,110.2 978.3,110.3M805.3,226.2 805.6,224.5 805.9,222.9 806.3,221.2 806.7,219.5 807,217.9 807.4,216.2 807.8,214.5 808.2,212.9 808.6,211.2 809,209.5 809.4,207.9 809.8,206.2 810.2,204.5 810.6,202.9 811.1,201.2 811.5,199.5 811.9,197.9 812.4,196.2 812.9,194.5 813.3,192.9 813.8,191.2 814.3,189.5 814.8,187.9 815.3,186.2 815.8,184.5 816.3,182.9 816.8,181.2 817.3,179.6 817.8,177.9 818.4,176.2 818.9,174.6 819.5,172.9 820,171.2 820.6,169.6 821.1,167.9 821.7,166.2 822.3,164.6 822.9,162.9 823.5,161.2 824,159.6 824.6,157.9 825.2,156.2 825.9,154.6 826.5,152.9 827.1,151.2 827.7,149.6 828.4,147.9 829,146.3 829.6,144.6 830.3,142.9 830.9,141.3 831.6,139.6 832.3,137.9 832.9,136.3 833.6,134.6 834.3,132.9 835,131.3 835.7,129.6 836.4,128 837.1,126.3 837.8,124.6 838.5,123 839.2,121.3 839.9,119.6 840.6,118 841.3,116.3 842.1,114.7 842.8,113 843.6,111.3 844.3,109.7 845,108 845.8,106.4 846.6,104.7 847.3,103.1 848.1,101.4 848.8,99.7 849.6,98.1 850.4,96.4 851.2,94.8 851.9,93.1 852.7,91.5 853.5,89.8 854.3,88.2 855.1,86.5 855.9,84.9 856.7,83.2 857.5,81.6 858.3,79.9 859.1,78.3 859.9,76.6 860.7,75 861.5,73.3 862.3,71.7 863.2,70 864,68.4 864.8,66.8 865.6,65.1 866.4,63.5 867.3,61.9 868.1,60.2 868.9,58.6 869.7,57 870.5,55.4 871.3,53.8 872.2,52.2 873,50.6 873.8,49 874.6,47.4 875.4,45.9 876.2,44.3 876.9,42.8 877.7,41.2 878.4,39.7 879.1,38.3 879.8,36.8 880.4,35.4 881,34.1 881.5,32.8 881.9,31.6 882.2,30.5 882.2,29.5 882,28.7 881.4,28.2 880.4,27.9 878.7,27.9 876.5,28.1 873.6,28.6 870.2,29.4 866.4,30.3 862.1,31.4 857.5,32.6 852.6,33.9 847.5,35.2 842.3,36.6M962,38 965.8,39.5 969.6,41 973.5,42.5 977.4,44.1 981.4,45.6 985.4,47.2 989.4,48.8 993.5,50.3 997.5,51.9 1001.6,53.5 1005.7,55.1 1009.8,56.8 1013.9,58.4 1018,60 1022.1,61.6 1026.2,63.2 1030.3,64.9 1034.4,66.5 1038.5,68.1 1042.6,69.8 1046.7,71.4 1050.8,73.1 1054.9,74.7 1058.9,76.4 1063,78 1067,79.7 1071.1,81.3 1075.1,82.9 1079.1,84.6 1083.1,86.2 1087.1,87.9 1091.1,89.6 1095.1,91.2 1099,92.9 1103,94.5 1106.9,96.2 1110.8,97.8 1114.7,99.5 1118.6,101.1 1122.5,102.8" fill="none" stroke="#0cf070" stroke-width="1.389" stroke-dasharray="1.389 2.292"/>
<path d="M978.3,110.3 980.2,110.5 982,110.7 983.9,111 985.8,111.3 987.8,111.6 989.8,111.9 991.7,112.3 993.8,112.7 995.8,113.1 997.9,113.5 1000,114 1002.1,114.5 1004.2,115M1122.5,102.8 1126.9,104.6 1131.3,106.4 1135.7,108.2 1140,110" fill="none" stroke="#0cf070" stroke-width="1.5"/>
<path d="M753.5,237 754.5,235.4 755.5,233.8 756.5,232.1 757.5,230.5 758.5,228.9 759.5,227.3 760.6,225.7 761.6,224.1 762.7,222.4 763.7,220.8 764.8,219.2 765.9,217.6 767,216 768.1,214.4 769.2,212.7 770.3,211.1 771.5,209.5 772.6,207.9 773.8,206.3 774.9,204.7 776.1,203.1 777.3,201.5 778.5,199.9 779.7,198.3 780.9,196.7 782.1,195.1 783.3,193.4 784.5,191.8 785.7,190.2 787,188.6 788.2,187 789.5,185.4 790.8,183.8 792,182.2 793.3,180.6 794.6,179.1 795.9,177.5 797.2,175.9 798.5,174.3 799.8,172.7 801.1,171.1 802.4,169.5 803.8,167.9 805.1,166.3 806.4,164.8 807.8,163.2 809.1,161.6 810.5,160 811.9,158.4 813.2,156.9 814.6,155.3 816,153.7 817.4,152.2 818.8,150.6 820.1,149 821.5,147.5 822.9,145.9 824.3,144.4 825.8,142.8 827.2,141.2 828.6,139.7 830,138.2 831.4,136.6 832.8,135.1 834.3,133.5 835.7,132 837.1,130.5 838.6,128.9 840,127.4 841.4,125.9 842.9,124.4 844.3,122.9 845.8,121.4 847.2,119.9 848.7,118.4 850.1,116.9 851.5,115.4 853,113.9 854.4,112.4 855.9,111 857.3,109.5 858.8,108.1 860.2,106.6 861.7,105.2 863.1,103.7 864.6,102.3 866,100.9 867.4,99.5 868.9,98.1 870.3,96.7 871.7,95.3 873.2,94 874.6,92.6 876,91.3 877.5,90 878.9,88.6 880.3,87.3 881.7,86.1 883.1,84.8 884.5,83.5 885.9,82.3 887.3,81.1 888.7,79.9 890.1,78.7 891.5,77.6M755,236.5 756.1,234.9 757.2,233.4 758.3,231.8 759.4,230.2 760.5,228.6 761.6,227.1 762.8,225.5 763.9,223.9 765.1,222.4 766.2,220.8 767.4,219.3 768.6,217.7 769.8,216.1 771,214.6 772.2,213 773.4,211.5 774.6,209.9 775.8,208.3 777.1,206.8 778.3,205.2 779.6,203.7 780.8,202.1 782.1,200.6 783.4,199 784.7,197.5 786,195.9 787.3,194.4 788.6,192.8 789.9,191.3 791.2,189.8 792.5,188.2 793.8,186.7 795.2,185.2 796.5,183.6 797.9,182.1 799.2,180.6 800.6,179 801.9,177.5 803.3,176 804.7,174.5 806.1,172.9 807.4,171.4 808.8,169.9 810.2,168.4 811.6,166.9 813,165.4 814.4,163.9 815.8,162.4 817.3,160.9 818.7,159.4 820.1,157.9 821.5,156.4 823,154.9 824.4,153.4 825.8,151.9 827.3,150.5 828.7,149 830.2,147.5 831.6,146.1 833,144.6 834.5,143.1 835.9,141.7 837.4,140.2 838.9,138.8 840.3,137.4 841.8,135.9 843.2,134.5 844.7,133.1 846.1,131.7 847.6,130.2 849.1,128.8 850.5,127.4 852,126 853.5,124.7 854.9,123.3 856.4,121.9 857.8,120.6 859.3,119.2 860.8,117.9 862.2,116.5 863.7,115.2 865.1,113.9 866.6,112.6 868,111.3 869.5,110 870.9,108.7 872.4,107.4 873.8,106.2 875.2,104.9 876.7,103.7 878.1,102.5 879.6,101.3 881,100.1 882.4,98.9 883.8,97.8 885.3,96.7 886.7,95.5 888.1,94.4 889.5,93.4 890.9,92.3 892.3,91.3 893.7,90.2 895.1,89.3 896.5,88.3 897.9,87.3 899.3,86.4 900.8,85.5 902.2,84.7 903.6,83.8 905,83 906.4,82.3 907.8,81.5 909.2,80.8 910.6,80.2 912,79.5 913.5,78.9 914.9,78.4 916.4,77.9 917.8,77.4 919.3,77 920.8,76.6 922.3,76.2 923.8,75.9 925.3,75.7 926.9,75.4 928.5,75.3 930.1,75.2 931.7,75.1 933.3,75.1 935,75.1 936.7,75.1 938.4,75.3 940.2,75.4 942,75.6 943.8,75.9 945.7,76.2 947.5,76.5 949.5,76.9 951.4,77.3 953.4,77.8 955.5,78.3 957.5,78.9 959.6,79.4 961.7,80.1 963.9,80.7 966.1,81.4 968.3,82.2 970.6,82.9 972.9,83.7 975.2,84.6 977.6,85.4 980,86.3" fill="none" stroke="#e412f4" stroke-width="1.389" stroke-dasharray="1.389 2.292"/>
<path d="M891.5,77.6 893,76.4 894.5,75.3 896,74.1 897.5,73 899,72M980,86.3 982.5,87.1 985,88 987.6,88.9 990.2,89.8 992.8,90.8" fill="none" stroke="#e412f4" stroke-width="1.5"/>
<path d="M729.3,317.3 729.1,315.7 728.9,314 728.7,312.4 728.5,310.7 728.3,309.1 728.2,307.4 728,305.8 727.9,304.1 727.8,302.5 727.7,300.8 727.6,299.2 727.5,297.5 727.5,295.9 727.4,294.2 727.4,292.6 727.3,290.9 727.3,289.3 727.3,287.6 727.3,286 727.4,284.3 727.4,282.7 727.5,281 727.5,279.4 727.6,277.7 727.7,276.1 727.8,274.4 727.9,272.8 728.1,271.1 728.2,269.5 728.4,267.8 728.5,266.2 728.7,264.5 728.9,262.9 729.1,261.2 729.3,259.6 729.6,257.9 729.8,256.3 730.1,254.6 730.3,253 730.6,251.3 730.9,249.7 731.2,248.1 731.5,246.4 731.9,244.8 732.2,243.1 732.6,241.5 733,239.8 733.3,238.2 733.7,236.5 734.1,234.9 734.6,233.2 735,231.6 735.5,229.9 735.9,228.3 736.4,226.6 736.9,225 737.4,223.4 737.9,221.7 738.4,220.1 738.9,218.4 739.5,216.8 740,215.1 740.6,213.5 741.2,211.8 741.7,210.2 742.4,208.6 743,206.9 743.6,205.3 744.2,203.6 744.9,202 745.5,200.3 746.2,198.7 746.9,197.1 747.6,195.4 748.3,193.8 749,192.1 749.7,190.5 750.5,188.9 751.2,187.2 752,185.6 752.7,183.9 753.5,182.3 754.3,180.7 755.1,179 755.9,177.4 756.8,175.8 757.6,174.1 758.4,172.5 759.3,170.8 760.1,169.2 761,167.6 761.9,165.9 762.8,164.3 763.7,162.7 764.6,161 765.5,159.4 766.5,157.8 767.4,156.2 768.4,154.5 769.3,152.9 770.3,151.3 771.3,149.6 772.2,148 773.2,146.4 774.2,144.8 775.3,143.1 776.3,141.5 777.3,139.9 778.3,138.3 779.4,136.6 780.4,135 781.5,133.4 782.6,131.8 783.6,130.2 784.7,128.6 785.8,126.9 786.9,125.3 788,123.7 789.1,122.1 790.2,120.5 791.3,118.9 792.5,117.3 793.6,115.7 794.7,114.1 795.9,112.5 797,110.9 798.2,109.3 799.4,107.7 800.5,106.1 801.7,104.5 802.9,103 804,101.4 805.2,99.8 806.4,98.2 807.6,96.6 808.8,95.1 809.9,93.5 811.1,92 812.3,90.4 813.5,88.9 814.7,87.3 815.9,85.8 817.1,84.2 818.3,82.7 819.5,81.2 820.6,79.7 821.8,78.2 823,76.7 824.1,75.2 825.3,73.7M738.9,320.5 738.8,318.8 738.7,317.2 738.6,315.5 738.5,313.9 738.4,312.2 738.3,310.5 738.3,308.9 738.2,307.2 738.2,305.6 738.2,303.9 738.2,302.2 738.2,300.6 738.2,298.9 738.2,297.2 738.3,295.6 738.3,293.9 738.4,292.3 738.5,290.6 738.6,288.9 738.7,287.3 738.8,285.6 738.9,284 739.1,282.3 739.2,280.6 739.4,279 739.6,277.3 739.7,275.7 739.9,274 740.2,272.3 740.4,270.7 740.6,269 740.9,267.3 741.1,265.7 741.4,264 741.7,262.4 742,260.7 742.3,259 742.6,257.4 743,255.7 743.3,254.1 743.7,252.4 744.1,250.7 744.4,249.1 744.8,247.4 745.3,245.8 745.7,244.1 746.1,242.4 746.5,240.8 747,239.1 747.5,237.5 747.9,235.8 748.4,234.1 748.9,232.5 749.4,230.8 750,229.2 750.5,227.5 751.1,225.8 751.6,224.2 752.2,222.5 752.8,220.9 753.4,219.2 754,217.5 754.6,215.9 755.2,214.2 755.8,212.6 756.5,210.9 757.1,209.2 757.8,207.6 758.5,205.9 759.2,204.3 759.9,202.6 760.6,200.9 761.3,199.3 762,197.6 762.8,196 763.5,194.3 764.3,192.6 765.1,191 765.9,189.3 766.7,187.7 767.5,186 768.3,184.3 769.1,182.7 769.9,181 770.8,179.4 771.6,177.7 772.5,176.1 773.4,174.4 774.2,172.7 775.1,171.1 776,169.4 777,167.8 777.9,166.1 778.8,164.5 779.7,162.8 780.7,161.1 781.6,159.5 782.6,157.8 783.6,156.2 784.6,154.5 785.6,152.9 786.6,151.2 787.6,149.5 788.6,147.9 789.6,146.2 790.6,144.6 791.7,142.9 792.7,141.3 793.8,139.6 794.9,138 795.9,136.3 797,134.7 798.1,133 799.2,131.3 800.3,129.7 801.4,128 802.5,126.4 803.7,124.7 804.8,123.1 805.9,121.4 807.1,119.8 808.2,118.1 809.4,116.5 810.5,114.8 811.7,113.2 812.9,111.5 814.1,109.9 815.3,108.2 816.5,106.6 817.7,104.9 818.9,103.3 820.1,101.6 821.3,100 822.5,98.4 823.8,96.7 825,95.1 826.2,93.4 827.5,91.8 828.7,90.2 830,88.5 831.2,86.9 832.5,85.2 833.7,83.6 835,82 836.3,80.3 837.5,78.7 838.8,77.1 840.1,75.5 841.4,73.8 842.7,72.2 843.9,70.6 845.2,69 846.5,67.4 847.8,65.8 849.1,64.2 850.3,62.6 851.6,61 852.9,59.4 854.2,57.8 855.4,56.2 856.7,54.7 858,53.1 859.2,51.5 860.4,50 861.7,48.5 862.9,47 864.1,45.5 865.2,44 866.4,42.6 867.4,41.1 868.5,39.8 869.5,38.4 870.4,37.1 871.2,35.9 871.9,34.8 872.4,33.7 872.8,32.8 872.9,31.9 872.6,31.3 872,30.8 871,30.6 869.4,30.5 867.3,30.7 864.6,31.1 861.4,31.7 857.7,32.5 853.7,33.4 849.2,34.4M953.7,35.5 956.2,36.7 958.9,38 961.7,39.3 964.7,40.7 967.8,42.1 971,43.5" fill="none" stroke="#ea80ec" stroke-width="1.389" stroke-dasharray="1.389 2.292"/>
<path d="M825.3,73.7 826.3,72.3 827.4,70.8 828.4,69.4 829.4,68 830.4,66.6 831.3,65.3 832.2,63.9 833.2,62.6 834,61.3 834.9,60.1 835.6,58.8 836.4,57.6 837.1,56.4 837.7,55.3 838.3,54.2M971,43.5 974.1,44.9 977.3,46.4 980.5,47.9 983.8,49.4 987.1,50.9 990.4,52.4 993.8,54 997.2,55.5 1000.6,57.1 1004,58.6 1007.4,60.2 1010.8,61.8 1014.3,63.4 1017.7,65 1021.2,66.6 1024.6,68.2 1028.1,69.8 1031.5,71.4 1035,73" fill="none" stroke="#ea80ec" stroke-width="1.5"/>
<path d="M395.8,211.2 398,209.6 400.1,208 402.3,206.4 404.6,204.8 406.8,203.2 409.1,201.6M1388.2,200 1384.8,198.4 1381.3,196.8 1377.8,195.2 1374.2,193.6 1370.6,192.1 1367,190.5 1363.4,188.9 1359.7,187.3 1356,185.7 1352.3,184.1 1348.5,182.5 1344.7,180.9 1340.9,179.4 1337.1,177.8 1333.2,176.2 1329.3,174.6 1325.4,173 1321.5,171.5 1317.5,169.9 1313.5,168.3 1309.5,166.8 1305.4,165.2 1301.4,163.6 1297.3,162.1 1293.2,160.5 1289.1,159 1284.9,157.4 1280.7,155.9 1276.6,154.3 1272.4,152.8 1268.1,151.2 1263.9,149.7 1259.6,148.1 1255.4,146.6 1251.1,145.1 1246.8,143.6 1242.4,142 1238.1,140.5 1233.8,139 1229.4,137.5 1225.1,136 1220.7,134.5 1216.3,133 1211.9,131.5 1207.5,130" fill="none" stroke="#58da00" stroke-width="1.389" stroke-dasharray="1.389 2.292"/>
<path d="M1207.5,130 1201.8,128.2 1196.2,126.3 1190.5,124.5" fill="none" stroke="#58da00" stroke-width="1.5"/>
<path d="M570.1,262.8 570.7,261.2 571.2,259.6 571.8,257.9 572.4,256.3 573,254.7 573.6,253 574.3,251.4 575,249.8 575.7,248.1 576.4,246.5 577.2,244.9 578,243.2 578.8,241.6 579.6,240 580.5,238.3 581.4,236.7 582.3,235.1 583.2,233.4 584.1,231.8 585.1,230.2 586.1,228.6 587.1,226.9 588.1,225.3 589.2,223.7 590.3,222 591.4,220.4 592.5,218.8 593.7,217.2 594.8,215.5 596,213.9 597.3,212.3 598.5,210.7 599.8,209 601,207.4 602.3,205.8 603.7,204.2 605,202.5 606.4,200.9 607.8,199.3 609.2,197.7 610.6,196 612,194.4 613.5,192.8 615,191.2 616.5,189.6 618,187.9 619.6,186.3 621.1,184.7 622.7,183.1 624.3,181.5 626,179.9 627.6,178.2 629.3,176.6 631,175 632.7,173.4 634.4,171.8 636.1,170.2 637.9,168.6 639.6,167 641.4,165.4 643.2,163.7 645,162.1 646.9,160.5 648.7,158.9 650.6,157.3 652.5,155.7 654.4,154.1 656.3,152.5 658.2,150.9 660.2,149.3 662.1,147.8 664.1,146.2 666.1,144.6 668.1,143 670.1,141.4 672.1,139.8 674.2,138.2 676.2,136.6 678.3,135.1 680.4,133.5 682.5,131.9 684.6,130.3 686.7,128.8 688.8,127.2 690.9,125.6 693.1,124.1 695.2,122.5 697.4,121 699.6,119.4 701.7,117.9 703.9,116.3 706.1,114.8 708.3,113.2 710.5,111.7 712.7,110.2 714.9,108.6 717.1,107.1 719.3,105.6 721.6,104.1 723.8,102.6 726,101.1 728.2,99.6 730.4,98.1 732.6,96.6 734.8,95.1 737,93.6 739.2,92.2 741.4,90.7 743.6,89.3 745.8,87.9 747.9,86.4 750,85 752.2,83.6 754.3,82.2 756.4,80.9 758.4,79.5 760.5,78.1 762.5,76.8 764.4,75.5 766.4,74.2 768.3,72.9 770.2,71.7 772,70.4 773.7,69.2 775.4,68 777.1,66.9 778.7,65.7 780.2,64.6 781.6,63.6 782.9,62.5 784.2,61.6 785.3,60.6 786.3,59.7" fill="none" stroke="#ffaa0c" stroke-width="1.389" stroke-dasharray="1.389 2.292"/>
<path d="M786.3,59.7 787.2,58.8 788,58 788.7,57.2 789.2,56.5 789.5,55.8 789.6,55.2 789.5,54.7" fill="none" stroke="#ffaa0c" stroke-width="1.5"/>
<circle cx="722.5" cy="78.7" r="1.1" fill="#ff7a40"/>
<circle cx="564.5" cy="149.7" r="1.1" fill="#ff7a40"/>
<circle cx="751.3" cy="153" r="1.1" fill="#ff7a40"/>
<circle cx="788" cy="146.7" r="1.1" fill="#ff7a40"/>
<circle cx="1080.8" cy="107" r="1.1" fill="#ff7a40"/>
<circle cx="1174.5" cy="138.8" r="1.1" fill="#ff7a40"/>
<circle cx="1295.5" cy="217.7" r="1.1" fill="#ff7a40"/>
<circle cx="1004.2" cy="115" r="1.1" fill="#ff7a40"/>
<circle cx="1140" cy="110" r="1.1" fill="#ff7a40"/>
<circle cx="899" cy="72" r="1.1" fill="#ff7a40"/>
<circle cx="992.8" cy="90.8" r="1.1" fill="#ff7a40"/>
<circle cx="838.3" cy="54.2" r="1.1" fill="#ff7a40"/>
<circle cx="1035" cy="73" r="1.1" fill="#ff7a40"/>
<circle cx="1190.5" cy="124.5" r="1.1" fill="#ff7a40"/>
<circle cx="789.5" cy="54.7" r="1.1" fill="#ff7a40"/>
<path d="M731.8,265.1h7M735.3,261.6v7M731.2,270.1h7M734.7,266.6v7M732.4,267.5h7M735.9,264v7M737.6,269.3h7M741.1,265.8v7M723.9,266.3h7M727.4,262.8v7M735.4,266.8h7M738.9,263.3v7M721.8,266.5h7M725.3,263v7M814.6,218.5h7M818.1,215v7M801.8,226.2h7M805.3,222.7v7M725.8,317.3h7M729.3,313.8v7M735.4,320.5h7M738.9,317v7M392.3,211.2h7M395.8,207.7v7M566.6,262.8h7M570.1,259.3v7" stroke="#ff0000" stroke-width="1.39" fill="none"/>
<path d="M713,267.3 713.2,266.5 713.5,265.6 713.7,264.7 714,263.9 714.4,263 714.8,262.2 715.2,261.3 715.6,260.5 716.1,259.6 716.6,258.8 717.1,258 717.7,257.2 718.3,256.4 718.9,255.6 719.5,254.8 720.2,254.1 720.9,253.3 721.6,252.6 722.3,251.9 723.1,251.2 723.9,250.5 724.7,249.9 725.5,249.2 726.3,248.6 727.1,248 728,247.5 728.8,246.9 729.7,246.4 730.6,245.9 731.5,245.5 732.4,245 733.3,244.6 734.2,244.2 735.1,243.9 736.1,243.6 737,243.3 737.9,243 738.8,242.8 739.7,242.6 740.6,242.4 741.5,242.2 742.4,242.1 743.3,242.1 744.2,242 745.1,242 745.9,242 746.8,242.1 747.6,242.1 748.5,242.2 749.3,242.4 750.1,242.6 750.8,242.8 751.6,243 752.3,243.3 753.1,243.6 753.8,243.9 754.4,244.2 755.1,244.6 755.7,245 756.4,245.5 757,245.9 757.5,246.4 758.1,246.9 758.6,247.5 759.1,248 759.6,248.6 760,249.2 760.4,249.9 760.8,250.5 761.2,251.2 761.6,251.9 761.9,252.6 762.2,253.3 762.4,254.1 762.7,254.8 762.9,255.6 763,256.4 763.2,257.2 763.3,258 763.4,258.8 763.5,259.6 763.5,260.5 763.5,261.3 763.5,262.2 763.5,263 763.4,263.9 763.3,264.7 763.2,265.6 763,266.5 762.8,267.3 762.6,268.2 762.4,269.1 762.1,269.9 761.8,270.8 761.5,271.6 761.2,272.5 760.8,273.3 760.4,274.1 760,275 759.5,275.8 759.1,276.6 758.6,277.4 758.1,278.1 757.5,278.9 757,279.6 756.4,280.4 755.8,281.1 755.2,281.8 754.6,282.5 753.9,283.1 753.3,283.8 752.6,284.4 751.9,285 751.1,285.6 750.4,286.1 749.7,286.7 748.9,287.2 748.1,287.7 747.3,288.1 746.5,288.6 745.7,289 744.9,289.4 744.1,289.7 743.2,290 742.4,290.3 741.5,290.6 740.6,290.9 739.8,291.1 738.9,291.3 738,291.4 737.2,291.6 736.3,291.7 735.4,291.7 734.6,291.8 733.7,291.8 732.8,291.8 732,291.7 731.1,291.7 730.3,291.6 729.4,291.4 728.6,291.3 727.8,291.1 727,290.9 726.2,290.6 725.4,290.3 724.6,290 723.8,289.7 723.1,289.4 722.4,289 721.7,288.6 721,288.1 720.3,287.7 719.7,287.2 719,286.7 718.4,286.1 717.9,285.6 717.3,285 716.8,284.4 716.3,283.8 715.8,283.1 715.4,282.5 715,281.8 714.6,281.1 714.2,280.4 713.9,279.6 713.6,278.9 713.3,278.1 713.1,277.4 712.9,276.6 712.7,275.8 712.6,275 712.5,274.1 712.5,273.3 712.4,272.5 712.4,271.6 712.5,270.8 712.6,269.9 712.7,269.1 712.8,268.2 713,267.3" fill="none" stroke="#ff2200" stroke-width="2.08"/>
<path d="M731.1,245.1 731.4,244.2 731.7,243.3 732,242.5 732.4,241.6 732.8,240.7 733.2,239.9 733.7,239 734.2,238.2 734.8,237.3 735.3,236.5 735.9,235.7 736.5,234.9 737.2,234 737.8,233.3 738.5,232.5 739.2,231.7 740,231 740.8,230.2 741.5,229.5 742.3,228.8 743.2,228.1 744,227.5 744.8,226.8 745.7,226.2 746.6,225.6 747.5,225.1 748.4,224.5 749.3,224 750.2,223.5 751.1,223 752.1,222.6 753,222.2 753.9,221.8 754.9,221.4 755.8,221.1 756.8,220.8 757.7,220.5 758.6,220.3 759.6,220.1 760.5,219.9 761.4,219.8 762.3,219.6 763.2,219.6 764.1,219.5 765,219.5 765.8,219.5 766.7,219.6 767.5,219.6 768.3,219.8 769.1,219.9 769.9,220.1 770.7,220.3 771.4,220.5 772.1,220.8 772.8,221.1 773.5,221.4 774.2,221.8 774.8,222.2 775.4,222.6 776,223 776.6,223.5 777.1,224 777.6,224.5 778.1,225.1 778.6,225.6 779,226.2 779.4,226.8 779.8,227.5 780.1,228.1 780.5,228.8 780.8,229.5 781,230.2 781.3,231 781.5,231.7 781.7,232.5 781.8,233.3 781.9,234 782,234.9 782.1,235.7 782.1,236.5 782.1,237.3 782.1,238.2 782.1,239 782,239.9 781.9,240.7 781.7,241.6 781.6,242.5 781.4,243.3 781.2,244.2 780.9,245.1 780.6,245.9 780.3,246.8 780,247.6 779.7,248.5 779.3,249.3 778.9,250.2 778.5,251 778,251.8 777.5,252.7 777,253.5 776.5,254.3 775.9,255 775.4,255.8 774.8,256.6 774.2,257.3 773.6,258 772.9,258.7 772.2,259.4 771.5,260.1 770.8,260.8 770.1,261.4 769.4,262 768.6,262.6 767.9,263.2 767.1,263.7 766.3,264.2 765.5,264.7 764.7,265.2 763.8,265.7 763,266.1 762.2,266.5 761.3,266.9 760.4,267.2 759.6,267.6 758.7,267.9 757.8,268.1 756.9,268.4 756.1,268.6 755.2,268.8 754.3,268.9 753.4,269.1 752.5,269.2 751.6,269.2 750.8,269.3 749.9,269.3 749,269.3 748.2,269.2 747.3,269.2 746.5,269.1 745.7,268.9 744.8,268.8 744,268.6 743.2,268.4 742.5,268.1 741.7,267.9 741,267.6 740.2,267.2 739.5,266.9 738.8,266.5 738.1,266.1 737.5,265.7 736.9,265.2 736.3,264.7 735.7,264.2 735.1,263.7 734.6,263.2 734.1,262.6 733.6,262 733.1,261.4 732.7,260.8 732.3,260.1 732,259.4 731.6,258.7 731.3,258 731.1,257.3 730.8,256.6 730.6,255.8 730.5,255 730.3,254.3 730.2,253.5 730.1,252.7 730.1,251.8 730.1,251 730.1,250.2 730.2,249.3 730.3,248.5 730.5,247.6 730.6,246.8 730.8,245.9 731.1,245.1" fill="none" stroke="#e412f4" stroke-width="2.08"/>
<path d="M802.3,226.4 802.5,225.6 802.7,224.7 803,223.8 803.2,223 803.6,222.1 803.9,221.3 804.3,220.4 804.7,219.6 805.1,218.7 805.6,217.9 806.1,217 806.6,216.2 807.1,215.4 807.7,214.6 808.3,213.8 808.9,213.1 809.6,212.3 810.2,211.6 810.9,210.8 811.6,210.1 812.4,209.5 813.1,208.8 813.9,208.1 814.7,207.5 815.5,206.9 816.3,206.3 817.1,205.8 817.9,205.3 818.8,204.8 819.7,204.3 820.5,203.8 821.4,203.4 822.3,203 823.2,202.6 824.1,202.3 825,202 825.9,201.7 826.8,201.5 827.6,201.3 828.5,201.1 829.4,201 830.3,200.8 831.2,200.8 832.1,200.7 833,200.7 833.8,200.7 834.7,200.8 835.5,200.8 836.3,201 837.2,201.1 838,201.3 838.8,201.5 839.5,201.7 840.3,202 841.1,202.3 841.8,202.6 842.5,203 843.2,203.4 843.9,203.8 844.5,204.3 845.1,204.8 845.8,205.3 846.3,205.8 846.9,206.3 847.4,206.9 848,207.5 848.5,208.1 848.9,208.8 849.4,209.5 849.8,210.1 850.2,210.8 850.5,211.6 850.9,212.3 851.2,213.1 851.4,213.8 851.7,214.6 851.9,215.4 852.1,216.2 852.3,217 852.4,217.9 852.5,218.7 852.6,219.6 852.6,220.4 852.7,221.3 852.6,222.1 852.6,223 852.5,223.8 852.4,224.7 852.3,225.6 852.2,226.4 852,227.3 851.8,228.2 851.5,229 851.2,229.9 850.9,230.7 850.6,231.6 850.3,232.4 849.9,233.2 849.5,234 849.1,234.8 848.6,235.6 848.1,236.4 847.6,237.2 847.1,237.9 846.5,238.6 846,239.4 845.4,240.1 844.8,240.7 844.1,241.4 843.5,242.1 842.8,242.7 842.1,243.3 841.4,243.9 840.7,244.4 839.9,245 839.2,245.5 838.4,246 837.6,246.5 836.8,246.9 836,247.4 835.2,247.8 834.3,248.1 833.5,248.5 832.6,248.8 831.8,249.1 830.9,249.4 830.1,249.6 829.2,249.8 828.3,250 827.5,250.1 826.6,250.3 825.7,250.4 824.8,250.4 824,250.5 823.1,250.5 822.2,250.5 821.4,250.4 820.5,250.4 819.7,250.3 818.8,250.1 818,250 817.2,249.8 816.4,249.6 815.6,249.4 814.8,249.1 814,248.8 813.3,248.5 812.5,248.1 811.8,247.8 811.1,247.4 810.5,246.9 809.8,246.5 809.2,246 808.5,245.5 807.9,245 807.4,244.4 806.8,243.9 806.3,243.3 805.8,242.7 805.3,242.1 804.9,241.4 804.5,240.7 804.1,240.1 803.7,239.4 803.4,238.6 803.1,237.9 802.9,237.2 802.6,236.4 802.4,235.6 802.2,234.8 802.1,234 802,233.2 801.9,232.4 801.9,231.6 801.9,230.7 801.9,229.9 801.9,229 802,228.2 802.2,227.3 802.3,226.4" fill="none" stroke="#0cf070" stroke-width="2.08"/>
<path d="M717.9,318.4 717.9,317.5 718,316.7 718,315.8 718.1,314.9 718.3,314.1 718.5,313.2 718.7,312.4 718.9,311.5 719.2,310.7 719.5,309.9 719.8,309.1 720.2,308.3 720.6,307.5 721,306.7 721.5,306 722,305.2 722.5,304.5 723,303.8 723.6,303.1 724.2,302.4 724.8,301.8 725.4,301.1 726.1,300.5 726.8,299.9 727.5,299.3 728.2,298.8 728.9,298.3 729.7,297.8 730.5,297.3 731.2,296.8 732,296.4 732.9,296 733.7,295.7 734.5,295.3 735.3,295 736.2,294.7 737,294.5 737.9,294.2 738.8,294 739.6,293.9 740.5,293.7 741.4,293.6 742.2,293.6 743.1,293.5 744,293.5 744.9,293.5 745.7,293.6 746.6,293.6 747.4,293.7 748.3,293.9 749.1,294 749.9,294.2 750.7,294.5 751.5,294.7 752.3,295 753.1,295.3 753.9,295.7 754.6,296 755.4,296.4 756.1,296.8 756.8,297.3 757.5,297.8 758.2,298.3 758.8,298.8 759.5,299.3 760.1,299.9 760.7,300.5 761.2,301.1 761.8,301.8 762.3,302.4 762.8,303.1 763.3,303.8 763.8,304.5 764.2,305.2 764.6,306 765,306.7 765.4,307.5 765.7,308.3 766,309.1 766.3,309.9 766.6,310.7 766.8,311.5 767,312.4 767.2,313.2 767.3,314.1 767.5,314.9 767.6,315.8 767.6,316.7 767.7,317.5 767.7,318.4 767.7,319.3 767.7,320.1 767.6,321 767.5,321.8 767.4,322.7 767.2,323.6 767.1,324.4 766.9,325.2 766.7,326.1 766.4,326.9 766.1,327.7 765.8,328.5 765.5,329.3 765.1,330.1 764.8,330.8 764.4,331.6 763.9,332.3 763.5,333 763,333.7 762.5,334.4 762,335 761.4,335.7 760.9,336.3 760.3,336.9 759.7,337.5 759.1,338 758.4,338.5 757.8,339 757.1,339.5 756.4,339.9 755.7,340.4 754.9,340.8 754.2,341.1 753.4,341.5 752.6,341.8 751.8,342.1 751,342.3 750.2,342.6 749.4,342.8 748.6,342.9 747.7,343.1 746.9,343.2 746,343.2 745.2,343.3 744.3,343.3 743.4,343.3 742.6,343.2 741.7,343.2 740.8,343.1 739.9,342.9 739.1,342.8 738.2,342.6 737.3,342.3 736.5,342.1 735.6,341.8 734.8,341.5 734,341.1 733.1,340.8 732.3,340.4 731.5,339.9 730.7,339.5 730,339 729.2,338.5 728.5,338 727.7,337.5 727,336.9 726.3,336.3 725.7,335.7 725,335 724.4,334.4 723.8,333.7 723.2,333 722.7,332.3 722.2,331.6 721.7,330.8 721.2,330.1 720.8,329.3 720.3,328.5 720,327.7 719.6,326.9 719.3,326.1 719,325.2 718.8,324.4 718.5,323.6 718.3,322.7 718.2,321.8 718.1,321 718,320.1 717.9,319.3 717.9,318.4" fill="none" stroke="#ea80ec" stroke-width="2.08"/>
<path d="M1398.1,206.7 1396.6,205.8 1395,204.9 1393.5,204.1 1392,203.2 1390.6,202.3 1389.1,201.5 1387.7,200.6 1386.3,199.8 1385,198.9 1383.6,198.1 1382.3,197.3 1381.1,196.4 1379.9,195.6 1378.7,194.8M423.1,194 424.9,193.2 426.8,192.5 428.6,191.7 430.5,191 432.4,190.3 434.2,189.6 436.1,188.9 437.9,188.3 439.8,187.6 441.6,187 443.4,186.4 445.1,185.9 446.9,185.3 448.6,184.8 450.3,184.3 451.9,183.9 453.5,183.5 455.1,183.1 456.6,182.7 458.1,182.3 459.5,182 460.9,181.8 462.2,181.5 463.4,181.3 464.7,181.1 465.8,181 466.9,180.8 467.9,180.8 468.9,180.7 469.8,180.7 470.6,180.7 471.4,180.8 472.1,180.8 472.7,181 473.3,181.1 473.8,181.3 474.2,181.5 474.6,181.8 474.8,182 475.1,182.3 475.2,182.7 475.3,183.1 475.3,183.5 475.2,183.9 475.1,184.3 474.9,184.8 474.7,185.3 474.4,185.9 474,186.4 473.6,187 473.1,187.6 472.5,188.3 471.9,188.9 471.3,189.6 470.5,190.3 469.8,191 469,191.7 468.1,192.5 467.2,193.2 466.2,194 465.2,194.8 464.2,195.6 463.1,196.4 462,197.3 460.8,198.1 459.7,198.9 458.4,199.8 457.2,200.6 455.9,201.5 454.6,202.3 453.3,203.2 451.9,204.1 450.6,204.9 449.2,205.8 447.8,206.7 446.3,207.5 444.9,208.4 443.4,209.3 442,210.1 440.5,210.9 439,211.8 437.5,212.6 436,213.4 434.5,214.2 433,215 431.5,215.8 430,216.6 428.5,217.3 427,218.1 425.5,218.8 424,219.5 422.5,220.2 421,220.9 419.5,221.5 418,222.2 416.6,222.8 415.1,223.4 413.7,224 412.3,224.5 410.9,225.1 409.5,225.6 408.1,226.1 406.8,226.5 405.4,227 404.1,227.4 402.8,227.8 401.6,228.2 400.3,228.5 399.1,228.8 397.9,229.1 396.7,229.4 395.6,229.6 394.5,229.8 393.4,230 392.3,230.2 391.3,230.3 390.3,230.4 389.4,230.4 388.4,230.5 387.5,230.5 386.7,230.5 385.9,230.4 385.1,230.4 384.4,230.3 383.7,230.2 383,230 382.4,229.8 381.9,229.6 381.4,229.4 380.9,229.1 380.5,228.8 380.1,228.5 379.8,228.2 379.5,227.8 379.3,227.4 379.1,227 379,226.5 378.9,226.1 378.9,225.6 378.9,225.1 379,224.5 379.1,224 379.3,223.4 379.6,222.8 379.9,222.2 380.3,221.5 380.7,220.9 381.2,220.2 381.7,219.5 382.3,218.8 383,218.1 383.7,217.3 384.5,216.6 385.3,215.8 386.2,215M1412.5,214.2 1410.9,213.4 1409.3,212.6 1407.7,211.8 1406,210.9 1404.4,210.1 1402.8,209.3 1401.2,208.4 1399.7,207.5 1398.1,206.7" fill="none" stroke="#58da00" stroke-width="2.08"/>
<path d="M543.6,263.6 544,262.7 544.5,261.8 545,261 545.6,260.1 546.2,259.2 546.8,258.4 547.5,257.5 548.2,256.7 548.9,255.9 549.7,255 550.5,254.2 551.3,253.4 552.1,252.6 553,251.8 553.9,251 554.8,250.3 555.8,249.5 556.7,248.8 557.7,248.1 558.7,247.4 559.7,246.7 560.7,246.1 561.8,245.4 562.8,244.8 563.9,244.2 564.9,243.7 566,243.1 567.1,242.6 568.1,242.1 569.2,241.7 570.3,241.2 571.3,240.8 572.4,240.4 573.4,240.1 574.5,239.8 575.5,239.5 576.5,239.2 577.5,239 578.5,238.8 579.5,238.6 580.5,238.4 581.4,238.3 582.3,238.3 583.2,238.2 584.1,238.2 585,238.2 585.8,238.3 586.6,238.3 587.4,238.4 588.1,238.6 588.9,238.8 589.6,239 590.2,239.2 590.9,239.5 591.5,239.8 592.1,240.1 592.6,240.4 593.1,240.8 593.6,241.2 594.1,241.7 594.5,242.1 594.9,242.6 595.2,243.1 595.5,243.7 595.8,244.2 596.1,244.8 596.3,245.4 596.5,246.1 596.7,246.7 596.8,247.4 596.9,248.1 597,248.8 597,249.5 597.1,250.3 597,251 597,251.8 596.9,252.6 596.8,253.4 596.7,254.2 596.5,255 596.3,255.9 596.1,256.7 595.8,257.5 595.5,258.4 595.2,259.2 594.9,260.1 594.6,261 594.2,261.8 593.8,262.7 593.4,263.6 592.9,264.4 592.5,265.3 592,266.2 591.5,267 590.9,267.9 590.4,268.7 589.8,269.6 589.2,270.4 588.6,271.2 588,272 587.3,272.8 586.6,273.6 586,274.4 585.3,275.1 584.5,275.9 583.8,276.6 583.1,277.3 582.3,278 581.5,278.7 580.7,279.4 579.9,280 579.1,280.6 578.3,281.2 577.5,281.8 576.6,282.3 575.8,282.9 574.9,283.4 574.1,283.9 573.2,284.3 572.3,284.8 571.4,285.2 570.5,285.6 569.7,285.9 568.8,286.2 567.9,286.5 567,286.8 566.1,287.1 565.2,287.3 564.3,287.5 563.4,287.6 562.5,287.8 561.6,287.9 560.7,287.9 559.8,288 559,288 558.1,288 557.2,287.9 556.4,287.9 555.6,287.8 554.7,287.6 553.9,287.5 553.1,287.3 552.4,287.1 551.6,286.8 550.9,286.5 550.1,286.2 549.4,285.9 548.8,285.6 548.1,285.2 547.5,284.8 546.9,284.3 546.3,283.9 545.7,283.4 545.2,282.9 544.7,282.3 544.2,281.8 543.8,281.2 543.4,280.6 543,280 542.6,279.4 542.3,278.7 542,278 541.8,277.3 541.6,276.6 541.4,275.9 541.3,275.1 541.2,274.4 541.1,273.6 541.1,272.8 541.2,272 541.2,271.2 541.3,270.4 541.5,269.6 541.6,268.7 541.9,267.9 542.1,267 542.4,266.2 542.8,265.3 543.1,264.4 543.6,263.6" fill="none" stroke="#ffaa0c" stroke-width="2.08"/>
<text transform="translate(738.4,269.8) scale(.945,1)" text-anchor="middle" font-size="11.11" fill="#fff" font-family='"DejaVu Sans","Liberation Sans",sans-serif'>STA</text>
<text transform="translate(756.6,247.3) scale(.945,1)" text-anchor="middle" font-size="11.11" fill="#fff" font-family='"DejaVu Sans","Liberation Sans",sans-serif'>NTA</text>
<text transform="translate(827.8,228.5) scale(.945,1)" text-anchor="middle" font-size="11.11" fill="#fff" font-family='"DejaVu Sans","Liberation Sans",sans-serif'>AND</text>
<text transform="translate(743.2,321.3) scale(.945,1)" text-anchor="middle" font-size="11.11" fill="#fff" font-family='"DejaVu Sans","Liberation Sans",sans-serif'>OER</text>
<text transform="translate(425,208.5) scale(.945,1)" text-anchor="middle" font-size="11.11" fill="#fff" font-family='"DejaVu Sans","Liberation Sans",sans-serif'>LMI</text>
<text transform="translate(569.1,266) scale(.945,1)" text-anchor="middle" font-size="11.11" fill="#fff" font-family='"DejaVu Sans","Liberation Sans",sans-serif'>ORI</text>
<g font-family='"DejaVu Sans Mono","Liberation Mono",monospace' font-size="13.89" fill="#fff" xml:space="preserve">
<text x="304.4" y="21.9">RU0001</text>
<text x="304.4" y="35.1">Beg: 20251101 15:44:10 (sol = 219.12°)</text>
<text x="304.4" y="48.7">End: 20251102 03:06:48 (sol = 219.59°)</text>
<text x="304.4" y="60.6">--------------------------------------</text>
<text x="304.4" y="74.8">...: 24</text>
<text x="304.4" y="87.9">STA: 7</text>
<text x="304.4" y="101.1">AND: 2</text>
<text x="304.4" y="114.4">NTA: 2</text>
<text x="304.4" y="127.8">OER: 2</text>
<text x="304.4" y="141">LMI: 1</text>
<text x="304.4" y="154.1">ORI: 1</text>
</g>
<path d="M74,842.3V637.3M218,842.3V637.3M364,842.3V637.3M504,842.3V637.3M649,842.3V637.3M795,842.3V637.3M938,842.3V637.3M1089,842.3V637.3M1237,842.3V637.3M1391,842.3V637.3M1545,842.3V637.3M1684,842.3V637.3" fill="none" stroke="#d4d4d4" stroke-opacity="0.5" stroke-width="2.083" stroke-dasharray="2.083 3.4375"/>
<g clip-path="url(#bc)" text-anchor="middle" font-size="27.3" fill="#4d4d4d" font-family='"DejaVu Sans","Liberation Sans",sans-serif'>
<text transform="translate(149.1,665.8) rotate(-90) scale(1,1.05)">APR</text>
<text transform="translate(294.2,670.5) rotate(-90) scale(1,1.05)">MAY</text>
<text transform="translate(435,661.9) rotate(-90) scale(1,1.05)">JUN</text>
<text transform="translate(575,659) rotate(-90) scale(1,1.05)">JUL</text>
<text transform="translate(722.2,668.9) rotate(-90) scale(1,1.05)">AUG</text>
<text transform="translate(870,665.6) rotate(-90) scale(1,1.05)">SEP</text>
<text transform="translate(1014.1,668.8) rotate(-90) scale(1,1.05)">OCT</text>
<text transform="translate(1167.2,671.8) rotate(-90) scale(1,1.05)">NOV</text>
<text transform="translate(1316.1,670.1) rotate(-90) scale(1,1.05)">DEC</text>
<text transform="translate(1466.1,660.7) rotate(-90) scale(1,1.05)">JAN</text>
<text transform="translate(1625.3,667.4) rotate(-90) scale(1,1.05)">FEB</text>
<text transform="translate(1762.2,672.7) rotate(-90) scale(1,1.05)">MAR</text>
</g>
<path d="M1092.5,842.3V637.3" stroke="#ff0000" stroke-width="1.3" stroke-dasharray="4.3 1.87" fill="none"/>
<path d="M1094.5,842.3V637.3" stroke="#ff0000" stroke-width="1.3" stroke-dasharray="4.3 1.87" fill="none"/>
<path d="M106,834H129.1M164,834H344.1M365,834H623.1M634,834H785.1M805,834H898.1M918,834H971.1M982,834H1064.1M1080,834H1201.1M1241,834H1323.1M1334,834H1353.1M1378,834H1441.1M1456,834H1509.1M1520,834H1544.1M1721,834H1744.1M1755,834H1779.1" stroke="#ec84ef" stroke-width="4.17" fill="none"/>
<path d="M164,818H188.1M223,818H286.1M311,818H340.1M365,818H491.1M507,818H653.1M703,818H736.1M771,818H844.1M869,818H986.1M1001,818H1015.1M1060,818H1211.1M1241,818H1265.1M1290,818H1314.1M1339,818H1363.1M1383,818H1426.1M1456,818H1480.1M1545,818H1568.1" stroke="#dd11ff" stroke-width="4.17" fill="none"/>
<path d="M164,802H188.1M257,802H486.1M507,802H614.1M624,802H716.1M727,802H824.1M947,802H1147.1M1158,802H1245.1M1256,802H1441.1M1456,802H1480.1M1549,802H1573.1" stroke="#ff1d00" stroke-width="4.17" fill="none"/>
<path d="M194,786H217.1M321,786H506.1M517,786H540.1M556,786H682.1M805,786H829.1M952,786H971.1M987,786H1123.1M1153,786H1216.1M1241,786H1265.1M1315,786H1338.1M1393,786H1416.1M1461,786H1646.1" stroke="#ffb20d" stroke-width="4.17" fill="none"/>
<path d="M340,770H369.1M409,770H447.1M468,770H491.1M526,770H545.1M561,770H589.1M615,770H648.1M957,770H986.1M1060,770H1084.1M1099,770H1123.1M1158,770H1191.1M1246,770H1270.1M1422,770H1509.1" stroke="#fff000" stroke-width="4.17" fill="none"/>
<path d="M419,754H442.1M531,754H555.1M566,754H589.1M619,754H741.1M967,754H1133.1M1182,754H1343.1M1466,754H1490.1" stroke="#a4ff28" stroke-width="4.17" fill="none"/>
<path d="M429,738H452.1M575,738H731.1M991,738H1103.1M1114,738H1221.1M1261,738H1289.1M1486,738H1509.1" stroke="#59d200" stroke-width="4.17" fill="none"/>
<path d="M590,722H614.1M654,722H770.1M1070,722H1240.1M1261,722H1284.1" stroke="#00fb73" stroke-width="4.17" fill="none"/>
<path d="M595,706H731.1M1089,706H1118.1M1197,706H1221.1M1270,706H1323.1" stroke="#00e0ff" stroke-width="4.17" fill="none"/>
<path d="M1109,690H1133.1" stroke="#000ecd" stroke-width="4.17" fill="none"/>
<path d="M112.8,834h8.33M117,829.8v8.33M240.8,834h8.33M245,829.8v8.33M509.5,834h8.33M513.7,829.8v8.33M705.8,834h8.33M710,829.8v8.33M831.5,834h8.33M835.7,829.8v8.33M959.8,834h8.33M964,829.8v8.33M984.5,834h8.33M988.7,829.8v8.33M1113.5,834h8.33M1117.7,829.8v8.33M1292.5,834h8.33M1296.7,829.8v8.33M1338.5,834h8.33M1342.7,829.8v8.33M1409.8,834h8.33M1414,829.8v8.33M1478.5,834h8.33M1482.7,829.8v8.33M1527.1,834h8.33M1531.3,829.8v8.33M1728.5,834h8.33M1732.7,829.8v8.33M1762.5,834h8.33M1766.7,829.8v8.33M171.8,818h8.33M176,813.8v8.33M254.8,818h8.33M259,813.8v8.33M322.8,818h8.33M327,813.8v8.33M435.8,818h8.33M440,813.8v8.33M598.1,818h8.33M602.3,813.8v8.33M714.8,818h8.33M719,813.8v8.33M791.8,818h8.33M796,813.8v8.33M937.5,818h8.33M941.7,813.8v8.33M1003.8,818h8.33M1008,813.8v8.33M1150.5,818h8.33M1154.7,813.8v8.33M1248.5,818h8.33M1252.7,813.8v8.33M1297.8,818h8.33M1302,813.8v8.33M1346.5,818h8.33M1350.7,813.8v8.33M1400.5,818h8.33M1404.7,813.8v8.33M1463.8,818h8.33M1468,813.8v8.33M1551.5,818h8.33M1555.7,813.8v8.33M173.8,802h8.33M178,797.8v8.33M377.8,802h8.33M382,797.8v8.33M543.5,802h8.33M547.7,797.8v8.33M680.5,802h8.33M684.7,797.8v8.33M739.5,802h8.33M743.7,797.8v8.33M1072.8,802h8.33M1077,797.8v8.33M1214.5,802h8.33M1218.7,797.8v8.33M1302.5,802h8.33M1306.7,797.8v8.33M1463.8,802h8.33M1468,797.8v8.33M1556.5,802h8.33M1560.7,797.8v8.33M200.8,786h8.33M205,781.8v8.33M399.5,786h8.33M403.7,781.8v8.33M523.5,786h8.33M527.7,781.8v8.33M637.5,786h8.33M641.7,781.8v8.33M812.8,786h8.33M817,781.8v8.33M957.8,786h8.33M962,781.8v8.33M1037.5,786h8.33M1041.7,781.8v8.33M1184.5,786h8.33M1188.7,781.8v8.33M1248.5,786h8.33M1252.7,781.8v8.33M1321.5,786h8.33M1325.7,781.8v8.33M1400.5,786h8.33M1404.7,781.8v8.33M1542.5,786h8.33M1546.7,781.8v8.33M354.5,770h8.33M358.7,765.8v8.33M425.5,770h8.33M429.7,765.8v8.33M475.5,770h8.33M479.7,765.8v8.33M533.5,770h8.33M537.7,765.8v8.33M569.5,770h8.33M573.7,765.8v8.33M629.5,770h8.33M633.7,765.8v8.33M971.5,770h8.33M975.7,765.8v8.33M1067.5,770h8.33M1071.7,765.8v8.33M1106.8,770h8.33M1111,765.8v8.33M1174.8,770h8.33M1179,765.8v8.33M1253.5,770h8.33M1257.7,765.8v8.33M1463.8,770h8.33M1468,765.8v8.33M426.5,754h8.33M430.7,749.8v8.33M538.8,754h8.33M543,749.8v8.33M572.8,754h8.33M577,749.8v8.33M702.5,754h8.33M706.7,749.8v8.33M1091.5,754h8.33M1095.7,749.8v8.33M1267.8,754h8.33M1272,749.8v8.33M1473.8,754h8.33M1478,749.8v8.33M435.8,738h8.33M440,733.8v8.33M629.5,738h8.33M633.7,733.8v8.33M1036.8,738h8.33M1041,733.8v8.33M1165.5,738h8.33M1169.7,733.8v8.33M1272.5,738h8.33M1276.7,733.8v8.33M1493.5,738h8.33M1497.7,733.8v8.33M598.1,722h8.33M602.3,717.8v8.33M724.8,722h8.33M729,717.8v8.33M1184.5,722h8.33M1188.7,717.8v8.33M1267.8,722h8.33M1272,717.8v8.33M685.5,706h8.33M689.7,701.8v8.33M1099.5,706h8.33M1103.7,701.8v8.33M1204.8,706h8.33M1209,701.8v8.33M1297.8,706h8.33M1302,701.8v8.33M1116.8,690h8.33M1121,685.8v8.33" stroke="#fff" stroke-width="2.08" fill="none"/>
<g font-family='"DejaVu Sans","Liberation Sans",sans-serif' font-size="11.11" fill="#fff" text-anchor="middle">
<text transform="translate(117.5,831) scale(.945,1)">KSE</text>
<text transform="translate(254,831) scale(.945,1)">ETA</text>
<text transform="translate(494,831) scale(.945,1)">NZC</text>
<text transform="translate(709.5,831) scale(.945,1)">NDA</text>
<text transform="translate(851.5,831) scale(.945,1)">SPE</text>
<text transform="translate(944.5,831) scale(.945,1)">ARD</text>
<text transform="translate(1023,831) scale(.945,1)">EGE</text>
<text transform="translate(1140.5,831) scale(.945,1)">NTA</text>
<text transform="translate(1282,831) scale(.945,1)">MON</text>
<text transform="translate(1345.9,831) scale(.945,1)">URS</text>
<text transform="translate(1409.5,831) scale(.945,1)">AHY</text>
<text transform="translate(1482.5,831) scale(.945,1)">GUM</text>
<text transform="translate(1532,831) scale(.945,1)">OHY</text>
<text transform="translate(1732.5,831) scale(.945,1)">XHE</text>
<text transform="translate(1767,831) scale(.945,1)">EVI</text>
<text transform="translate(176,815) scale(.945,1)">AVB</text>
<text transform="translate(254.5,815) scale(.945,1)">ELY</text>
<text transform="translate(327.9,815) scale(.945,1)">CAM</text>
<text transform="translate(430.4,815) scale(.945,1)">SSG</text>
<text transform="translate(582.4,815) scale(.945,1)">PCA</text>
<text transform="translate(719.5,815) scale(.945,1)">AUD</text>
<text transform="translate(807.5,815) scale(.945,1)">AUR</text>
<text transform="translate(929.9,815) scale(.945,1)">DSX</text>
<text transform="translate(1008,815) scale(.945,1)">OCU</text>
<text transform="translate(1135.5,815) scale(.945,1)">OER</text>
<text transform="translate(1253,815) scale(.945,1)">DKD</text>
<text transform="translate(1302,815) scale(.945,1)">DSV</text>
<text transform="translate(1351,815) scale(.945,1)">ALY</text>
<text transform="translate(1404.5,815) scale(.945,1)">JLE</text>
<text transform="translate(1468,815) scale(.945,1)">SCC</text>
<text transform="translate(1556.5,815) scale(.945,1)">FEV</text>
<text transform="translate(176,799) scale(.945,1)">LYR</text>
<text transform="translate(371.5,799) scale(.945,1)">JMC</text>
<text transform="translate(562.9,799) scale(.945,1)">JPE</text>
<text transform="translate(670,799) scale(.945,1)">PAU</text>
<text transform="translate(777.9,799) scale(.945,1)">NIA</text>
<text transform="translate(1047,799) scale(.945,1)">STA</text>
<text transform="translate(1203.9,799) scale(.945,1)">NOO</text>
<text transform="translate(1350.9,799) scale(.945,1)">COM</text>
<text transform="translate(1468,799) scale(.945,1)">NCC</text>
<text transform="translate(1561,799) scale(.945,1)">FED</text>
<text transform="translate(205.5,783) scale(.945,1)">HVI</text>
<text transform="translate(415.9,783) scale(.945,1)">ARI</text>
<text transform="translate(528.5,783) scale(.945,1)">SZC</text>
<text transform="translate(621.4,783) scale(.945,1)">CAP</text>
<text transform="translate(817,783) scale(.945,1)">NUE</text>
<text transform="translate(963.9,783) scale(.945,1)">OCT</text>
<text transform="translate(1057.4,783) scale(.945,1)">ORI</text>
<text transform="translate(1184.5,783) scale(.945,1)">AMO</text>
<text transform="translate(1253,783) scale(.945,1)">DPC</text>
<text transform="translate(1326.5,783) scale(.945,1)">XVI</text>
<text transform="translate(1404.5,783) scale(.945,1)">QUA</text>
<text transform="translate(1555.9,783) scale(.945,1)">AAN</text>
<text transform="translate(356.9,767) scale(.945,1)">TAH</text>
<text transform="translate(430.4,767) scale(.945,1)">JEA</text>
<text transform="translate(479.5,767) scale(.945,1)">JIP</text>
<text transform="translate(537.9,767) scale(.945,1)">PPS</text>
<text transform="translate(577.4,767) scale(.945,1)">ZCS</text>
<text transform="translate(631.5,767) scale(.945,1)">GDR</text>
<text transform="translate(973.9,767) scale(.945,1)">DRA</text>
<text transform="translate(1072,767) scale(.945,1)">LUM</text>
<text transform="translate(1111,767) scale(.945,1)">RPU</text>
<text transform="translate(1174.5,767) scale(.945,1)">THA</text>
<text transform="translate(1258,767) scale(.945,1)">PSU</text>
<text transform="translate(1467.9,767) scale(.945,1)">XCB</text>
<text transform="translate(430.5,751) scale(.945,1)">JRC</text>
<text transform="translate(543,751) scale(.945,1)">CAN</text>
<text transform="translate(577.5,751) scale(.945,1)">FAN</text>
<text transform="translate(680,751) scale(.945,1)">PER</text>
<text transform="translate(1052.4,751) scale(.945,1)">CTA</text>
<text transform="translate(1262.5,751) scale(.945,1)">HYD</text>
<text transform="translate(1478,751) scale(.945,1)">XUM</text>
<text transform="translate(440.5,735) scale(.945,1)">COR</text>
<text transform="translate(655.4,735) scale(.945,1)">SDA</text>
<text transform="translate(1047,735) scale(.945,1)">LMI</text>
<text transform="translate(1169.9,735) scale(.945,1)">LEO</text>
<text transform="translate(1277.4,735) scale(.945,1)">EHY</text>
<text transform="translate(1497.5,735) scale(.945,1)">ECV</text>
<text transform="translate(602,719) scale(.945,1)">JXA</text>
<text transform="translate(714.4,719) scale(.945,1)">KCG</text>
<text transform="translate(1155,719) scale(.945,1)">AND</text>
<text transform="translate(1272.5,719) scale(.945,1)">DAD</text>
<text transform="translate(665.4,703) scale(.945,1)">ERI</text>
<text transform="translate(1105.9,703) scale(.945,1)">SLD</text>
<text transform="translate(1209,703) scale(.945,1)">ORS</text>
<text transform="translate(1296.5,703) scale(.945,1)">GEM</text>
<text transform="translate(1121,687) scale(.945,1)">KUM</text>
</g>
<rect x="19.5" y="637.5" width="1763" height="205" fill="none" stroke="#fff" stroke-width="1.11"/>
<path d="M19.5,843v4.9M264.5,843v4.9M509.5,843v4.9M754.5,843v4.9M998.5,843v4.9M1243.5,843v4.9M1488.5,843v4.9M1733.5,843v4.9" stroke="#fff" stroke-width="1.11" fill="none"/>
<g font-family='"DejaVu Sans","Liberation Sans",sans-serif' font-size="13.89" fill="#fff" text-anchor="middle">
<text x="19.5" y="862.2">0</text>
<text x="264.4" y="862.2">50</text>
<text x="509.2" y="862.2">100</text>
<text x="754.1" y="862.2">150</text>
<text x="998.9" y="862.2">200</text>
<text x="1243.8" y="862.2">250</text>
<text x="1488.7" y="862.2">300</text>
<text x="1733.5" y="862.2">350</text>
<text x="900.8" y="882.2">Solar longitude (deg)</text>
</g>
</svg></body></html>
